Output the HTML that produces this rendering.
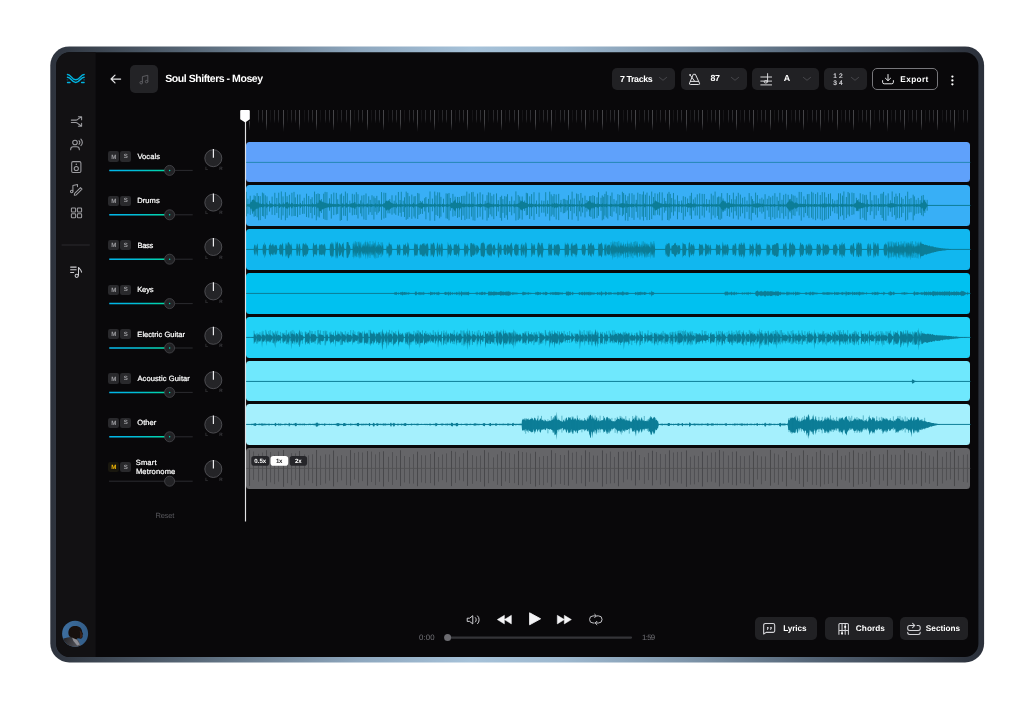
<!DOCTYPE html>
<html lang="en"><head><meta charset="utf-8"><title>Soul Shifters - Mosey</title>
<style>
*{box-sizing:border-box;margin:0;padding:0}
html,body{width:1036px;height:709px;background:#fff;overflow:hidden}
body{font-family:"Liberation Sans",sans-serif;color:#fff;position:relative;will-change:transform;-webkit-font-smoothing:antialiased;text-rendering:geometricPrecision}
.abs{position:absolute}
.t{position:absolute;white-space:nowrap;line-height:1}
.btn{position:absolute;background:#212124;border-radius:5px}
.ms{position:absolute;height:10.4px;border-radius:2.2px;background:#29292c;color:#a9a9ad;font-size:5.6px;font-weight:bold;text-align:center;line-height:10.6px}
svg{position:absolute;overflow:visible}
.lbl{position:absolute;white-space:nowrap;font-size:7.5px;line-height:9px;color:#fff;-webkit-text-stroke:0.25px #fff}
.lr{position:absolute;font-size:3.6px;color:#4a4a4e;line-height:1;font-weight:bold}
</style></head>
<body>
<svg width="1036" height="709" viewBox="0 0 1036 709" style="left:0;top:0">
<defs>
<linearGradient id="fg" x1="50" x2="984" y1="0" y2="0" gradientUnits="userSpaceOnUse">
<stop offset="0" stop-color="#2d323c"/><stop offset="0.03" stop-color="#363e49"/><stop offset="0.16" stop-color="#5a6a7a"/><stop offset="0.33" stop-color="#8ea7be"/><stop offset="0.45" stop-color="#a6c2d9"/><stop offset="0.55" stop-color="#9db8cf"/><stop offset="0.68" stop-color="#7f96ab"/><stop offset="0.82" stop-color="#536375"/><stop offset="0.96" stop-color="#333a45"/><stop offset="1" stop-color="#2b303a"/>
</linearGradient>
<clipPath id="sc"><rect x="56.2" y="52.2" width="922.2" height="604.8" rx="13.5"/></clipPath>
</defs>
<rect x="50.3" y="46.4" width="933.8" height="616" rx="19" fill="url(#fg)"/>
<rect x="56.2" y="52.2" width="922.2" height="604.8" rx="13.5" fill="#09080a"/>
<rect x="50" y="46" width="45.7" height="620" fill="#121113" clip-path="url(#sc)"/>
<rect x="61.6" y="244.5" width="28.2" height="1" fill="#2a2a2e"/>
</svg>
<svg style="left:110px;top:74px" width="11" height="10" viewBox="0 0 11 10"><path d="M10.6 5H1.2M5 1.1L1.1 5L5 8.9" fill="none" stroke="#e4e4e6" stroke-width="1.25" stroke-linecap="round" stroke-linejoin="round"/></svg>
<div class="abs" style="left:130px;top:65px;width:27.6px;height:27.6px;border-radius:5px;background:#232326"></div>
<svg style="left:138.5px;top:73.5px" width="10" height="11" viewBox="0 0 10 11"><path d="M3.4 8.6V2.6L8.8 1.3V7.5" fill="none" stroke="#626266" stroke-width="0.9" stroke-linejoin="round"/><ellipse cx="2.2" cy="8.7" rx="1.3" ry="1.2" fill="none" stroke="#626266" stroke-width="0.9"/><ellipse cx="7.6" cy="7.6" rx="1.3" ry="1.2" fill="none" stroke="#626266" stroke-width="0.9"/></svg>
<div class="t" style="left:165.30px;top:73.91px;font-size:10.56px;font-weight:bold;letter-spacing:-0.476px;color:#fff;">Soul Shifters - Mosey</div>
<div class="btn" style="left:612px;top:67.6px;width:63.3px;height:22.7px"></div>
<div class="t" style="left:619.95px;top:74.55px;font-size:8.85px;font-weight:bold;letter-spacing:-0.391px;color:#fff;">7 Tracks</div>
<svg style="left:659px;top:77.4px" width="8" height="3.8" viewBox="0 0 8 3.8"><path d="M0.4 0.4L4.0 3.3L7.6 0.4" fill="none" stroke="#4c4c50" stroke-width="0.9" stroke-linecap="round" stroke-linejoin="round"/></svg>
<div class="btn" style="left:680.7px;top:67.6px;width:66.3px;height:22.7px"></div>
<svg width="1036" height="709" viewBox="0 0 1036 709" style="left:0;top:0"><g fill="none" stroke="#e2e2e4" stroke-width="1" stroke-linejoin="round" stroke-linecap="round"><path d="M693.6 74.3H695.4L699.5 83.2A0.9 0.9 0 0 1 698.7 84.5H690.3A0.9 0.9 0 0 1 689.5 83.2Z"/><path d="M690.4 81.4H698.6"/><path d="M694.6 81.2L690.6 75.6"/></g><circle cx="690.1" cy="74.9" r="0.95" fill="#e2e2e4"/></svg>
<div class="t" style="left:710.55px;top:74.11px;font-size:8.85px;font-weight:bold;letter-spacing:-0.521px;color:#fff;">87</div>
<svg style="left:730.8px;top:77.4px" width="8" height="3.8" viewBox="0 0 8 3.8"><path d="M0.4 0.4L4.0 3.3L7.6 0.4" fill="none" stroke="#4c4c50" stroke-width="0.9" stroke-linecap="round" stroke-linejoin="round"/></svg>
<div class="btn" style="left:752px;top:67.6px;width:66.8px;height:22.7px"></div>
<svg width="1036" height="709" viewBox="0 0 1036 709" style="left:0;top:0"><g fill="none" stroke="#e2e2e4" stroke-width="0.95" stroke-linecap="round"><path d="M760.8 77H771.6M760.8 81.1H771.6M760.8 84.9H771.6M767.6 73.6V81.2"/><ellipse cx="765.8" cy="81.8" rx="1.7" ry="1.25"/></g></svg>
<div class="t" style="left:783.79px;top:73.94px;font-size:8.85px;font-weight:bold;letter-spacing:0.000px;color:#fff;">A</div>
<svg style="left:802.6px;top:77.4px" width="8" height="3.8" viewBox="0 0 8 3.8"><path d="M0.4 0.4L4.0 3.3L7.6 0.4" fill="none" stroke="#4c4c50" stroke-width="0.9" stroke-linecap="round" stroke-linejoin="round"/></svg>
<div class="btn" style="left:824px;top:67.6px;width:43px;height:22.7px"></div>
<div class="t" style="left:833.36px;top:73.99px;font-size:6.60px;font-weight:normal;letter-spacing:0.063px;color:#dcdce0;-webkit-text-stroke:0.2px #dcdce0">1 2</div>
<div class="t" style="left:833.14px;top:80.79px;font-size:6.60px;font-weight:normal;letter-spacing:0.163px;color:#dcdce0;-webkit-text-stroke:0.2px #dcdce0">3 4</div>
<svg style="left:850.6px;top:77.4px" width="8" height="3.8" viewBox="0 0 8 3.8"><path d="M0.4 0.4L4.0 3.3L7.6 0.4" fill="none" stroke="#4c4c50" stroke-width="0.9" stroke-linecap="round" stroke-linejoin="round"/></svg>
<div class="abs" style="left:872px;top:67.6px;width:65.5px;height:22.7px;border:1px solid #77777b;border-radius:5px"></div>
<svg style="left:881.6px;top:74.4px" width="12" height="10.4" viewBox="0 0 12 10.4"><path d="M6 0.5v6 M3.4 4.2L6 6.7L8.6 4.2 M0.6 6.6v1.6a1.6 1.6 0 0 0 1.6 1.6h7.6a1.6 1.6 0 0 0 1.6-1.6V6.6" fill="none" stroke="#e8e8ea" stroke-width="1" stroke-linecap="round" stroke-linejoin="round"/></svg>
<div class="t" style="left:900.30px;top:75.78px;font-size:8.23px;font-weight:bold;letter-spacing:0.390px;color:#fff;">Export</div>
<svg style="left:950px;top:75px" width="5" height="11" viewBox="0 0 5 11"><circle cx="2.4" cy="1.6" r="1.15" fill="#fff"/><circle cx="2.4" cy="5.45" r="1.15" fill="#fff"/><circle cx="2.4" cy="9.3" r="1.15" fill="#fff"/></svg>
<svg width="1036" height="709" viewBox="0 0 1036 709" style="left:0;top:0"><g fill="none" stroke="#00b4e1" stroke-width="1.5" stroke-linecap="round" stroke-linejoin="round"><path d="M67.5 74.45C71.2 74.45 71.3 79.7 75.8 79.7S80.4 74.45 84.1 74.45"/><path d="M67.5 77.15C71.2 77.15 71.3 82.4 75.8 82.4S80.4 77.15 84.1 77.15"/><path d="M67.5 82.5H70M81.6 82.5H84.1" stroke-width="1.35"/><path d="M67.1 79.8H67.9M83.7 79.8H84.5" stroke-width="1.2" stroke-opacity="0.4"/></g></svg>
<svg width="1036" height="709" viewBox="0 0 1036 709" style="left:0;top:0"><g fill="none" stroke="#9c9ca0" stroke-width="1.05" stroke-linecap="round" stroke-linejoin="round"><path d="M71.3 120.1H75.6C77.2 120.1 77.6 119.4 78.6 118.6L81.4 117M78.4 116.8H81.6V119.8"/><path d="M71.3 122.5H75.6C77.2 122.5 77.6 123.2 78.6 124L81.4 126M78.4 126.3H81.6V123.2"/><circle cx="75" cy="142.5" r="2.3"/><path d="M70.7 149.7V149.2A2.5 2.5 0 0 1 73.2 146.7H76.8A2.5 2.5 0 0 1 79.3 149.2V149.7"/><path d="M79 140.7A2.6 2.6 0 0 1 79 144.3M80.9 139.1A5 5 0 0 1 80.9 145.7"/><rect x="71.7" y="161.6" width="9.2" height="10.9" rx="1.3"/><circle cx="76.3" cy="168.5" r="2.1"/><path d="M72.9 191V185.5L77.5 184.5V186.6"/><circle cx="71.7" cy="191.4" r="1.25"/><path d="M74.3 195.2L74.7 193.4L80.5 187.6L82 189.1L76.2 194.9Z"/><rect x="71.4" y="208" width="4.2" height="3.9" rx="0.7"/><rect x="77.4" y="208" width="4.2" height="3.9" rx="0.7"/><rect x="71.4" y="213.8" width="4.2" height="3.9" rx="0.7"/><rect x="77.4" y="213.8" width="4.2" height="3.9" rx="0.7"/><g stroke="#cdcdd1"><path d="M70.6 267.1H76.2M70.6 269.7H76.2M70.6 272.4H73.7"/><path d="M78.5 275.2V267.4C79.4 268.6 81.2 269.8 81.6 272.2"/><circle cx="76.7" cy="275.8" r="1.6"/></g></g><circle cx="76.3" cy="164.2" r="0.75" fill="#9c9ca0"/></svg>
<svg width="1036" height="709" viewBox="0 0 1036 709" style="left:0;top:0"><defs><clipPath id="av"><circle cx="75.1" cy="633.7" r="13"/></clipPath>
<linearGradient id="avg" x1="62" x2="88" y1="0" y2="0" gradientUnits="userSpaceOnUse"><stop offset="0" stop-color="#3e6fa0"/><stop offset="1" stop-color="#335d88"/></linearGradient>
<linearGradient id="avb" x1="62" x2="80" y1="636" y2="647" gradientUnits="userSpaceOnUse"><stop offset="0" stop-color="#1c1c20"/><stop offset="0.55" stop-color="#3e3e43"/><stop offset="1" stop-color="#5c5c62"/></linearGradient></defs>
<circle cx="75.1" cy="633.7" r="13" fill="url(#avg)"/>
<g clip-path="url(#av)">
<path d="M60 650V641C62 638.5 66 637.6 69.5 637.2L73 635.5L78.5 640.5L80.5 645.2L79 650Z" fill="url(#avb)"/>
<path d="M71.5 636L76.5 639L79.8 644.6L77.2 645.4L73.4 641Z" fill="#8e8e94"/>
<path d="M69.6 636.4C67.6 633.6 68.2 629.4 70.6 627.4C73.2 625.4 78 625.4 80.4 627.8C81.6 629 82 630.6 82.2 632L83.2 634.2L82.4 634.8L82.6 636.8C82.4 638.4 81.2 638.8 79.8 638.6L77.6 638.2L76.4 639.4Z" fill="#17100e"/>
<path d="M79.6 630.5C80.8 631 81.6 632.4 82 633.8L82.4 636.6C81.8 638 80.8 638.4 79.6 638.2C80.4 636 80.4 633 79.6 630.5Z" fill="#3a2218"/>
</g></svg>
<svg width="1036" height="709" viewBox="0 0 1036 709" style="left:0;top:0"><defs>
<linearGradient id="rg" x1="0" x2="0" y1="110" y2="132" gradientUnits="userSpaceOnUse"><stop offset="0" stop-color="#5c5c60"/><stop offset="0.6" stop-color="#5c5c60" stop-opacity="0.9"/><stop offset="0.85" stop-color="#5c5c60" stop-opacity="0.25"/><stop offset="1" stop-color="#5c5c60" stop-opacity="0"/></linearGradient>
<linearGradient id="rs" x1="0" x2="0" y1="110" y2="123" gradientUnits="userSpaceOnUse"><stop offset="0" stop-color="#37373b"/><stop offset="0.7" stop-color="#37373b" stop-opacity="0.9"/><stop offset="1" stop-color="#37373b" stop-opacity="0.1"/></linearGradient>
</defs><g fill="none" stroke-width="1"><path d="M249.5 121V130" stroke="url(#rg)" stroke-opacity="0.8"/><path d="M258.5 110V123" stroke="url(#rs)" stroke-opacity="0.70"/><path d="M262.5 110V123" stroke="url(#rs)" stroke-opacity="0.85"/><path d="M266.5 110V130" stroke="url(#rg)" stroke-opacity="0.74"/><path d="M270.5 110V123" stroke="url(#rs)" stroke-opacity="0.29"/><path d="M274.5 110V123" stroke="url(#rs)" stroke-opacity="0.70"/><path d="M278.5 110V123" stroke="url(#rs)" stroke-opacity="0.85"/><path d="M283.5 110V134.5" stroke="url(#rg)" stroke-opacity="0.74"/><path d="M287.5 110V123" stroke="url(#rs)" stroke-opacity="0.29"/><path d="M291.5 110V123" stroke="url(#rs)" stroke-opacity="0.70"/><path d="M295.5 110V123" stroke="url(#rs)" stroke-opacity="0.85"/><path d="M299.5 110V130" stroke="url(#rg)" stroke-opacity="0.74"/><path d="M304.5 110V123" stroke="url(#rs)" stroke-opacity="0.29"/><path d="M308.5 110V123" stroke="url(#rs)" stroke-opacity="0.70"/><path d="M312.5 110V123" stroke="url(#rs)" stroke-opacity="0.85"/><path d="M316.5 110V130" stroke="url(#rg)" stroke-opacity="0.74"/><path d="M320.5 110V123" stroke="url(#rs)" stroke-opacity="0.29"/><path d="M325.5 110V123" stroke="url(#rs)" stroke-opacity="0.71"/><path d="M329.5 110V123" stroke="url(#rs)" stroke-opacity="0.85"/><path d="M333.5 110V130" stroke="url(#rg)" stroke-opacity="0.74"/><path d="M337.5 110V123" stroke="url(#rs)" stroke-opacity="0.30"/><path d="M341.5 110V123" stroke="url(#rs)" stroke-opacity="0.71"/><path d="M346.5 110V123" stroke="url(#rs)" stroke-opacity="0.85"/><path d="M350.5 110V134.5" stroke="url(#rg)" stroke-opacity="0.74"/><path d="M354.5 110V123" stroke="url(#rs)" stroke-opacity="0.30"/><path d="M358.5 110V123" stroke="url(#rs)" stroke-opacity="0.71"/><path d="M362.5 110V123" stroke="url(#rs)" stroke-opacity="0.85"/><path d="M367.5 110V130" stroke="url(#rg)" stroke-opacity="0.74"/><path d="M371.5 110V123" stroke="url(#rs)" stroke-opacity="0.30"/><path d="M375.5 110V123" stroke="url(#rs)" stroke-opacity="0.71"/><path d="M379.5 110V123" stroke="url(#rs)" stroke-opacity="0.85"/><path d="M383.5 110V130" stroke="url(#rg)" stroke-opacity="0.74"/><path d="M388.5 110V123" stroke="url(#rs)" stroke-opacity="0.30"/><path d="M392.5 110V123" stroke="url(#rs)" stroke-opacity="0.71"/><path d="M396.5 110V123" stroke="url(#rs)" stroke-opacity="0.85"/><path d="M400.5 110V130" stroke="url(#rg)" stroke-opacity="0.74"/><path d="M404.5 110V123" stroke="url(#rs)" stroke-opacity="0.30"/><path d="M409.5 110V123" stroke="url(#rs)" stroke-opacity="0.71"/><path d="M413.5 110V123" stroke="url(#rs)" stroke-opacity="0.85"/><path d="M417.5 110V134.5" stroke="url(#rg)" stroke-opacity="0.74"/><path d="M421.5 110V123" stroke="url(#rs)" stroke-opacity="0.30"/><path d="M425.5 110V123" stroke="url(#rs)" stroke-opacity="0.71"/><path d="M430.5 110V123" stroke="url(#rs)" stroke-opacity="0.85"/><path d="M434.5 110V130" stroke="url(#rg)" stroke-opacity="0.74"/><path d="M438.5 110V123" stroke="url(#rs)" stroke-opacity="0.30"/><path d="M442.5 110V123" stroke="url(#rs)" stroke-opacity="0.71"/><path d="M446.5 110V123" stroke="url(#rs)" stroke-opacity="0.84"/><path d="M451.5 110V130" stroke="url(#rg)" stroke-opacity="0.74"/><path d="M455.5 110V123" stroke="url(#rs)" stroke-opacity="0.30"/><path d="M459.5 110V123" stroke="url(#rs)" stroke-opacity="0.71"/><path d="M463.5 110V123" stroke="url(#rs)" stroke-opacity="0.84"/><path d="M467.5 110V130" stroke="url(#rg)" stroke-opacity="0.74"/><path d="M472.5 110V123" stroke="url(#rs)" stroke-opacity="0.30"/><path d="M476.5 110V123" stroke="url(#rs)" stroke-opacity="0.71"/><path d="M480.5 110V123" stroke="url(#rs)" stroke-opacity="0.84"/><path d="M484.5 110V134.5" stroke="url(#rg)" stroke-opacity="0.74"/><path d="M488.5 110V123" stroke="url(#rs)" stroke-opacity="0.30"/><path d="M493.5 110V123" stroke="url(#rs)" stroke-opacity="0.71"/><path d="M497.5 110V123" stroke="url(#rs)" stroke-opacity="0.84"/><path d="M501.5 110V130" stroke="url(#rg)" stroke-opacity="0.74"/><path d="M505.5 110V123" stroke="url(#rs)" stroke-opacity="0.30"/><path d="M509.5 110V123" stroke="url(#rs)" stroke-opacity="0.71"/><path d="M514.5 110V123" stroke="url(#rs)" stroke-opacity="0.84"/><path d="M518.5 110V130" stroke="url(#rg)" stroke-opacity="0.74"/><path d="M522.5 110V123" stroke="url(#rs)" stroke-opacity="0.30"/><path d="M526.5 110V123" stroke="url(#rs)" stroke-opacity="0.71"/><path d="M530.5 110V123" stroke="url(#rs)" stroke-opacity="0.84"/><path d="M535.5 110V130" stroke="url(#rg)" stroke-opacity="0.74"/><path d="M539.5 110V123" stroke="url(#rs)" stroke-opacity="0.30"/><path d="M543.5 110V123" stroke="url(#rs)" stroke-opacity="0.72"/><path d="M547.5 110V123" stroke="url(#rs)" stroke-opacity="0.84"/><path d="M551.5 110V134.5" stroke="url(#rg)" stroke-opacity="0.74"/><path d="M555.5 110V123" stroke="url(#rs)" stroke-opacity="0.30"/><path d="M560.5 110V123" stroke="url(#rs)" stroke-opacity="0.72"/><path d="M564.5 110V123" stroke="url(#rs)" stroke-opacity="0.84"/><path d="M568.5 110V130" stroke="url(#rg)" stroke-opacity="0.74"/><path d="M572.5 110V123" stroke="url(#rs)" stroke-opacity="0.30"/><path d="M576.5 110V123" stroke="url(#rs)" stroke-opacity="0.72"/><path d="M581.5 110V123" stroke="url(#rs)" stroke-opacity="0.84"/><path d="M585.5 110V130" stroke="url(#rg)" stroke-opacity="0.74"/><path d="M589.5 110V123" stroke="url(#rs)" stroke-opacity="0.31"/><path d="M593.5 110V123" stroke="url(#rs)" stroke-opacity="0.72"/><path d="M597.5 110V123" stroke="url(#rs)" stroke-opacity="0.84"/><path d="M602.5 110V130" stroke="url(#rg)" stroke-opacity="0.74"/><path d="M606.5 110V123" stroke="url(#rs)" stroke-opacity="0.31"/><path d="M610.5 110V123" stroke="url(#rs)" stroke-opacity="0.72"/><path d="M614.5 110V123" stroke="url(#rs)" stroke-opacity="0.84"/><path d="M618.5 110V134.5" stroke="url(#rg)" stroke-opacity="0.74"/><path d="M623.5 110V123" stroke="url(#rs)" stroke-opacity="0.31"/><path d="M627.5 110V123" stroke="url(#rs)" stroke-opacity="0.72"/><path d="M631.5 110V123" stroke="url(#rs)" stroke-opacity="0.84"/><path d="M635.5 110V130" stroke="url(#rg)" stroke-opacity="0.74"/><path d="M639.5 110V123" stroke="url(#rs)" stroke-opacity="0.31"/><path d="M644.5 110V123" stroke="url(#rs)" stroke-opacity="0.72"/><path d="M648.5 110V123" stroke="url(#rs)" stroke-opacity="0.84"/><path d="M652.5 110V130" stroke="url(#rg)" stroke-opacity="0.73"/><path d="M656.5 110V123" stroke="url(#rs)" stroke-opacity="0.31"/><path d="M660.5 110V123" stroke="url(#rs)" stroke-opacity="0.72"/><path d="M665.5 110V123" stroke="url(#rs)" stroke-opacity="0.83"/><path d="M669.5 110V130" stroke="url(#rg)" stroke-opacity="0.73"/><path d="M673.5 110V123" stroke="url(#rs)" stroke-opacity="0.31"/><path d="M677.5 110V123" stroke="url(#rs)" stroke-opacity="0.72"/><path d="M681.5 110V123" stroke="url(#rs)" stroke-opacity="0.83"/><path d="M686.5 110V134.5" stroke="url(#rg)" stroke-opacity="0.73"/><path d="M690.5 110V123" stroke="url(#rs)" stroke-opacity="0.31"/><path d="M694.5 110V123" stroke="url(#rs)" stroke-opacity="0.72"/><path d="M698.5 110V123" stroke="url(#rs)" stroke-opacity="0.83"/><path d="M702.5 110V130" stroke="url(#rg)" stroke-opacity="0.73"/><path d="M707.5 110V123" stroke="url(#rs)" stroke-opacity="0.31"/><path d="M711.5 110V123" stroke="url(#rs)" stroke-opacity="0.72"/><path d="M715.5 110V123" stroke="url(#rs)" stroke-opacity="0.83"/><path d="M719.5 110V130" stroke="url(#rg)" stroke-opacity="0.73"/><path d="M723.5 110V123" stroke="url(#rs)" stroke-opacity="0.31"/><path d="M728.5 110V123" stroke="url(#rs)" stroke-opacity="0.72"/><path d="M732.5 110V123" stroke="url(#rs)" stroke-opacity="0.83"/><path d="M736.5 110V130" stroke="url(#rg)" stroke-opacity="0.73"/><path d="M740.5 110V123" stroke="url(#rs)" stroke-opacity="0.31"/><path d="M744.5 110V123" stroke="url(#rs)" stroke-opacity="0.72"/><path d="M749.5 110V123" stroke="url(#rs)" stroke-opacity="0.83"/><path d="M753.5 110V134.5" stroke="url(#rg)" stroke-opacity="0.73"/><path d="M757.5 110V123" stroke="url(#rs)" stroke-opacity="0.31"/><path d="M761.5 110V123" stroke="url(#rs)" stroke-opacity="0.73"/><path d="M765.5 110V123" stroke="url(#rs)" stroke-opacity="0.83"/><path d="M770.5 110V130" stroke="url(#rg)" stroke-opacity="0.73"/><path d="M774.5 110V123" stroke="url(#rs)" stroke-opacity="0.31"/><path d="M778.5 110V123" stroke="url(#rs)" stroke-opacity="0.73"/><path d="M782.5 110V123" stroke="url(#rs)" stroke-opacity="0.83"/><path d="M786.5 110V130" stroke="url(#rg)" stroke-opacity="0.73"/><path d="M791.5 110V123" stroke="url(#rs)" stroke-opacity="0.31"/><path d="M795.5 110V123" stroke="url(#rs)" stroke-opacity="0.73"/><path d="M799.5 110V123" stroke="url(#rs)" stroke-opacity="0.83"/><path d="M803.5 110V130" stroke="url(#rg)" stroke-opacity="0.73"/><path d="M807.5 110V123" stroke="url(#rs)" stroke-opacity="0.31"/><path d="M812.5 110V123" stroke="url(#rs)" stroke-opacity="0.73"/><path d="M816.5 110V123" stroke="url(#rs)" stroke-opacity="0.83"/><path d="M820.5 110V134.5" stroke="url(#rg)" stroke-opacity="0.73"/><path d="M824.5 110V123" stroke="url(#rs)" stroke-opacity="0.31"/><path d="M828.5 110V123" stroke="url(#rs)" stroke-opacity="0.73"/><path d="M832.5 110V123" stroke="url(#rs)" stroke-opacity="0.83"/><path d="M837.5 110V130" stroke="url(#rg)" stroke-opacity="0.73"/><path d="M841.5 110V123" stroke="url(#rs)" stroke-opacity="0.32"/><path d="M845.5 110V123" stroke="url(#rs)" stroke-opacity="0.73"/><path d="M849.5 110V123" stroke="url(#rs)" stroke-opacity="0.83"/><path d="M853.5 110V130" stroke="url(#rg)" stroke-opacity="0.73"/><path d="M858.5 110V123" stroke="url(#rs)" stroke-opacity="0.32"/><path d="M862.5 110V123" stroke="url(#rs)" stroke-opacity="0.73"/><path d="M866.5 110V123" stroke="url(#rs)" stroke-opacity="0.83"/><path d="M870.5 110V130" stroke="url(#rg)" stroke-opacity="0.73"/><path d="M874.5 110V123" stroke="url(#rs)" stroke-opacity="0.32"/><path d="M879.5 110V123" stroke="url(#rs)" stroke-opacity="0.73"/><path d="M883.5 110V123" stroke="url(#rs)" stroke-opacity="0.82"/><path d="M887.5 110V134.5" stroke="url(#rg)" stroke-opacity="0.73"/><path d="M891.5 110V123" stroke="url(#rs)" stroke-opacity="0.32"/><path d="M895.5 110V123" stroke="url(#rs)" stroke-opacity="0.73"/><path d="M900.5 110V123" stroke="url(#rs)" stroke-opacity="0.82"/><path d="M904.5 110V130" stroke="url(#rg)" stroke-opacity="0.73"/><path d="M908.5 110V123" stroke="url(#rs)" stroke-opacity="0.32"/><path d="M912.5 110V123" stroke="url(#rs)" stroke-opacity="0.73"/><path d="M916.5 110V123" stroke="url(#rs)" stroke-opacity="0.82"/><path d="M921.5 110V130" stroke="url(#rg)" stroke-opacity="0.73"/><path d="M925.5 110V123" stroke="url(#rs)" stroke-opacity="0.32"/><path d="M929.5 110V123" stroke="url(#rs)" stroke-opacity="0.73"/><path d="M933.5 110V123" stroke="url(#rs)" stroke-opacity="0.82"/><path d="M937.5 110V130" stroke="url(#rg)" stroke-opacity="0.73"/><path d="M942.5 110V123" stroke="url(#rs)" stroke-opacity="0.32"/><path d="M946.5 110V123" stroke="url(#rs)" stroke-opacity="0.73"/><path d="M950.5 110V123" stroke="url(#rs)" stroke-opacity="0.82"/><path d="M954.5 110V134.5" stroke="url(#rg)" stroke-opacity="0.73"/><path d="M958.5 110V123" stroke="url(#rs)" stroke-opacity="0.32"/><path d="M963.5 110V123" stroke="url(#rs)" stroke-opacity="0.73"/><path d="M967.5 110V123" stroke="url(#rs)" stroke-opacity="0.82"/></g></svg>
<div class="abs" style="left:246.0px;top:141.6px;width:724.4px;height:40.8px;border-radius:3.5px;background:#5fa1fb"></div>
<svg style="left:246.0px;top:141.6px" width="724.4" height="40.8" viewBox="0 0 724.4 40.8"><path d="M0 20.4H724.4" stroke="#0c7d97" stroke-width="0.7" fill="none"/></svg>
<div class="abs" style="left:246.0px;top:185.4px;width:724.4px;height:40.8px;border-radius:3.5px;background:#38aff6"></div>
<svg style="left:246.0px;top:185.4px" width="724.4" height="40.8" viewBox="0 0 724.4 40.8"><path d="M0 20.4H724.4" stroke="#0c7d97" stroke-width="0.7" fill="none"/><path d="M0.4,6.8V31.3M1.9,13.7V28.7M4.2,10.8V29.8M6.5,15.1V28.7M8.1,10.4V31.8M9.3,11.1V31.1M11.1,8.1V32.3M12.5,11.0V35.3M14.2,11.1V35.1M16.4,7.6V31.0M17.7,8.4V31.5M19.3,10.3V33.8M21.0,11.4V30.2M23.5,15.9V26.6M26.1,11.6V29.8M28.8,7.8V30.1M30.8,13.0V28.0M32.7,7.7V32.9M35.3,6.5V34.8M37.0,11.4V30.5M39.4,7.2V35.3M41.1,11.2V32.9M43.4,9.8V30.4M45.9,7.8V31.3M48.0,6.9V31.0M49.3,12.4V31.0M51.5,9.5V32.1M53.9,9.5V29.9M56.6,15.8V28.9M58.2,12.8V28.8M60.5,8.7V32.0M62.7,11.0V32.6M64.8,14.2V28.0M66.1,12.2V33.4M68.5,6.6V30.1M70.3,9.1V35.3M72.0,8.4V31.5M73.3,9.0V32.5M75.4,14.1V28.0M77.7,8.7V33.9M79.1,6.9V34.8M80.9,7.1V35.1M83.5,13.3V25.7M85.3,9.2V33.6M87.8,7.6V30.1M90.3,7.9V29.5M91.7,14.3V28.9M94.2,9.5V35.8M95.5,8.5V35.0M97.7,10.9V30.7M99.4,6.6V30.9M101.3,8.3V35.7M103.8,15.6V27.7M106.3,8.8V30.3M108.3,9.5V29.9M110.3,7.2V29.9M112.0,9.2V33.5M114.6,15.4V28.4M115.8,10.6V31.3M117.9,10.1V34.5M120.0,8.5V35.0M122.7,11.3V29.7M124.2,14.9V27.2M126.0,10.3V30.0M127.9,11.4V34.5M129.1,13.1V26.8M130.8,10.9V29.7M132.2,15.3V27.8M133.4,15.4V26.4M135.5,7.1V34.8M137.9,7.7V33.5M139.7,7.9V32.8M142.0,15.8V28.3M143.8,14.0V28.3M146.0,10.3V29.7M148.2,15.7V28.4M149.8,10.4V29.8M152.4,7.0V30.7M154.1,15.0V27.8M155.3,6.8V31.7M157.2,15.7V27.0M158.5,12.3V32.0M160.2,6.6V34.8M161.8,7.9V33.9M163.3,11.2V32.1M165.8,9.6V33.8M168.0,11.4V31.5M169.2,11.1V33.4M171.7,8.0V34.0M173.0,8.6V29.9M174.4,15.9V28.9M176.4,15.8V28.9M178.7,13.2V26.4M179.9,12.0V34.3M182.5,13.9V27.5M184.0,6.5V35.6M186.4,13.6V26.3M188.7,6.6V35.8M190.0,10.5V29.9M191.7,7.3V31.0M193.6,7.4V33.3M194.9,11.9V31.7M197.5,13.7V27.5M200.1,8.4V33.4M201.6,8.7V33.8M203.0,8.0V35.3M204.4,13.0V25.7M206.9,8.9V31.6M209.1,11.7V30.9M211.5,12.0V32.8M213.2,12.0V32.1M215.5,11.1V34.9M217.1,10.8V30.6M218.9,10.7V35.1M220.8,6.6V33.8M223.2,8.6V33.9M225.6,7.2V31.6M227.1,6.9V35.3M228.9,11.6V35.7M231.6,8.6V32.7M234.1,7.3V31.6M236.7,9.4V34.6M239.2,15.8V25.4M241.0,10.2V35.6M242.4,7.4V32.7M244.2,7.8V29.4M245.9,10.9V31.4M247.8,9.3V34.2M250.5,8.4V31.1M252.3,15.2V26.5M254.3,12.0V32.9M255.6,10.7V35.7M256.9,14.1V27.9M258.7,11.1V32.9M260.2,11.6V30.3M261.5,9.2V34.7M263.7,16.0V26.9M265.7,11.5V30.3M268.2,15.7V28.3M269.9,6.4V35.5M272.2,10.1V34.9M273.7,11.5V33.5M276.2,11.5V34.6M278.6,15.6V25.9M280.3,7.8V30.3M281.5,8.3V30.0M283.7,11.3V33.9M285.6,9.1V31.2M288.0,7.2V34.9M290.5,15.5V28.9M293.1,7.6V31.9M295.7,15.5V27.7M297.9,15.8V27.7M299.7,7.2V31.4M301.6,15.4V28.7M303.7,6.7V35.5M305.2,9.4V31.3M306.9,11.2V29.7M308.1,9.0V31.8M310.2,9.5V34.5M312.7,8.9V35.1M315.0,14.9V27.1M317.3,13.9V28.3M318.7,13.9V28.0M319.9,14.9V26.6M321.3,15.3V25.4M322.5,10.2V34.3M324.6,14.5V26.0M326.1,6.7V34.7M328.2,13.5V28.3M330.6,8.5V31.2M332.1,9.1V35.7M333.5,15.6V26.4M334.9,8.0V31.4M336.6,12.8V27.5M339.0,10.7V32.4M340.9,15.0V26.5M343.6,11.2V31.2M344.9,11.0V32.0M346.9,10.2V33.8M348.5,11.0V33.5M351.0,12.3V32.9M352.5,7.2V30.8M355.0,12.8V25.8M356.3,10.5V35.3M357.7,11.8V34.3M358.9,8.9V30.6M360.3,6.5V32.4M361.8,10.1V33.6M364.4,10.9V31.0M366.0,7.5V31.8M368.0,14.1V26.6M370.3,15.6V28.4M371.9,9.2V35.3M373.8,9.9V30.1M376.4,6.8V31.1M377.6,8.1V29.6M379.4,9.8V35.5M380.6,15.6V28.0M381.9,11.2V35.8M383.3,8.4V31.9M386.0,8.2V32.9M388.0,9.7V34.9M390.3,14.8V26.8M391.8,7.7V32.6M394.0,9.0V34.6M396.2,9.5V31.7M397.5,6.5V35.6M399.4,9.7V32.0M401.0,7.6V35.1M403.5,10.7V35.0M405.7,6.6V34.1M407.6,12.0V30.2M409.0,8.3V30.4M411.7,8.7V29.7M413.6,7.2V30.4M416.2,7.4V35.3M418.4,12.9V27.7M419.8,16.0V25.7M421.6,8.7V35.0M423.0,6.9V35.4M424.3,8.9V33.5M425.7,13.0V27.3M427.5,8.0V30.7M429.0,14.6V26.4M431.5,10.4V34.3M433.1,16.0V27.2M435.6,15.5V27.9M437.3,11.2V34.9M439.4,11.9V31.4M441.6,13.5V27.1M444.1,10.8V30.5M445.5,7.8V34.0M447.4,14.4V25.6M449.2,12.4V30.6M451.3,9.3V30.5M453.7,8.4V33.9M456.2,8.9V30.6M458.3,9.0V32.5M460.6,14.1V25.6M463.3,14.7V27.6M465.3,8.7V34.4M467.2,10.5V30.4M469.1,6.6V32.7M471.4,12.3V30.9M472.6,11.5V34.3M474.1,11.7V34.9M475.7,8.1V33.7M477.1,13.5V27.0M479.0,15.9V25.8M481.3,8.1V31.0M483.6,10.1V31.7M485.6,14.2V27.5M487.4,7.7V33.6M489.1,14.4V26.2M490.4,11.2V30.5M492.3,7.8V34.5M494.4,9.6V31.4M496.6,12.8V28.3M498.8,11.9V33.4M501.0,15.6V26.9M503.2,8.1V34.2M505.3,11.2V35.4M506.5,14.1V27.9M507.8,16.0V27.9M509.6,7.6V29.7M511.4,10.1V32.5M513.9,13.8V26.7M515.9,12.7V28.5M517.6,14.5V26.8M519.1,9.2V34.1M521.3,13.8V25.4M523.0,10.9V31.9M524.7,12.3V35.0M526.8,10.8V32.3M528.9,8.2V34.0M531.1,11.8V32.7M532.5,15.8V25.5M533.9,7.8V33.3M536.0,14.8V28.2M537.7,9.9V33.8M539.8,8.8V31.2M542.2,9.8V34.3M544.2,14.0V25.9M545.7,9.2V33.7M547.2,10.4V30.3M549.0,10.8V30.9M550.9,12.7V26.5M553.2,6.9V30.5M555.3,7.0V35.6M557.9,11.3V32.3M559.5,14.4V28.0M561.4,9.2V30.7M563.0,9.0V33.1M565.6,6.8V32.7M567.1,7.7V34.3M569.6,9.0V35.2M571.7,7.4V33.6M574.3,10.0V34.3M576.3,7.2V35.7M578.6,7.3V35.1M580.2,12.3V34.3M582.5,8.9V33.7M584.5,8.4V30.9M586.6,14.1V26.3M588.8,15.6V28.2M591.1,14.8V28.6M592.6,8.3V34.4M594.5,8.4V31.3M596.5,10.6V30.3M597.9,6.5V34.9M600.4,12.0V33.1M602.1,7.0V29.6M603.4,8.3V31.3M606.0,7.6V30.0M607.9,8.1V29.4M610.4,12.8V26.1M612.8,14.3V26.2M614.3,8.3V34.2M616.9,9.3V32.8M618.7,10.2V34.8M620.3,9.8V35.4M621.6,14.6V27.0M624.3,6.9V30.1M625.9,15.3V26.3M628.2,10.2V33.9M630.2,10.3V30.3M632.4,13.4V25.8M634.9,8.8V30.0M636.2,8.6V33.0M637.6,6.9V35.5M639.9,10.5V35.8M642.2,8.4V30.7M644.4,15.3V26.7M646.2,6.5V31.9M648.6,11.9V30.2M650.0,8.7V34.7M651.3,11.2V32.9M653.5,8.2V33.3M655.6,12.3V32.1M657.1,13.9V27.9M659.6,10.9V35.7M661.7,6.7V34.7M663.2,14.0V27.5M665.0,13.0V27.2M667.2,9.7V35.3M668.4,11.4V30.5M670.2,14.8V28.8M672.3,12.9V28.6M674.2,15.2V27.9M675.7,10.8V30.2M677.3,10.0V31.2M678.9,14.8V27.9M681.2,14.9V25.7" stroke="#0c7d97" stroke-width="0.8" stroke-opacity="1" fill="none"/><path d="M0.0,18.7 0.6,19.1 1.2,19.1 1.8,19.5 2.4,19.3 3.0,18.6 3.6,19.5 4.2,17.2 4.8,17.4 5.4,16.7 6.0,14.8 6.6,14.9 7.2,14.2 7.8,14.8 8.4,14.9 9.0,16.4 9.6,16.4 10.2,17.5 10.8,17.0 11.4,16.7 12.0,18.5 12.6,17.3 13.2,17.8 13.8,19.1 14.4,18.6 15.0,18.7 15.6,19.0 16.2,19.0 16.8,17.8 17.4,18.9 18.0,19.0 18.6,19.4 19.2,19.5 19.8,19.5 20.4,17.3 21.0,19.1 21.6,19.1 22.2,19.7 22.8,19.3 23.4,19.4 24.0,19.3 24.6,17.9 25.2,18.3 25.8,18.9 26.4,19.1 27.0,19.2 27.6,19.8 28.2,19.4 28.8,18.5 29.4,18.7 30.0,19.3 30.6,19.5 31.2,19.8 31.8,19.6 32.4,19.5 33.0,17.7 33.6,18.3 34.2,19.4 34.8,18.9 35.4,19.5 36.0,19.4 36.6,19.1 37.2,17.1 37.8,19.0 38.4,19.2 39.0,18.4 39.6,17.6 40.2,17.7 40.8,17.1 41.4,17.1 42.0,17.3 42.6,18.9 43.2,18.5 43.8,18.6 44.4,19.4 45.0,18.6 45.6,17.4 46.2,18.0 46.8,18.8 47.4,19.5 48.0,19.3 48.6,18.9 49.2,19.2 49.8,18.9 50.4,18.9 51.0,18.9 51.6,19.1 52.2,19.4 52.8,19.3 53.4,19.8 54.0,17.9 54.6,18.1 55.2,19.3 55.8,19.4 56.4,19.5 57.0,19.4 57.6,19.8 58.2,18.5 58.8,19.6 59.4,19.6 60.0,19.3 60.6,19.5 61.2,19.3 61.8,19.6 62.4,18.9 63.0,19.2 63.6,19.2 64.2,19.2 64.8,19.4 65.4,19.2 66.0,18.9 66.6,17.4 67.2,19.1 67.8,19.2 68.4,19.6 69.0,19.3 69.6,18.9 70.2,19.6 70.8,16.7 71.4,18.5 72.0,18.4 72.6,17.7 73.2,15.0 73.8,15.1 74.4,15.4 75.0,15.8 75.6,17.1 76.2,16.3 76.8,17.2 77.4,17.4 78.0,16.8 78.6,17.9 79.2,17.8 79.8,17.9 80.4,18.2 81.0,18.6 81.6,18.4 82.2,18.7 82.8,18.6 83.4,17.1 84.0,18.7 84.6,18.6 85.2,18.9 85.8,18.6 86.4,19.2 87.0,18.6 87.6,18.9 88.2,19.0 88.8,19.3 89.4,18.8 90.0,19.6 90.6,19.2 91.2,19.3 91.8,18.6 92.4,19.1 93.0,19.1 93.6,19.4 94.2,19.5 94.8,19.7 95.4,19.6 96.0,18.4 96.6,18.5 97.2,18.7 97.8,19.5 98.4,19.6 99.0,19.5 99.6,19.1 100.2,17.5 100.8,18.8 101.4,19.1 102.0,19.6 102.6,19.1 103.2,19.3 103.8,19.6 104.4,18.2 105.0,19.0 105.6,18.1 106.2,18.4 106.8,18.0 107.4,18.3 108.0,17.6 108.6,16.9 109.2,17.0 109.8,18.9 110.4,18.8 111.0,19.4 111.6,19.3 112.2,19.3 112.8,18.3 113.4,18.8 114.0,19.3 114.6,19.5 115.2,19.8 115.8,19.0 116.4,19.7 117.0,17.0 117.6,19.1 118.2,19.5 118.8,19.3 119.4,19.5 120.0,19.3 120.6,19.3 121.2,17.9 121.8,19.1 122.4,19.2 123.0,19.9 123.6,19.3 124.2,18.8 124.8,19.5 125.4,18.7 126.0,19.3 126.6,19.3 127.2,19.8 127.8,19.4 128.4,19.2 129.0,19.4 129.6,18.0 130.2,18.9 130.8,19.8 131.4,18.9 132.0,19.2 132.6,19.8 133.2,19.3 133.8,18.4 134.4,18.7 135.0,19.7 135.6,19.3 136.2,19.3 136.8,19.3 137.4,18.6 138.0,18.0 138.6,18.6 139.2,17.2 139.8,16.1 140.4,15.5 141.0,16.3 141.6,16.5 142.2,14.8 142.8,16.3 143.4,15.7 144.0,16.7 144.6,17.3 145.2,18.1 145.8,17.8 146.4,18.4 147.0,18.2 147.6,19.0 148.2,18.8 148.8,18.8 149.4,19.1 150.0,19.1 150.6,17.2 151.2,19.3 151.8,19.4 152.4,19.1 153.0,19.1 153.6,19.4 154.2,18.9 154.8,18.3 155.4,19.2 156.0,19.3 156.6,19.3 157.2,19.7 157.8,19.5 158.4,19.8 159.0,18.2 159.6,18.9 160.2,19.5 160.8,19.4 161.4,19.0 162.0,19.3 162.6,19.7 163.2,18.6 163.8,18.6 164.4,19.4 165.0,19.0 165.6,19.7 166.2,19.0 166.8,19.1 167.4,17.2 168.0,18.7 168.6,19.2 169.2,19.6 169.8,19.6 170.4,19.2 171.0,19.6 171.6,18.9 172.2,18.4 172.8,18.6 173.4,18.0 174.0,18.6 174.6,18.3 175.2,17.6 175.8,17.2 176.4,17.9 177.0,18.4 177.6,18.7 178.2,18.9 178.8,19.1 179.4,19.3 180.0,18.2 180.6,19.1 181.2,18.6 181.8,19.3 182.4,19.4 183.0,19.6 183.6,19.3 184.2,18.9 184.8,19.2 185.4,19.1 186.0,19.5 186.6,19.6 187.2,19.3 187.8,19.5 188.4,17.6 189.0,18.7 189.6,19.1 190.2,19.6 190.8,19.7 191.4,19.2 192.0,19.2 192.6,19.3 193.2,18.9 193.8,18.7 194.4,19.0 195.0,19.6 195.6,19.7 196.2,19.0 196.8,18.7 197.4,19.1 198.0,19.2 198.6,19.4 199.2,19.4 199.8,19.8 200.4,18.9 201.0,19.0 201.6,18.6 202.2,19.5 202.8,19.3 203.4,19.8 204.0,19.3 204.6,19.2 205.2,17.6 205.8,17.8 206.4,18.2 207.0,17.4 207.6,16.3 208.2,15.5 208.8,15.6 209.4,13.9 210.0,17.2 210.6,17.9 211.2,17.4 211.8,17.6 212.4,18.1 213.0,17.9 213.6,15.6 214.2,17.2 214.8,18.3 215.4,18.9 216.0,19.1 216.6,18.7 217.2,18.7 217.8,18.5 218.4,18.4 219.0,18.9 219.6,19.2 220.2,19.1 220.8,19.1 221.4,19.6 222.0,18.4 222.6,19.0 223.2,18.7 223.8,18.7 224.4,19.5 225.0,18.6 225.6,19.7 226.2,18.6 226.8,18.9 227.4,18.8 228.0,19.6 228.6,19.6 229.2,19.4 229.8,19.7 230.4,19.4 231.0,19.2 231.6,19.2 232.2,19.3 232.8,19.1 233.4,18.9 234.0,19.0 234.6,18.0 235.2,19.1 235.8,19.1 236.4,19.6 237.0,19.7 237.6,19.0 238.2,19.6 238.8,18.4 239.4,18.7 240.0,19.1 240.6,18.3 241.2,18.2 241.8,17.8 242.4,18.5 243.0,16.5 243.6,18.8 244.2,18.6 244.8,19.0 245.4,19.0 246.0,18.9 246.6,19.4 247.2,18.0 247.8,18.9 248.4,19.5 249.0,19.2 249.6,19.3 250.2,19.3 250.8,19.4 251.4,19.0 252.0,18.9 252.6,19.1 253.2,19.9 253.8,19.4 254.4,19.8 255.0,19.3 255.6,18.4 256.2,19.2 256.8,19.1 257.4,19.5 258.0,19.2 258.6,19.7 259.2,19.6 259.8,18.7 260.4,19.0 261.0,19.5 261.6,19.7 262.2,19.4 262.8,19.6 263.4,19.7 264.0,18.4 264.6,19.5 265.2,19.4 265.8,19.0 266.4,19.8 267.0,19.3 267.6,19.4 268.2,18.2 268.8,19.3 269.4,19.1 270.0,19.4 270.6,19.0 271.2,18.8 271.8,19.0 272.4,18.2 273.0,18.4 273.6,18.1 274.2,16.5 274.8,15.1 275.4,16.0 276.0,16.5 276.6,14.9 277.2,17.3 277.8,16.7 278.4,17.0 279.0,17.9 279.6,17.4 280.2,18.0 280.8,18.0 281.4,18.1 282.0,19.2 282.6,19.1 283.2,18.5 283.8,18.5 284.4,19.1 285.0,18.4 285.6,18.2 286.2,18.7 286.8,18.9 287.4,19.3 288.0,19.3 288.6,19.4 289.2,18.8 289.8,18.7 290.4,19.4 291.0,19.4 291.6,19.6 292.2,19.4 292.8,18.8 293.4,17.9 294.0,19.5 294.6,19.2 295.2,19.4 295.8,19.2 296.4,19.2 297.0,19.7 297.6,18.6 298.2,18.9 298.8,19.5 299.4,19.8 300.0,19.5 300.6,19.3 301.2,19.2 301.8,18.5 302.4,19.1 303.0,19.1 303.6,19.4 304.2,19.6 304.8,19.6 305.4,19.5 306.0,18.4 306.6,18.6 307.2,19.1 307.8,18.9 308.4,17.4 309.0,18.3 309.6,19.1 310.2,17.7 310.8,18.8 311.4,18.4 312.0,19.1 312.6,19.3 313.2,19.2 313.8,19.2 314.4,17.5 315.0,19.2 315.6,19.3 316.2,18.6 316.8,19.7 317.4,19.5 318.0,19.7 318.6,19.1 319.2,19.3 319.8,18.8 320.4,19.4 321.0,19.6 321.6,19.7 322.2,19.6 322.8,19.0 323.4,18.7 324.0,19.3 324.6,19.4 325.2,19.4 325.8,19.2 326.4,19.3 327.0,18.7 327.6,19.4 328.2,19.3 328.8,19.3 329.4,19.7 330.0,19.6 330.6,19.6 331.2,19.0 331.8,19.5 332.4,19.7 333.0,19.4 333.6,19.3 334.2,19.7 334.8,19.6 335.4,18.6 336.0,18.7 336.6,19.7 337.2,19.2 337.8,19.6 338.4,19.3 339.0,18.6 339.6,18.3 340.2,17.9 340.8,18.5 341.4,17.0 342.0,16.0 342.6,16.2 343.2,16.1 343.8,14.5 344.4,16.2 345.0,17.2 345.6,17.8 346.2,17.9 346.8,17.3 347.4,18.8 348.0,16.5 348.6,17.7 349.2,18.9 349.8,18.8 350.4,19.2 351.0,18.6 351.6,18.7 352.2,17.1 352.8,19.0 353.4,19.1 354.0,19.0 354.6,19.4 355.2,18.9 355.8,19.2 356.4,18.0 357.0,19.3 357.6,19.6 358.2,18.9 358.8,19.3 359.4,19.3 360.0,18.9 360.6,18.5 361.2,19.3 361.8,19.5 362.4,19.6 363.0,19.6 363.6,19.4 364.2,19.4 364.8,18.3 365.4,19.0 366.0,19.0 366.6,19.5 367.2,19.3 367.8,19.5 368.4,19.7 369.0,17.9 369.6,19.3 370.2,19.3 370.8,19.2 371.4,19.4 372.0,19.6 372.6,19.6 373.2,18.8 373.8,19.1 374.4,18.6 375.0,18.5 375.6,18.2 376.2,18.0 376.8,18.0 377.4,18.5 378.0,18.4 378.6,18.3 379.2,19.3 379.8,19.4 380.4,18.6 381.0,19.3 381.6,18.2 382.2,18.9 382.8,18.9 383.4,18.9 384.0,19.5 384.6,18.9 385.2,19.4 385.8,17.8 386.4,19.3 387.0,19.0 387.6,19.1 388.2,19.3 388.8,19.8 389.4,19.2 390.0,17.8 390.6,18.9 391.2,19.3 391.8,19.8 392.4,19.6 393.0,18.9 393.6,19.7 394.2,19.2 394.8,19.4 395.4,19.5 396.0,19.7 396.6,19.5 397.2,19.6 397.8,19.8 398.4,18.0 399.0,19.5 399.6,19.1 400.2,19.2 400.8,19.8 401.4,19.3 402.0,19.5 402.6,19.5 403.2,19.3 403.8,19.1 404.4,19.6 405.0,19.0 405.6,19.6 406.2,19.4 406.8,18.2 407.4,17.9 408.0,18.6 408.6,16.4 409.2,15.2 409.8,15.8 410.4,16.0 411.0,16.9 411.6,17.2 412.2,16.7 412.8,17.7 413.4,18.0 414.0,18.2 414.6,18.4 415.2,17.8 415.8,18.9 416.4,19.2 417.0,18.7 417.6,18.9 418.2,19.2 418.8,18.8 419.4,18.2 420.0,19.0 420.6,18.5 421.2,19.1 421.8,18.7 422.4,19.1 423.0,19.5 423.6,18.1 424.2,18.8 424.8,19.6 425.4,19.3 426.0,18.9 426.6,19.8 427.2,19.4 427.8,17.9 428.4,19.3 429.0,19.5 429.6,19.3 430.2,19.5 430.8,19.4 431.4,19.2 432.0,18.8 432.6,19.1 433.2,18.7 433.8,19.8 434.4,19.4 435.0,19.6 435.6,18.9 436.2,18.3 436.8,19.5 437.4,19.4 438.0,19.5 438.6,19.6 439.2,19.3 439.8,19.8 440.4,18.7 441.0,18.9 441.6,18.7 442.2,18.1 442.8,18.2 443.4,18.5 444.0,18.7 444.6,17.5 445.2,18.4 445.8,18.7 446.4,18.7 447.0,19.3 447.6,18.7 448.2,19.3 448.8,17.4 449.4,19.0 450.0,19.2 450.6,19.2 451.2,19.4 451.8,19.5 452.4,19.5 453.0,18.8 453.6,19.4 454.2,19.5 454.8,19.6 455.4,19.6 456.0,19.6 456.6,19.5 457.2,18.3 457.8,19.2 458.4,19.2 459.0,19.0 459.6,19.5 460.2,19.5 460.8,19.1 461.4,19.2 462.0,18.7 462.6,19.3 463.2,19.4 463.8,19.0 464.4,19.8 465.0,19.6 465.6,18.1 466.2,19.5 466.8,19.0 467.4,19.7 468.0,19.2 468.6,19.3 469.2,19.7 469.8,18.7 470.4,18.9 471.0,19.5 471.6,19.3 472.2,19.8 472.8,19.6 473.4,19.4 474.0,18.4 474.6,18.6 475.2,16.9 475.8,17.0 476.4,15.5 477.0,15.3 477.6,16.1 478.2,15.6 478.8,17.5 479.4,16.5 480.0,17.8 480.6,18.5 481.2,17.8 481.8,18.2 482.4,16.9 483.0,18.1 483.6,17.7 484.2,18.8 484.8,18.6 485.4,18.6 486.0,19.0 486.6,18.8 487.2,18.2 487.8,19.1 488.4,19.3 489.0,19.1 489.6,19.4 490.2,19.3 490.8,19.1 491.4,19.0 492.0,19.7 492.6,19.5 493.2,18.9 493.8,19.4 494.4,19.1 495.0,17.9 495.6,19.4 496.2,19.4 496.8,19.4 497.4,19.7 498.0,19.0 498.6,19.7 499.2,19.5 499.8,18.9 500.4,19.6 501.0,19.7 501.6,19.3 502.2,19.2 502.8,19.4 503.4,18.4 504.0,19.5 504.6,19.6 505.2,19.2 505.8,19.7 506.4,19.6 507.0,19.2 507.6,18.8 508.2,19.0 508.8,18.5 509.4,19.0 510.0,17.9 510.6,18.4 511.2,18.8 511.8,17.6 512.4,18.1 513.0,19.1 513.6,18.6 514.2,18.6 514.8,19.1 515.4,19.6 516.0,18.4 516.6,18.7 517.2,19.1 517.8,19.5 518.4,19.3 519.0,19.8 519.6,19.7 520.2,19.2 520.8,19.5 521.4,19.7 522.0,19.4 522.6,19.7 523.2,19.9 523.8,19.4 524.4,18.8 525.0,19.5 525.6,19.2 526.2,19.7 526.8,19.7 527.4,19.3 528.0,19.2 528.6,18.7 529.2,19.3 529.8,19.7 530.4,19.7 531.0,19.7 531.6,19.8 532.2,19.7 532.8,19.3 533.4,19.3 534.0,19.4 534.6,19.1 535.2,19.5 535.8,19.6 536.4,19.9 537.0,18.2 537.6,18.7 538.2,19.4 538.8,19.5 539.4,19.7 540.0,19.3 540.6,19.1 541.2,17.5 541.8,17.6 542.4,16.7 543.0,16.1 543.6,14.3 544.2,13.7 544.8,17.1 545.4,15.6 546.0,16.8 546.6,16.1 547.2,17.5 547.8,17.2 548.4,18.2 549.0,18.2 549.6,17.3 550.2,17.3 550.8,18.3 551.4,18.3 552.0,18.6 552.6,19.2 553.2,19.2 553.8,18.8 554.4,18.5 555.0,19.0 555.6,18.9 556.2,19.1 556.8,18.7 557.4,18.9 558.0,18.7 558.6,19.0 559.2,19.0 559.8,19.1 560.4,19.5 561.0,19.6 561.6,18.7 562.2,18.4 562.8,19.2 563.4,19.3 564.0,19.4 564.6,19.3 565.2,18.7 565.8,19.0 566.4,19.4 567.0,19.6 567.6,19.4 568.2,18.9 568.8,19.1 569.4,19.3 570.0,19.4 570.6,18.9 571.2,19.2 571.8,19.9 572.4,19.2 573.0,19.6 573.6,19.3 574.2,19.2 574.8,18.2 575.4,19.4 576.0,19.0 576.6,18.4 577.2,18.9 577.8,18.3 578.4,18.7 579.0,17.5 579.6,19.2 580.2,18.8 580.8,19.1 581.4,18.7 582.0,19.6 582.6,19.2 583.2,18.0 583.8,19.1 584.4,19.5 585.0,19.3 585.6,19.5 586.2,19.1 586.8,19.5 587.4,18.1 588.0,19.5 588.6,19.0 589.2,18.8 589.8,19.6 590.4,19.0 591.0,19.5 591.6,18.8 592.2,19.2 592.8,19.7 593.4,19.6 594.0,19.2 594.6,19.7 595.2,19.2 595.8,18.5 596.4,18.9 597.0,18.9 597.6,19.2 598.2,19.8 598.8,18.8 599.4,19.6 600.0,18.2 600.6,19.3 601.2,19.5 601.8,19.2 602.4,19.5 603.0,19.5 603.6,19.6 604.2,19.2 604.8,19.5 605.4,19.0 606.0,19.1 606.6,19.4 607.2,19.4 607.8,19.5 608.4,18.6 609.0,18.4 609.6,18.0 610.2,16.9 610.8,15.2 611.4,15.0 612.0,15.4 612.6,17.1 613.2,17.6 613.8,16.4 614.4,17.1 615.0,17.8 615.6,18.0 616.2,17.9 616.8,17.6 617.4,18.1 618.0,18.7 618.6,18.1 619.2,18.9 619.8,19.4 620.4,19.2 621.0,17.4 621.6,19.3 622.2,19.3 622.8,19.0 623.4,19.5 624.0,19.4 624.6,19.6 625.2,19.1 625.8,18.9 626.4,19.4 627.0,19.4 627.6,19.7 628.2,19.3 628.8,18.8 629.4,19.0 630.0,19.6 630.6,19.2 631.2,19.3 631.8,19.7 632.4,18.9 633.0,19.6 633.6,18.6 634.2,19.4 634.8,19.0 635.4,18.9 636.0,19.3 636.6,19.5 637.2,18.8 637.8,19.2 638.4,18.9 639.0,19.6 639.6,19.1 640.2,19.8 640.8,19.4 641.4,19.4 642.0,18.0 642.6,18.9 643.2,18.5 643.8,18.8 644.4,18.2 645.0,18.2 645.6,18.0 646.2,18.4 646.8,18.1 647.4,18.6 648.0,18.2 648.6,19.3 649.2,18.9 649.8,19.1 650.4,19.3 651.0,19.0 651.6,19.8 652.2,19.2 652.8,19.5 653.4,19.6 654.0,19.7 654.6,18.5 655.2,19.1 655.8,19.1 656.4,19.7 657.0,19.4 657.6,19.8 658.2,19.5 658.8,18.9 659.4,19.7 660.0,18.9 660.6,19.4 661.2,19.7 661.8,19.2 662.4,19.7 663.0,18.5 663.6,19.6 664.2,19.7 664.8,19.3 665.4,19.6 666.0,19.6 666.6,19.5 667.2,19.3 667.8,19.2 668.4,19.0 669.0,19.3 669.6,19.7 670.2,19.1 670.8,19.2 671.4,19.3 672.0,18.7 672.6,19.7 673.2,19.2 673.8,19.5 674.4,18.8 675.0,18.4 675.6,17.1 676.2,18.3 676.8,17.4 677.4,15.5 678.0,14.6 678.6,15.2 679.2,16.6 679.8,17.3 680.4,18.0 681.0,19.4 681.6,19.7 682.2,20.0 682.8,20.0 683.4,20.0 684.0,20.0 684.6,20.0 685.2,20.0 685.8,20.0 686.4,20.0 687.0,20.0 687.6,20.0 688.2,20.0 688.8,20.0 689.4,20.0 690.0,20.0 690.6,20.0 691.2,20.0 691.8,20.0 692.4,20.0 693.0,20.0 693.6,20.0 694.2,20.0 694.8,20.0 695.4,20.0 696.0,20.0 696.6,20.0 697.2,20.0 697.8,20.0 698.4,20.0 699.0,20.0 699.6,20.0 700.2,20.0 700.8,20.0 701.4,20.0 702.0,20.0 702.6,20.0 703.2,20.0 703.8,20.0 704.4,20.0 705.0,20.0 705.6,20.0 706.2,20.0 706.8,20.0 707.4,20.0 708.0,20.0 708.6,20.0 709.2,20.0 709.8,20.0 710.4,20.0 711.0,20.0 711.6,20.0 712.2,20.0 712.8,20.0 713.4,20.0 714.0,20.0 714.6,20.0 715.2,20.0 715.8,20.0 716.4,20.0 717.0,20.0 717.6,20.0 718.2,20.0 718.8,20.0 719.4,20.0 720.0,20.0 720.6,20.0 721.2,20.0 721.8,20.0 722.4,20.0 723.0,20.0 723.6,20.0 724.2,20.0 724.2,20.8 723.6,20.8 723.0,20.8 722.4,20.8 721.8,20.7 721.2,20.7 720.6,20.8 720.0,20.8 719.4,20.8 718.8,20.8 718.2,20.8 717.6,20.7 717.0,20.8 716.4,20.7 715.8,20.8 715.2,20.8 714.6,20.8 714.0,20.7 713.4,20.8 712.8,20.7 712.2,20.8 711.6,20.7 711.0,20.8 710.4,20.8 709.8,20.7 709.2,20.7 708.6,20.8 708.0,20.8 707.4,20.8 706.8,20.7 706.2,20.7 705.6,20.7 705.0,20.8 704.4,20.8 703.8,20.8 703.2,20.8 702.6,20.8 702.0,20.8 701.4,20.8 700.8,20.8 700.2,20.8 699.6,20.8 699.0,20.8 698.4,20.8 697.8,20.7 697.2,20.8 696.6,20.8 696.0,20.8 695.4,20.8 694.8,20.8 694.2,20.8 693.6,20.8 693.0,20.8 692.4,20.8 691.8,20.8 691.2,20.7 690.6,20.8 690.0,20.8 689.4,20.7 688.8,20.8 688.2,20.7 687.6,20.8 687.0,20.7 686.4,20.8 685.8,20.8 685.2,20.8 684.6,20.8 684.0,20.8 683.4,20.8 682.8,20.8 682.2,20.8 681.6,21.1 681.0,21.4 680.4,22.8 679.8,23.7 679.2,24.5 678.6,26.4 678.0,25.8 677.4,26.1 676.8,23.8 676.2,22.4 675.6,24.3 675.0,22.3 674.4,22.2 673.8,21.4 673.2,21.7 672.6,21.1 672.0,22.2 671.4,21.6 670.8,21.8 670.2,21.9 669.6,21.2 669.0,21.5 668.4,22.1 667.8,21.6 667.2,21.4 666.6,21.3 666.0,21.2 665.4,21.3 664.8,21.7 664.2,21.1 663.6,21.2 663.0,22.2 662.4,21.1 661.8,21.5 661.2,21.2 660.6,21.3 660.0,22.1 659.4,21.2 658.8,21.9 658.2,21.3 657.6,21.0 657.0,21.4 656.4,21.2 655.8,21.6 655.2,21.9 654.6,22.2 654.0,21.0 653.4,21.3 652.8,21.2 652.2,21.6 651.6,21.1 651.0,21.7 650.4,21.4 649.8,21.8 649.2,21.8 648.6,21.7 648.0,22.6 647.4,22.0 646.8,22.5 646.2,22.2 645.6,22.8 645.0,22.6 644.4,22.7 643.8,22.4 643.2,22.5 642.6,21.8 642.0,22.8 641.4,21.4 640.8,21.5 640.2,21.0 639.6,21.6 639.0,21.3 638.4,21.9 637.8,21.7 637.2,22.0 636.6,21.4 636.0,21.5 635.4,22.1 634.8,21.7 634.2,21.5 633.6,22.2 633.0,21.2 632.4,21.9 631.8,21.2 631.2,21.4 630.6,21.7 630.0,21.3 629.4,21.7 628.8,22.0 628.2,21.5 627.6,21.2 627.0,21.3 626.4,21.6 625.8,21.9 625.2,21.7 624.6,21.1 624.0,21.5 623.4,21.3 622.8,21.7 622.2,21.7 621.6,21.8 621.0,23.4 620.4,21.7 619.8,21.5 619.2,21.9 618.6,22.6 618.0,22.1 617.4,22.7 616.8,23.5 616.2,22.9 615.6,23.3 615.0,23.0 614.4,23.6 613.8,24.2 613.2,23.3 612.6,23.4 612.0,25.3 611.4,26.3 610.8,25.9 610.2,23.6 609.6,22.8 609.0,22.2 608.4,22.5 607.8,21.4 607.2,21.5 606.6,21.4 606.0,21.7 605.4,22.0 604.8,21.3 604.2,21.5 603.6,21.3 603.0,21.4 602.4,21.4 601.8,21.7 601.2,21.2 600.6,21.5 600.0,22.6 599.4,21.2 598.8,21.9 598.2,21.0 597.6,21.5 597.0,21.9 596.4,21.8 595.8,22.2 595.2,21.6 594.6,21.2 594.0,21.7 593.4,21.1 592.8,21.1 592.2,21.8 591.6,22.2 591.0,21.4 590.4,21.9 589.8,21.2 589.2,22.0 588.6,22.1 588.0,21.4 587.4,23.1 586.8,21.4 586.2,21.9 585.6,21.4 585.0,21.6 584.4,21.2 583.8,21.6 583.2,22.6 582.6,21.8 582.0,21.1 581.4,22.0 580.8,21.9 580.2,22.1 579.6,21.7 579.0,23.5 578.4,22.0 577.8,22.7 577.2,21.9 576.6,22.8 576.0,22.0 575.4,21.3 574.8,23.0 574.2,21.7 573.6,21.7 573.0,21.2 572.4,21.8 571.8,20.9 571.2,21.6 570.6,22.1 570.0,21.6 569.4,21.5 568.8,21.7 568.2,22.0 567.6,21.4 567.0,21.2 566.4,21.5 565.8,22.1 565.2,22.2 564.6,21.4 564.0,21.5 563.4,21.5 562.8,21.8 562.2,22.4 561.6,22.2 561.0,21.1 560.4,21.2 559.8,21.9 559.2,22.0 558.6,22.1 558.0,22.2 557.4,22.2 556.8,22.3 556.2,21.8 555.6,22.1 555.0,21.8 554.4,22.5 553.8,22.0 553.2,21.6 552.6,21.9 552.0,22.3 551.4,22.8 550.8,22.8 550.2,23.7 549.6,24.0 549.0,22.6 548.4,22.8 547.8,24.2 547.2,23.4 546.6,25.4 546.0,23.7 545.4,25.2 544.8,24.3 544.2,28.2 543.6,26.8 543.0,24.7 542.4,24.5 541.8,23.5 541.2,23.3 540.6,21.9 540.0,21.5 539.4,21.3 538.8,21.4 538.2,21.5 537.6,22.0 537.0,22.4 536.4,20.9 535.8,21.3 535.2,21.3 534.6,22.0 534.0,21.5 533.4,21.6 532.8,21.8 532.2,21.1 531.6,21.0 531.0,21.1 530.4,21.2 529.8,21.2 529.2,21.5 528.6,22.3 528.0,21.6 527.4,21.6 526.8,21.1 526.2,21.2 525.6,21.7 525.0,21.4 524.4,22.0 523.8,21.4 523.2,21.0 522.6,21.1 522.0,21.6 521.4,21.1 520.8,21.3 520.2,21.8 519.6,21.1 519.0,21.1 518.4,21.6 517.8,21.3 517.2,21.7 516.6,22.1 516.0,22.8 515.4,21.1 514.8,21.7 514.2,22.2 513.6,22.1 513.0,21.7 512.4,22.8 511.8,23.6 511.2,22.3 510.6,22.5 510.0,23.1 509.4,22.0 508.8,22.4 508.2,22.1 507.6,21.9 507.0,21.7 506.4,21.2 505.8,21.0 505.2,21.5 504.6,21.4 504.0,21.3 503.4,22.7 502.8,21.4 502.2,21.8 501.6,21.7 501.0,21.0 500.4,21.2 499.8,21.8 499.2,21.2 498.6,21.2 498.0,21.9 497.4,21.2 496.8,21.3 496.2,21.5 495.6,21.5 495.0,22.8 494.4,21.7 493.8,21.5 493.2,21.8 492.6,21.2 492.0,21.3 491.4,21.8 490.8,21.5 490.2,21.6 489.6,21.4 489.0,21.9 488.4,21.5 487.8,21.6 487.2,22.5 486.6,22.0 486.0,21.8 485.4,22.1 484.8,22.2 484.2,22.0 483.6,23.6 483.0,23.0 482.4,24.5 481.8,22.4 481.2,23.0 480.6,22.4 480.0,23.1 479.4,24.6 478.8,23.2 478.2,25.6 477.6,25.1 477.0,26.4 476.4,25.3 475.8,23.8 475.2,24.5 474.6,22.2 474.0,22.3 473.4,21.4 472.8,21.1 472.2,21.0 471.6,21.4 471.0,21.3 470.4,22.0 469.8,22.0 469.2,21.3 468.6,21.6 468.0,21.6 467.4,21.2 466.8,22.1 466.2,21.2 465.6,22.9 465.0,21.1 464.4,21.0 463.8,21.7 463.2,21.3 462.6,21.5 462.0,22.0 461.4,21.7 460.8,21.6 460.2,21.4 459.6,21.5 459.0,21.8 458.4,21.6 457.8,21.6 457.2,22.4 456.6,21.3 456.0,21.2 455.4,21.3 454.8,21.1 454.2,21.2 453.6,21.5 453.0,22.1 452.4,21.3 451.8,21.4 451.2,21.5 450.6,21.5 450.0,21.5 449.4,22.0 448.8,23.3 448.2,21.6 447.6,22.0 447.0,21.5 446.4,22.4 445.8,22.4 445.2,22.6 444.6,23.2 444.0,22.0 443.4,22.6 442.8,22.4 442.2,22.7 441.6,22.0 441.0,21.9 440.4,22.0 439.8,21.1 439.2,21.7 438.6,21.4 438.0,21.4 437.4,21.4 436.8,21.4 436.2,22.4 435.6,22.1 435.0,21.2 434.4,21.4 433.8,21.0 433.2,22.4 432.6,21.8 432.0,21.9 431.4,21.6 430.8,21.4 430.2,21.4 429.6,21.7 429.0,21.2 428.4,21.6 427.8,23.4 427.2,21.6 426.6,21.0 426.0,21.9 425.4,21.5 424.8,21.2 424.2,21.9 423.6,23.0 423.0,21.5 422.4,21.9 421.8,22.5 421.2,21.5 420.6,22.5 420.0,21.7 419.4,22.4 418.8,22.1 418.2,21.7 417.6,21.8 417.0,22.2 416.4,21.6 415.8,21.8 415.2,23.2 414.6,22.3 414.0,23.0 413.4,23.2 412.8,23.6 412.2,24.1 411.6,23.4 411.0,24.6 410.4,25.3 409.8,24.9 409.2,26.1 408.6,24.6 408.0,22.5 407.4,22.7 406.8,22.6 406.2,21.4 405.6,21.3 405.0,21.8 404.4,21.3 403.8,21.7 403.2,21.6 402.6,21.3 402.0,21.2 401.4,21.4 400.8,21.1 400.2,21.6 399.6,21.9 399.0,21.4 398.4,22.8 397.8,21.1 397.2,21.1 396.6,21.3 396.0,21.2 395.4,21.5 394.8,21.4 394.2,21.7 393.6,21.1 393.0,22.1 392.4,21.3 391.8,21.1 391.2,21.5 390.6,21.9 390.0,22.9 389.4,21.5 388.8,21.0 388.2,21.4 387.6,21.9 387.0,21.9 386.4,21.4 385.8,23.2 385.2,21.5 384.6,21.9 384.0,21.4 383.4,21.7 382.8,22.0 382.2,21.9 381.6,23.0 381.0,21.4 380.4,22.2 379.8,21.4 379.2,21.6 378.6,22.5 378.0,22.7 377.4,22.5 376.8,22.8 376.2,22.9 375.6,22.5 375.0,22.3 374.4,22.2 373.8,22.0 373.2,22.0 372.6,21.3 372.0,21.2 371.4,21.4 370.8,21.6 370.2,21.5 369.6,21.5 369.0,22.9 368.4,21.1 367.8,21.5 367.2,21.6 366.6,21.3 366.0,22.0 365.4,21.6 364.8,22.5 364.2,21.4 363.6,21.4 363.0,21.3 362.4,21.2 361.8,21.3 361.2,21.5 360.6,22.7 360.0,21.8 359.4,21.6 358.8,21.7 358.2,21.7 357.6,21.3 357.0,21.6 356.4,22.6 355.8,21.7 355.2,21.9 354.6,21.3 354.0,21.8 353.4,21.7 352.8,21.9 352.2,23.4 351.6,22.4 351.0,22.5 350.4,21.7 349.8,22.2 349.2,21.7 348.6,23.5 348.0,24.0 347.4,22.3 346.8,23.8 346.2,22.6 345.6,23.0 345.0,24.2 344.4,25.3 343.8,27.2 343.2,24.6 342.6,24.4 342.0,24.4 341.4,23.5 340.8,22.7 340.2,22.6 339.6,22.9 339.0,22.3 338.4,21.5 337.8,21.2 337.2,21.7 336.6,21.0 336.0,22.3 335.4,22.4 334.8,21.2 334.2,21.0 333.6,21.6 333.0,21.5 332.4,21.1 331.8,21.3 331.2,22.0 330.6,21.3 330.0,21.3 329.4,21.0 328.8,21.7 328.2,21.5 327.6,21.5 327.0,22.1 326.4,21.6 325.8,21.5 325.2,21.3 324.6,21.4 324.0,21.5 323.4,22.1 322.8,22.1 322.2,21.2 321.6,21.1 321.0,21.3 320.4,21.4 319.8,22.2 319.2,21.4 318.6,21.7 318.0,21.0 317.4,21.2 316.8,21.1 316.2,22.1 315.6,21.5 315.0,21.5 314.4,23.2 313.8,21.5 313.2,21.5 312.6,21.6 312.0,21.7 311.4,22.7 310.8,22.2 310.2,23.4 309.6,21.9 309.0,22.8 308.4,23.4 307.8,22.0 307.2,21.6 306.6,22.2 306.0,22.6 305.4,21.3 304.8,21.2 304.2,21.2 303.6,21.4 303.0,21.9 302.4,21.6 301.8,22.5 301.2,21.6 300.6,21.4 300.0,21.5 299.4,21.0 298.8,21.3 298.2,21.9 297.6,22.4 297.0,21.1 296.4,21.8 295.8,21.5 295.2,21.4 294.6,21.5 294.0,21.3 293.4,22.9 292.8,22.1 292.2,21.6 291.6,21.2 291.0,21.5 290.4,21.5 289.8,22.3 289.2,22.1 288.6,21.5 288.0,21.5 287.4,21.5 286.8,21.8 286.2,22.4 285.6,22.7 285.0,22.2 284.4,21.9 283.8,22.4 283.2,22.4 282.6,21.8 282.0,21.5 281.4,23.2 280.8,22.8 280.2,23.0 279.6,23.4 279.0,22.7 278.4,24.3 277.8,23.9 277.2,23.5 276.6,26.2 276.0,24.5 275.4,25.3 274.8,25.3 274.2,24.0 273.6,23.0 273.0,22.2 272.4,22.6 271.8,21.8 271.2,22.1 270.6,21.8 270.0,21.6 269.4,21.9 268.8,21.4 268.2,22.9 267.6,21.4 267.0,21.5 266.4,21.0 265.8,21.7 265.2,21.5 264.6,21.3 264.0,22.7 263.4,21.1 262.8,21.2 262.2,21.4 261.6,21.2 261.0,21.3 260.4,21.7 259.8,22.1 259.2,21.1 258.6,21.2 258.0,21.5 257.4,21.4 256.8,21.6 256.2,21.6 255.6,22.7 255.0,21.6 254.4,21.0 253.8,21.4 253.2,20.9 252.6,22.0 252.0,22.0 251.4,22.1 250.8,21.6 250.2,21.5 249.6,21.4 249.0,21.7 248.4,21.3 247.8,22.1 247.2,22.9 246.6,21.4 246.0,22.0 245.4,21.7 244.8,21.8 244.2,22.1 243.6,22.3 243.0,24.4 242.4,22.5 241.8,22.9 241.2,22.4 240.6,22.8 240.0,21.6 239.4,22.0 238.8,22.3 238.2,21.3 237.6,21.8 237.0,21.1 236.4,21.2 235.8,21.8 235.2,22.0 234.6,22.9 234.0,21.7 233.4,21.9 232.8,21.8 232.2,21.7 231.6,21.5 231.0,21.7 230.4,21.5 229.8,21.0 229.2,21.4 228.6,21.2 228.0,21.1 227.4,22.1 226.8,22.1 226.2,22.2 225.6,21.3 225.0,22.4 224.4,21.4 223.8,22.3 223.2,22.2 222.6,21.8 222.0,22.6 221.4,21.2 220.8,21.7 220.2,21.7 219.6,21.8 219.0,21.8 218.4,22.4 217.8,22.5 217.2,22.1 216.6,22.3 216.0,21.6 215.4,21.8 214.8,22.7 214.2,23.8 213.6,25.7 213.0,22.9 212.4,22.7 211.8,23.7 211.2,23.4 210.6,23.1 210.0,23.8 209.4,26.7 208.8,25.9 208.2,25.2 207.6,24.6 207.0,23.2 206.4,22.7 205.8,22.9 205.2,23.5 204.6,21.7 204.0,21.5 203.4,21.1 202.8,21.7 202.2,21.4 201.6,22.2 201.0,21.8 200.4,21.9 199.8,21.0 199.2,21.4 198.6,21.4 198.0,21.6 197.4,21.9 196.8,22.2 196.2,21.8 195.6,21.0 195.0,21.3 194.4,22.0 193.8,22.2 193.2,22.0 192.6,21.5 192.0,21.7 191.4,21.6 190.8,21.2 190.2,21.3 189.6,21.6 189.0,22.1 188.4,23.1 187.8,21.4 187.2,21.6 186.6,21.3 186.0,21.3 185.4,22.0 184.8,21.7 184.2,21.8 183.6,21.7 183.0,21.2 182.4,21.3 181.8,21.5 181.2,22.2 180.6,21.6 180.0,23.0 179.4,21.6 178.8,21.7 178.2,21.9 177.6,22.1 177.0,22.5 176.4,23.3 175.8,24.0 175.2,23.5 174.6,22.3 174.0,22.1 173.4,23.2 172.8,22.0 172.2,22.2 171.6,22.0 171.0,21.3 170.4,21.5 169.8,21.4 169.2,21.3 168.6,21.6 168.0,22.0 167.4,23.6 166.8,21.7 166.2,21.9 165.6,21.1 165.0,21.8 164.4,21.4 163.8,22.2 163.2,22.3 162.6,21.0 162.0,21.6 161.4,21.7 160.8,21.6 160.2,21.4 159.6,21.9 159.0,22.8 158.4,21.0 157.8,21.2 157.2,21.0 156.6,21.7 156.0,21.6 155.4,21.5 154.8,22.3 154.2,22.2 153.6,21.4 153.0,21.8 152.4,21.9 151.8,21.5 151.2,21.5 150.6,23.8 150.0,21.8 149.4,21.9 148.8,22.1 148.2,22.0 147.6,21.8 147.0,22.9 146.4,22.3 145.8,22.9 145.2,22.5 144.6,23.9 144.0,23.8 143.4,25.0 142.8,24.5 142.2,26.0 141.6,24.6 141.0,24.4 140.4,25.9 139.8,25.1 139.2,23.4 138.6,22.5 138.0,22.7 137.4,22.3 136.8,21.4 136.2,21.5 135.6,21.4 135.0,21.2 134.4,21.9 133.8,22.6 133.2,21.6 132.6,21.0 132.0,21.6 131.4,21.9 130.8,21.1 130.2,21.9 129.6,23.0 129.0,21.3 128.4,21.5 127.8,21.4 127.2,21.0 126.6,21.4 126.0,21.5 125.4,22.3 124.8,21.4 124.2,22.2 123.6,21.4 123.0,20.9 122.4,21.5 121.8,21.8 121.2,22.7 120.6,21.7 120.0,21.6 119.4,21.2 118.8,21.4 118.2,21.5 117.6,21.8 117.0,23.9 116.4,21.1 115.8,21.9 115.2,21.0 114.6,21.3 114.0,21.6 113.4,22.2 112.8,22.5 112.2,21.6 111.6,21.6 111.0,21.4 110.4,22.1 109.8,22.1 109.2,24.3 108.6,23.9 108.0,23.1 107.4,22.5 106.8,23.1 106.2,22.4 105.6,22.8 105.0,21.9 104.4,22.6 103.8,21.2 103.2,21.5 102.6,21.9 102.0,21.2 101.4,21.9 100.8,21.9 100.2,23.2 99.6,21.7 99.0,21.3 98.4,21.2 97.8,21.3 97.2,21.9 96.6,22.4 96.0,22.7 95.4,21.1 94.8,21.2 94.2,21.2 93.6,21.4 93.0,21.7 92.4,21.7 91.8,22.1 91.2,21.5 90.6,21.7 90.0,21.3 89.4,22.3 88.8,21.5 88.2,22.0 87.6,21.9 87.0,22.3 86.4,21.5 85.8,22.0 85.2,22.0 84.6,22.4 84.0,22.1 83.4,23.4 82.8,22.1 82.2,22.4 81.6,22.6 81.0,22.5 80.4,22.8 79.8,23.1 79.2,22.9 78.6,23.3 78.0,23.9 77.4,23.7 76.8,24.2 76.2,24.5 75.6,24.2 75.0,25.9 74.4,26.3 73.8,26.3 73.2,26.1 72.6,23.1 72.0,22.4 71.4,22.4 70.8,24.0 70.2,21.2 69.6,22.1 69.0,21.6 68.4,21.2 67.8,21.7 67.2,21.7 66.6,23.3 66.0,21.8 65.4,21.6 64.8,21.3 64.2,21.9 63.6,21.6 63.0,21.8 62.4,22.1 61.8,21.3 61.2,21.5 60.6,21.5 60.0,21.4 59.4,21.1 58.8,21.3 58.2,22.3 57.6,21.1 57.0,21.4 56.4,21.4 55.8,21.5 55.2,21.6 54.6,23.1 54.0,22.7 53.4,21.1 52.8,21.5 52.2,21.4 51.6,21.7 51.0,21.8 50.4,22.1 49.8,22.1 49.2,21.7 48.6,22.2 48.0,21.4 47.4,21.2 46.8,21.8 46.2,23.3 45.6,23.5 45.0,22.5 44.4,21.3 43.8,22.4 43.2,22.4 42.6,21.9 42.0,23.5 41.4,23.8 40.8,23.7 40.2,23.0 39.6,23.2 39.0,22.3 38.4,21.6 37.8,21.7 37.2,23.5 36.6,21.9 36.0,21.5 35.4,21.3 34.8,22.2 34.2,21.4 33.6,22.9 33.0,22.9 32.4,21.2 31.8,21.3 31.2,21.0 30.6,21.4 30.0,21.5 29.4,22.1 28.8,22.3 28.2,21.4 27.6,21.0 27.0,21.5 26.4,21.9 25.8,22.0 25.2,22.4 24.6,23.2 24.0,21.5 23.4,21.3 22.8,21.7 22.2,21.2 21.6,21.9 21.0,21.9 20.4,23.6 19.8,21.3 19.2,21.4 18.6,21.3 18.0,22.1 17.4,21.9 16.8,23.3 16.2,22.0 15.6,22.0 15.0,22.2 14.4,22.3 13.8,21.8 13.2,22.9 12.6,23.5 12.0,22.3 11.4,24.0 10.8,23.9 10.2,23.5 9.6,24.6 9.0,24.4 8.4,26.3 7.8,26.4 7.2,26.6 6.6,25.7 6.0,27.1 5.4,23.8 4.8,23.6 4.2,24.1 3.6,21.4 3.0,22.2 2.4,21.6 1.8,21.3 1.2,21.6 0.6,21.7 0.0,22.0Z" fill="#0c7d97"/></svg>
<div class="abs" style="left:246.0px;top:229.2px;width:724.4px;height:40.8px;border-radius:3.5px;background:#11b7ef"></div>
<svg style="left:246.0px;top:229.2px" width="724.4" height="40.8" viewBox="0 0 724.4 40.8"><path d="M0 20.4H724.4" stroke="#0c7d97" stroke-width="0.7" fill="none"/><path d="M0.0,20.1 0.6,20.1 1.1,20.1 1.7,20.1 2.2,20.1 2.8,20.1 3.3,20.1 3.9,20.1 4.4,20.1 5.0,20.1 5.5,20.1 6.1,20.1 6.6,20.1 7.2,20.1 7.7,20.1 8.2,14.9 8.8,16.7 9.4,15.5 9.9,20.1 10.5,16.7 11.0,15.8 11.6,14.3 12.1,20.1 12.7,20.1 13.2,20.1 13.8,20.1 14.3,20.1 14.9,20.1 15.4,20.1 16.0,20.1 16.5,20.1 17.1,15.3 17.6,15.5 18.2,17.2 18.7,13.1 19.2,15.6 19.8,15.9 20.4,20.1 20.9,20.1 21.5,20.1 22.0,20.1 22.6,20.1 23.1,15.8 23.7,16.6 24.2,13.3 24.8,16.3 25.3,16.6 25.9,16.5 26.4,15.5 27.0,14.6 27.5,16.0 28.1,17.9 28.6,16.3 29.2,15.7 29.7,16.5 30.3,15.7 30.8,17.0 31.4,20.1 31.9,20.1 32.5,20.1 33.0,20.1 33.6,16.1 34.1,16.0 34.7,14.8 35.2,16.7 35.8,15.6 36.3,14.9 36.9,13.3 37.4,20.1 38.0,20.1 38.5,20.1 39.1,20.1 39.6,14.4 40.2,14.3 40.7,16.3 41.2,16.9 41.8,13.4 42.4,13.6 42.9,13.0 43.5,15.2 44.0,15.5 44.6,16.8 45.1,14.2 45.7,16.8 46.2,20.1 46.8,20.1 47.3,20.1 47.9,20.1 48.4,20.1 49.0,20.1 49.5,20.1 50.1,20.1 50.6,14.8 51.2,14.6 51.7,15.5 52.3,20.1 52.8,15.3 53.4,14.5 53.9,15.8 54.5,20.1 55.0,20.1 55.6,20.1 56.1,20.1 56.7,14.8 57.2,14.7 57.8,14.1 58.3,15.7 58.9,15.4 59.4,13.4 60.0,16.9 60.5,14.3 61.1,16.9 61.6,15.8 62.2,18.4 62.7,20.1 63.3,20.1 63.8,20.1 64.4,20.1 64.9,20.1 65.5,20.1 66.0,20.1 66.6,20.1 67.1,14.5 67.7,13.6 68.2,16.5 68.8,16.2 69.3,15.4 69.9,16.5 70.4,14.5 71.0,16.4 71.5,20.1 72.1,20.1 72.6,20.1 73.2,14.3 73.7,16.7 74.2,15.2 74.8,16.4 75.4,15.0 75.9,15.2 76.5,15.4 77.0,17.0 77.6,15.7 78.1,15.6 78.7,14.4 79.2,16.8 79.8,20.1 80.3,20.1 80.9,20.1 81.4,20.1 82.0,20.1 82.5,20.1 83.1,20.1 83.6,20.1 84.2,14.0 84.7,15.3 85.2,15.4 85.8,12.8 86.4,15.7 86.9,13.1 87.5,15.7 88.0,20.1 88.6,20.1 89.1,20.1 89.7,11.8 90.2,15.5 90.8,13.0 91.3,12.6 91.9,14.4 92.4,20.1 93.0,14.1 93.5,14.0 94.1,15.6 94.6,15.2 95.2,18.5 95.7,16.4 96.3,14.4 96.8,15.0 97.4,13.0 97.9,17.9 98.5,20.1 99.0,20.1 99.6,20.1 100.1,20.1 100.7,12.9 101.2,13.1 101.8,12.9 102.3,12.9 102.9,15.9 103.4,15.9 104.0,17.6 104.5,20.1 105.1,20.1 105.6,20.1 106.2,20.1 106.7,20.1 107.3,12.2 107.8,18.0 108.4,12.9 108.9,19.1 109.5,12.8 110.0,18.4 110.6,12.7 111.1,17.5 111.7,16.8 112.2,19.4 112.8,12.3 113.3,17.4 113.9,11.7 114.4,18.4 115.0,12.1 115.5,19.4 116.1,17.0 116.6,17.9 117.2,14.4 117.7,17.6 118.3,16.1 118.8,18.2 119.4,10.7 119.9,18.7 120.5,15.1 121.0,18.1 121.6,11.3 122.1,19.0 122.7,12.7 123.2,18.4 123.8,14.8 124.3,18.9 124.9,14.5 125.4,18.2 126.0,15.1 126.5,18.4 127.1,13.8 127.6,17.3 128.2,14.1 128.7,18.5 129.2,10.8 129.8,19.0 130.4,17.3 130.9,17.5 131.5,15.5 132.0,19.0 132.6,15.2 133.1,18.7 133.7,14.8 134.2,17.3 134.8,15.8 135.3,19.1 135.9,16.3 136.4,17.1 137.0,14.7 137.5,20.1 138.1,20.1 138.6,20.1 139.2,20.1 139.7,20.1 140.2,20.1 140.8,16.1 141.4,17.0 141.9,18.0 142.5,16.5 143.0,12.7 143.6,15.1 144.1,15.0 144.7,15.9 145.2,15.0 145.8,17.0 146.3,20.1 146.9,20.1 147.4,20.1 148.0,20.1 148.5,20.1 149.1,20.1 149.6,20.1 150.2,20.1 150.7,20.1 151.2,15.8 151.8,15.3 152.4,17.7 152.9,15.2 153.5,15.7 154.0,15.5 154.6,20.1 155.1,20.1 155.7,20.1 156.2,20.1 156.8,20.1 157.3,16.2 157.9,14.9 158.4,16.2 159.0,15.9 159.5,14.0 160.1,17.1 160.6,18.1 161.2,16.2 161.7,12.9 162.2,14.2 162.8,16.3 163.4,20.1 163.9,20.1 164.5,20.1 165.0,20.1 165.6,20.1 166.1,20.1 166.7,20.1 167.2,20.1 167.8,20.1 168.3,13.5 168.9,16.0 169.4,14.3 170.0,16.1 170.5,15.4 171.1,14.5 171.6,16.1 172.2,20.1 172.7,20.1 173.2,20.1 173.8,16.2 174.4,14.9 174.9,16.5 175.5,16.2 176.0,15.1 176.6,14.5 177.1,15.4 177.7,14.1 178.2,13.9 178.8,16.3 179.3,16.9 179.9,14.5 180.4,16.0 181.0,13.9 181.5,14.6 182.1,15.7 182.6,20.1 183.2,20.1 183.7,20.1 184.3,20.1 184.8,14.0 185.4,16.1 185.9,13.9 186.5,16.0 187.0,14.0 187.6,13.4 188.1,14.2 188.7,16.8 189.2,20.1 189.8,20.1 190.3,20.1 190.9,16.1 191.4,13.1 192.0,15.3 192.5,20.1 193.1,14.3 193.6,16.4 194.2,15.5 194.7,20.1 195.3,14.4 195.8,14.5 196.4,14.9 196.9,20.1 197.5,20.1 198.0,20.1 198.6,20.1 199.1,20.1 199.7,20.1 200.2,20.1 200.8,20.1 201.3,20.1 201.9,12.8 202.4,15.8 203.0,16.0 203.5,17.6 204.1,14.8 204.6,15.2 205.2,16.4 205.7,18.4 206.3,20.1 206.8,20.1 207.4,20.1 207.9,15.5 208.5,15.3 209.0,16.3 209.6,14.7 210.1,16.4 210.7,14.1 211.2,17.1 211.8,16.8 212.3,15.8 212.9,13.7 213.4,18.6 214.0,20.1 214.5,20.1 215.1,20.1 215.6,20.1 216.2,20.1 216.7,20.1 217.3,20.1 217.8,20.1 218.4,15.8 218.9,13.8 219.5,15.6 220.0,16.8 220.6,17.0 221.1,14.6 221.7,16.4 222.2,17.8 222.8,20.1 223.3,20.1 223.9,20.1 224.4,14.4 225.0,13.7 225.5,14.3 226.1,14.3 226.6,15.9 227.2,14.1 227.7,15.2 228.3,16.9 228.8,14.6 229.4,16.8 229.9,20.1 230.5,15.9 231.0,15.9 231.6,16.8 232.1,17.1 232.7,18.5 233.2,20.1 233.8,20.1 234.3,20.1 234.9,15.0 235.4,14.3 236.0,13.8 236.5,14.3 237.1,12.6 237.6,14.3 238.2,14.3 238.7,15.5 239.3,20.1 239.8,20.1 240.4,20.1 240.9,16.6 241.5,16.7 242.0,14.8 242.6,16.0 243.1,15.5 243.7,14.7 244.2,16.0 244.8,13.7 245.3,14.9 245.9,16.2 246.4,20.1 247.0,16.6 247.5,16.0 248.1,16.3 248.6,15.1 249.2,18.5 249.7,20.1 250.3,20.1 250.8,20.1 251.4,20.1 251.9,14.9 252.5,13.9 253.0,13.1 253.6,18.5 254.1,15.6 254.7,15.7 255.2,15.7 255.8,20.1 256.3,20.1 256.9,20.1 257.4,20.1 258.0,15.8 258.5,16.0 259.1,15.5 259.6,15.5 260.2,15.9 260.7,20.1 261.2,15.5 261.8,15.6 262.4,16.7 262.9,16.6 263.5,18.1 264.0,15.9 264.6,15.5 265.1,13.4 265.7,14.3 266.2,17.1 266.8,20.1 267.3,20.1 267.9,20.1 268.4,16.6 269.0,15.9 269.5,14.4 270.1,16.2 270.6,14.2 271.2,16.2 271.7,15.4 272.2,14.8 272.8,20.1 273.4,20.1 273.9,20.1 274.5,20.1 275.0,15.2 275.6,15.7 276.1,13.7 276.7,18.9 277.2,16.5 277.8,15.6 278.3,15.3 278.9,20.1 279.4,13.4 280.0,13.4 280.5,14.9 281.1,20.1 281.6,20.1 282.2,20.1 282.7,20.1 283.2,20.1 283.8,20.1 284.4,20.1 284.9,20.1 285.5,14.1 286.0,14.1 286.6,16.3 287.1,17.8 287.7,15.6 288.2,15.0 288.8,16.3 289.3,20.1 289.9,20.1 290.4,20.1 291.0,20.1 291.5,16.3 292.1,13.3 292.6,13.7 293.2,14.2 293.7,16.1 294.2,15.5 294.8,17.7 295.4,14.3 295.9,13.8 296.5,13.9 297.0,17.3 297.6,20.1 298.1,20.1 298.7,20.1 299.2,20.1 299.8,20.1 300.3,20.1 300.9,20.1 301.4,20.1 302.0,20.1 302.5,15.4 303.1,13.7 303.6,16.3 304.2,15.2 304.7,16.3 305.2,14.6 305.8,15.4 306.4,20.1 306.9,20.1 307.5,20.1 308.0,15.7 308.6,16.0 309.1,15.1 309.7,17.6 310.2,15.1 310.8,16.4 311.3,15.5 311.9,15.0 312.4,14.8 313.0,16.3 313.5,16.3 314.1,20.1 314.6,20.1 315.2,20.1 315.7,20.1 316.2,20.1 316.8,20.1 317.4,20.1 317.9,20.1 318.5,20.1 319.0,12.9 319.6,15.7 320.1,15.1 320.7,16.2 321.2,15.4 321.8,13.5 322.3,15.2 322.9,16.0 323.4,20.1 324.0,20.1 324.5,20.1 325.1,14.0 325.6,15.8 326.2,12.9 326.7,17.1 327.2,16.4 327.8,16.5 328.4,15.4 328.9,16.6 329.5,15.5 330.0,13.7 330.6,15.1 331.1,15.4 331.7,20.1 332.2,20.1 332.8,20.1 333.3,20.1 333.9,20.1 334.4,20.1 335.0,20.1 335.5,20.1 336.1,16.0 336.6,15.2 337.2,17.0 337.7,15.0 338.2,15.6 338.8,14.9 339.4,16.9 339.9,20.1 340.5,20.1 341.0,20.1 341.6,20.1 342.1,15.0 342.7,14.6 343.2,15.7 343.8,17.3 344.3,14.7 344.9,14.1 345.4,13.6 346.0,17.6 346.5,16.0 347.1,16.2 347.6,14.9 348.2,18.2 348.7,20.1 349.2,20.1 349.8,20.1 350.4,20.1 350.9,20.1 351.5,20.1 352.0,20.1 352.6,13.5 353.1,15.8 353.7,14.9 354.2,14.5 354.8,15.2 355.3,13.2 355.9,14.5 356.4,15.9 357.0,20.1 357.5,20.1 358.1,20.1 358.6,15.0 359.2,16.2 359.7,14.0 360.3,20.1 360.8,14.2 361.4,17.0 361.9,16.4 362.5,15.2 363.0,16.8 363.6,15.3 364.1,16.6 364.7,20.1 365.2,15.3 365.8,17.5 366.3,10.9 366.9,18.3 367.4,11.9 368.0,18.9 368.5,15.2 369.1,18.0 369.6,15.6 370.2,18.8 370.7,16.4 371.3,18.9 371.8,12.0 372.4,17.8 372.9,16.4 373.5,18.7 374.0,13.2 374.6,17.3 375.1,14.4 375.7,17.6 376.2,16.1 376.8,17.5 377.3,12.5 377.9,18.6 378.4,15.7 379.0,19.3 379.5,13.9 380.1,18.0 380.6,17.3 381.2,18.1 381.7,11.0 382.3,19.2 382.8,16.5 383.4,19.3 383.9,14.6 384.5,18.4 385.0,11.7 385.6,19.2 386.1,16.1 386.7,17.4 387.2,17.4 387.8,18.9 388.3,15.0 388.9,19.3 389.4,15.8 390.0,18.1 390.5,13.8 391.1,18.0 391.6,13.8 392.2,17.8 392.7,17.4 393.3,18.0 393.8,14.0 394.4,18.8 394.9,15.2 395.5,18.7 396.0,11.5 396.6,18.8 397.1,16.5 397.7,17.5 398.2,12.4 398.8,17.7 399.3,12.9 399.9,18.4 400.4,14.1 401.0,18.2 401.5,13.9 402.1,17.4 402.6,15.6 403.2,17.6 403.7,17.4 404.3,19.1 404.8,11.9 405.4,18.7 405.9,13.8 406.5,17.2 407.0,13.3 407.6,18.2 408.1,13.4 408.7,17.1 409.2,20.1 409.8,20.1 410.3,20.1 410.9,20.1 411.4,20.1 412.0,20.1 412.5,20.1 413.1,20.1 413.6,20.1 414.2,20.1 414.7,20.1 415.3,20.1 415.8,20.1 416.4,20.1 416.9,20.1 417.5,20.1 418.0,20.1 418.6,20.1 419.1,20.1 419.7,15.4 420.2,17.0 420.8,14.3 421.3,15.4 421.9,14.4 422.4,14.6 423.0,13.8 423.5,14.6 424.1,18.3 424.6,20.1 425.2,20.1 425.7,16.5 426.3,17.0 426.8,16.2 427.4,16.0 427.9,15.9 428.5,14.0 429.0,14.6 429.6,13.5 430.1,16.3 430.7,15.8 431.2,18.4 431.8,15.4 432.3,16.7 432.9,16.3 433.4,16.0 434.0,17.3 434.5,20.1 435.1,20.1 435.6,20.1 436.2,20.1 436.7,13.0 437.3,15.1 437.8,14.3 438.4,15.3 438.9,15.2 439.5,15.0 440.0,17.6 440.6,20.1 441.1,20.1 441.7,20.1 442.2,20.1 442.8,14.3 443.3,13.5 443.9,13.3 444.4,18.5 445.0,15.2 445.5,15.1 446.1,16.0 446.6,16.9 447.2,14.3 447.7,16.4 448.3,16.7 448.8,20.1 449.4,20.1 449.9,20.1 450.5,20.1 451.0,20.1 451.6,20.1 452.1,20.1 452.7,20.1 453.2,15.3 453.8,14.6 454.3,15.7 454.9,15.9 455.4,16.2 456.0,15.0 456.5,15.7 457.1,17.5 457.6,20.1 458.2,20.1 458.7,20.1 459.3,14.6 459.8,14.8 460.4,15.1 460.9,16.5 461.5,16.8 462.0,15.7 462.6,15.7 463.1,20.1 463.7,16.7 464.2,15.6 464.8,16.4 465.3,20.1 465.9,20.1 466.4,20.1 467.0,20.1 467.5,20.1 468.1,20.1 468.6,20.1 469.2,20.1 469.7,20.1 470.3,15.5 470.8,14.9 471.4,15.7 471.9,16.6 472.5,16.5 473.0,16.4 473.6,15.3 474.1,16.8 474.7,20.1 475.2,20.1 475.8,20.1 476.3,16.0 476.9,12.6 477.4,15.7 478.0,17.4 478.5,16.5 479.1,15.0 479.6,15.9 480.2,18.0 480.7,15.7 481.3,15.6 481.8,15.0 482.4,17.2 482.9,20.1 483.5,20.1 484.0,20.1 484.6,20.1 485.1,20.1 485.7,20.1 486.2,20.1 486.8,15.9 487.3,16.5 487.9,15.4 488.4,17.2 489.0,13.9 489.5,14.5 490.1,15.6 490.6,20.1 491.2,20.1 491.7,20.1 492.3,20.1 492.8,15.8 493.4,14.3 493.9,15.7 494.5,15.9 495.0,13.2 495.6,13.9 496.1,16.0 496.7,16.0 497.2,13.0 497.8,15.9 498.3,13.3 498.9,16.1 499.4,20.1 500.0,20.1 500.5,20.1 501.1,20.1 501.6,20.1 502.2,20.1 502.7,20.1 503.3,20.1 503.8,14.8 504.4,15.2 504.9,16.6 505.5,17.2 506.0,17.0 506.6,14.5 507.1,14.9 507.7,17.8 508.2,20.1 508.8,20.1 509.3,20.1 509.9,14.6 510.4,14.9 511.0,13.1 511.5,16.6 512.1,15.9 512.6,15.4 513.2,16.2 513.7,14.3 514.2,15.3 514.8,16.8 515.4,20.1 515.9,20.1 516.5,20.1 517.0,20.1 517.6,20.1 518.1,20.1 518.7,20.1 519.2,20.1 519.8,20.1 520.3,20.1 520.9,14.3 521.4,15.2 522.0,16.7 522.5,15.4 523.1,15.7 523.6,16.0 524.2,18.1 524.7,20.1 525.2,20.1 525.8,20.1 526.4,15.6 526.9,16.3 527.5,16.0 528.0,15.4 528.6,15.3 529.1,15.7 529.7,15.2 530.2,14.6 530.8,14.1 531.3,14.2 531.9,14.0 532.4,14.7 533.0,20.1 533.5,20.1 534.1,20.1 534.6,20.1 535.2,20.1 535.7,20.1 536.2,20.1 536.8,20.1 537.4,14.4 537.9,15.3 538.5,17.1 539.0,14.3 539.6,14.8 540.1,13.3 540.7,18.3 541.2,20.1 541.8,20.1 542.3,20.1 542.9,20.1 543.4,13.2 544.0,15.6 544.5,12.7 545.1,15.5 545.6,16.3 546.2,15.0 546.7,13.1 547.2,16.5 547.8,14.6 548.4,16.6 548.9,16.8 549.5,20.1 550.0,20.1 550.6,20.1 551.1,20.1 551.7,20.1 552.2,20.1 552.8,20.1 553.3,20.1 553.9,16.3 554.4,13.5 555.0,13.8 555.5,16.2 556.1,15.3 556.6,15.0 557.2,16.3 557.7,16.4 558.2,20.1 558.8,20.1 559.4,20.1 559.9,16.0 560.5,15.3 561.0,16.7 561.6,17.7 562.1,14.1 562.7,16.5 563.2,14.0 563.8,17.1 564.3,14.1 564.9,16.7 565.4,15.8 566.0,17.4 566.5,20.1 567.1,20.1 567.6,20.1 568.2,20.1 568.7,20.1 569.2,20.1 569.8,20.1 570.4,20.1 570.9,15.4 571.5,14.9 572.0,15.1 572.6,17.0 573.1,14.9 573.7,15.6 574.2,16.0 574.8,18.3 575.3,20.1 575.9,20.1 576.4,20.1 577.0,13.5 577.5,15.5 578.1,14.9 578.6,17.8 579.2,15.3 579.7,16.0 580.2,15.4 580.8,16.5 581.4,16.4 581.9,14.8 582.5,16.9 583.0,18.2 583.6,20.1 584.1,20.1 584.7,20.1 585.2,20.1 585.8,20.1 586.3,20.1 586.9,20.1 587.4,16.1 588.0,15.5 588.5,16.2 589.1,15.9 589.6,14.6 590.2,15.0 590.7,17.1 591.2,16.9 591.8,20.1 592.4,20.1 592.9,20.1 593.5,15.2 594.0,15.1 594.6,16.5 595.1,16.6 595.7,14.4 596.2,12.7 596.8,16.7 597.3,15.2 597.9,15.0 598.4,13.7 599.0,17.0 599.5,20.1 600.1,20.1 600.6,20.1 601.2,20.1 601.7,20.1 602.2,20.1 602.8,20.1 603.4,20.1 603.9,20.1 604.5,16.6 605.0,16.3 605.6,15.4 606.1,18.1 606.7,15.8 607.2,14.2 607.8,14.1 608.3,18.2 608.9,20.1 609.4,20.1 610.0,20.1 610.5,15.2 611.1,13.1 611.6,16.1 612.2,13.5 612.7,13.5 613.2,13.7 613.8,16.5 614.4,13.5 614.9,14.4 615.5,14.7 616.0,20.1 616.6,20.1 617.1,20.1 617.7,20.1 618.2,20.1 618.8,20.1 619.3,20.1 619.9,20.1 620.4,20.1 621.0,20.1 621.5,15.7 622.1,14.4 622.6,14.2 623.2,20.1 623.7,15.4 624.2,14.4 624.8,15.9 625.4,20.1 625.9,20.1 626.5,20.1 627.0,20.1 627.6,13.3 628.1,13.0 628.7,16.6 629.2,13.7 629.8,15.6 630.3,15.9 630.9,17.7 631.4,15.1 632.0,13.8 632.5,15.5 633.1,20.1 633.6,20.1 634.2,20.1 634.7,20.1 635.2,20.1 635.8,20.1 636.4,20.1 636.9,20.1 637.5,20.1 638.0,16.2 638.6,14.9 639.1,16.1 639.7,13.5 640.2,16.3 640.8,14.4 641.3,17.7 641.9,20.1 642.4,11.5 643.0,19.0 643.5,16.6 644.1,18.7 644.6,16.5 645.2,17.8 645.7,11.9 646.2,19.1 646.8,17.0 647.4,18.7 647.9,12.9 648.5,17.5 649.0,14.7 649.6,18.1 650.1,11.6 650.7,17.2 651.2,16.9 651.8,17.8 652.3,12.8 652.9,17.2 653.4,15.1 654.0,19.0 654.5,14.8 655.1,18.5 655.6,14.5 656.2,17.5 656.7,13.6 657.2,17.9 657.8,13.7 658.4,19.0 658.9,17.1 659.5,18.4 660.0,11.7 660.6,17.7 661.1,12.6 661.7,18.1 662.2,12.6 662.8,17.2 663.3,13.4 663.9,17.4 664.4,11.4 665.0,17.9 665.5,11.9 666.1,19.2 666.6,17.0 667.2,17.3 667.7,15.7 668.2,18.7 668.8,16.4 669.4,17.8 669.9,17.2 670.5,17.5 671.0,15.7 671.6,17.5 672.1,11.9 672.7,17.6 673.2,14.7 673.8,17.8 674.3,12.6 674.9,14.2 675.4,14.8 676.0,14.3 676.5,15.1 677.1,15.0 677.6,15.0 678.2,15.8 678.7,16.0 679.2,15.8 679.8,15.7 680.4,16.2 680.9,16.0 681.5,16.3 682.0,16.7 682.6,17.1 683.1,16.5 683.7,16.5 684.2,17.4 684.8,17.3 685.3,17.3 685.9,17.4 686.4,17.6 687.0,17.3 687.5,17.8 688.1,17.9 688.6,18.2 689.2,18.2 689.7,18.1 690.2,18.5 690.8,18.5 691.4,18.4 691.9,18.8 692.5,18.7 693.0,18.8 693.6,18.9 694.1,19.0 694.7,19.1 695.2,19.2 695.8,19.2 696.3,19.2 696.9,19.3 697.4,19.4 698.0,19.4 698.5,19.5 699.1,19.5 699.6,19.7 700.2,19.7 700.7,19.7 701.2,19.8 701.8,19.8 702.4,19.8 702.9,19.9 703.5,19.9 704.0,20.0 704.6,20.0 705.1,20.0 705.7,20.1 706.2,20.1 706.8,20.1 707.3,20.1 707.9,20.1 708.4,20.1 709.0,20.1 709.5,20.1 710.1,20.1 710.6,20.1 711.2,20.1 711.7,20.1 712.3,20.1 712.8,20.1 713.4,20.1 713.9,20.1 714.5,20.1 715.0,20.1 715.6,20.1 716.1,20.1 716.7,20.1 717.2,20.1 717.8,20.1 718.3,20.1 718.9,20.1 719.4,20.1 720.0,20.1 720.5,20.1 721.1,20.1 721.6,20.1 722.2,20.1 722.7,20.1 723.3,20.1 723.8,20.1 724.4,20.1 724.4,20.8 723.8,20.8 723.3,20.8 722.7,20.8 722.2,20.8 721.6,20.8 721.1,20.8 720.5,20.8 720.0,20.8 719.4,20.8 718.9,20.8 718.3,20.8 717.8,20.8 717.2,20.8 716.7,20.8 716.1,20.8 715.6,20.8 715.0,20.8 714.5,20.8 713.9,20.8 713.4,20.8 712.8,20.8 712.3,20.8 711.7,20.8 711.2,20.8 710.6,20.8 710.1,20.8 709.5,20.8 709.0,20.8 708.4,20.8 707.9,20.8 707.3,20.8 706.8,20.8 706.2,20.8 705.7,20.8 705.1,20.8 704.6,20.9 704.0,20.9 703.5,20.9 702.9,21.0 702.4,21.0 701.8,21.1 701.2,21.1 700.7,21.1 700.2,21.2 699.6,21.3 699.1,21.4 698.5,21.4 698.0,21.5 697.4,21.5 696.9,21.7 696.3,21.6 695.8,21.7 695.2,21.9 694.7,22.1 694.1,22.0 693.6,22.1 693.0,22.1 692.5,22.3 691.9,22.2 691.4,22.6 690.8,22.6 690.2,22.8 689.7,23.0 689.2,22.9 688.6,23.0 688.1,23.3 687.5,23.4 687.0,23.7 686.4,23.5 685.9,23.8 685.3,23.9 684.8,24.2 684.2,24.3 683.7,24.4 683.1,24.7 682.6,24.7 682.0,24.7 681.5,25.0 680.9,25.5 680.4,25.8 679.8,25.4 679.2,25.3 678.7,25.6 678.2,25.7 677.6,26.8 677.1,26.7 676.5,27.1 676.0,27.3 675.4,27.1 674.9,27.3 674.3,30.3 673.8,23.1 673.2,26.6 672.7,23.6 672.1,30.4 671.6,23.6 671.0,26.2 670.5,23.8 669.9,24.0 669.4,23.4 668.8,25.0 668.2,22.3 667.7,25.3 667.2,24.0 666.6,24.0 666.1,21.7 665.5,29.3 665.0,23.7 664.4,31.6 663.9,24.0 663.3,28.9 662.8,24.0 662.2,29.3 661.7,23.2 661.1,29.9 660.6,23.3 660.0,29.9 659.5,22.5 658.9,24.2 658.4,21.9 657.8,28.9 657.2,23.2 656.7,28.8 656.2,23.5 655.6,26.8 655.1,22.7 654.5,27.0 654.0,22.0 653.4,27.2 652.9,24.1 652.3,29.0 651.8,23.6 651.2,24.9 650.7,23.8 650.1,30.9 649.6,23.2 649.0,27.5 648.5,23.6 647.9,29.0 647.4,22.4 646.8,24.4 646.2,22.0 645.7,29.9 645.2,23.6 644.6,25.1 644.1,22.3 643.5,25.1 643.0,22.0 642.4,31.0 641.9,20.8 641.3,23.6 640.8,27.3 640.2,25.6 639.7,28.0 639.1,25.2 638.6,27.3 638.0,24.8 637.5,20.8 636.9,20.8 636.4,20.8 635.8,20.8 635.2,20.8 634.7,20.8 634.2,20.8 633.6,20.8 633.1,20.8 632.5,26.7 632.0,27.4 631.4,26.4 630.9,23.6 630.3,25.3 629.8,26.6 629.2,28.1 628.7,25.0 628.1,28.7 627.6,28.6 627.0,20.8 626.5,20.8 625.9,20.8 625.4,20.8 624.8,25.9 624.2,27.0 623.7,26.9 623.2,20.8 622.6,28.0 622.1,27.4 621.5,25.4 621.0,20.8 620.4,20.8 619.9,20.8 619.3,20.8 618.8,20.8 618.2,20.8 617.7,20.8 617.1,20.8 616.6,20.8 616.0,20.8 615.5,27.4 614.9,27.0 614.4,27.6 613.8,24.8 613.2,27.7 612.7,28.2 612.2,28.1 611.6,25.0 611.1,28.2 610.5,26.8 610.0,20.8 609.4,20.8 608.9,20.8 608.3,23.1 607.8,27.5 607.2,27.9 606.7,25.6 606.1,23.2 605.6,26.3 605.0,25.0 604.5,24.6 603.9,20.8 603.4,20.8 602.8,20.8 602.2,20.8 601.7,20.8 601.2,20.8 600.6,20.8 600.1,20.8 599.5,20.8 599.0,24.3 598.4,28.1 597.9,26.8 597.3,26.4 596.8,25.0 596.2,29.3 595.7,27.4 595.1,25.0 594.6,25.3 594.0,27.1 593.5,26.4 592.9,20.8 592.4,20.8 591.8,20.8 591.2,24.4 590.7,24.1 590.2,27.2 589.6,26.8 589.1,25.4 588.5,25.2 588.0,26.1 587.4,25.6 586.9,20.8 586.3,20.8 585.8,20.8 585.2,20.8 584.7,20.8 584.1,20.8 583.6,20.8 583.0,22.7 582.5,24.2 581.9,26.0 581.4,24.9 580.8,24.9 580.2,26.7 579.7,25.5 579.2,26.3 578.6,23.7 578.1,27.2 577.5,26.2 577.0,27.6 576.4,20.8 575.9,20.8 575.3,20.8 574.8,23.0 574.2,25.3 573.7,26.3 573.1,26.2 572.6,24.2 572.0,26.7 571.5,27.0 570.9,26.5 570.4,20.8 569.8,20.8 569.2,20.8 568.7,20.8 568.2,20.8 567.6,20.8 567.1,20.8 566.5,20.8 566.0,23.7 565.4,25.4 564.9,25.4 564.3,27.2 563.8,23.9 563.2,27.5 562.7,25.0 562.1,26.9 561.6,23.8 561.0,24.6 560.5,26.0 559.9,25.5 559.4,20.8 558.8,20.8 558.2,20.8 557.7,24.7 557.2,25.4 556.6,27.0 556.1,26.6 555.5,25.3 555.0,27.9 554.4,27.8 553.9,25.4 553.3,20.8 552.8,20.8 552.2,20.8 551.7,20.8 551.1,20.8 550.6,20.8 550.0,20.8 549.5,20.8 548.9,24.7 548.4,25.2 547.8,27.5 547.2,24.7 546.7,28.8 546.2,26.5 545.6,25.2 545.1,26.2 544.5,29.0 544.0,26.4 543.4,28.9 542.9,20.8 542.3,20.8 541.8,20.8 541.2,20.8 540.7,22.9 540.1,28.4 539.6,27.5 539.0,28.1 538.5,24.2 537.9,26.0 537.4,27.2 536.8,20.8 536.2,20.8 535.7,20.8 535.2,20.8 534.6,20.8 534.1,20.8 533.5,20.8 533.0,20.8 532.4,26.7 531.9,28.1 531.3,27.0 530.8,27.7 530.2,27.9 529.7,27.1 529.1,25.9 528.6,26.9 528.0,26.9 527.5,25.7 526.9,25.2 526.4,26.2 525.8,20.8 525.2,20.8 524.7,20.8 524.2,23.2 523.6,25.4 523.1,26.1 522.5,26.7 522.0,24.4 521.4,26.4 520.9,27.5 520.3,20.8 519.8,20.8 519.2,20.8 518.7,20.8 518.1,20.8 517.6,20.8 517.0,20.8 516.5,20.8 515.9,20.8 515.4,20.8 514.8,24.4 514.2,26.0 513.7,27.9 513.2,25.3 512.6,26.3 512.1,25.6 511.5,24.6 511.0,28.4 510.4,27.0 509.9,27.0 509.3,20.8 508.8,20.8 508.2,20.8 507.7,23.7 507.1,27.2 506.6,27.8 506.0,24.4 505.5,24.2 504.9,25.0 504.4,25.9 503.8,26.9 503.3,20.8 502.7,20.8 502.2,20.8 501.6,20.8 501.1,20.8 500.5,20.8 500.0,20.8 499.4,20.8 498.9,25.8 498.3,28.4 497.8,25.6 497.2,29.9 496.7,25.1 496.1,25.6 495.6,27.8 495.0,28.3 494.5,25.2 493.9,26.1 493.4,28.1 492.8,25.6 492.3,20.8 491.7,20.8 491.2,20.8 490.6,20.8 490.1,26.0 489.5,26.6 489.0,27.5 488.4,24.1 487.9,26.1 487.3,25.4 486.8,26.2 486.2,20.8 485.7,20.8 485.1,20.8 484.6,20.8 484.0,20.8 483.5,20.8 482.9,20.8 482.4,23.7 481.8,26.5 481.3,26.2 480.7,26.1 480.2,23.4 479.6,25.7 479.1,26.4 478.5,25.4 478.0,23.9 477.4,26.4 476.9,28.6 476.3,25.2 475.8,20.8 475.2,20.8 474.7,20.8 474.1,24.5 473.6,26.5 473.0,25.7 472.5,25.1 471.9,24.8 471.4,25.8 470.8,26.4 470.3,25.9 469.7,20.8 469.2,20.8 468.6,20.8 468.1,20.8 467.5,20.8 467.0,20.8 466.4,20.8 465.9,20.8 465.3,20.8 464.8,25.2 464.2,26.0 463.7,24.6 463.1,20.8 462.6,25.3 462.0,26.0 461.5,24.2 460.9,25.0 460.4,26.6 459.8,27.0 459.3,27.5 458.7,20.8 458.2,20.8 457.6,20.8 457.1,23.6 456.5,26.0 456.0,26.8 455.4,25.0 454.9,25.4 454.3,26.3 453.8,27.3 453.2,26.3 452.7,20.8 452.1,20.8 451.6,20.8 451.0,20.8 450.5,20.8 449.9,20.8 449.4,20.8 448.8,20.8 448.3,24.5 447.7,25.0 447.2,27.4 446.6,24.6 446.1,25.3 445.5,26.2 445.0,26.5 444.4,22.6 443.9,29.1 443.3,27.7 442.8,27.6 442.2,20.8 441.7,20.8 441.1,20.8 440.6,20.8 440.0,23.7 439.5,27.0 438.9,26.2 438.4,25.8 437.8,27.3 437.3,26.4 436.7,29.0 436.2,20.8 435.6,20.8 435.1,20.8 434.5,20.8 434.0,23.8 433.4,25.2 432.9,24.9 432.3,25.2 431.8,26.1 431.2,22.7 430.7,26.5 430.1,25.6 429.6,28.6 429.0,27.2 428.5,27.6 427.9,25.1 427.4,25.5 426.8,24.8 426.3,24.7 425.7,24.7 425.2,20.8 424.6,20.8 424.1,22.8 423.5,27.3 423.0,28.0 422.4,27.2 421.9,28.4 421.3,26.1 420.8,27.6 420.2,24.3 419.7,26.4 419.1,20.8 418.6,20.8 418.0,20.8 417.5,20.8 416.9,20.8 416.4,20.8 415.8,20.8 415.3,20.8 414.7,20.8 414.2,20.8 413.6,20.8 413.1,20.8 412.5,20.8 412.0,20.8 411.4,20.8 410.9,20.8 410.3,20.8 409.8,20.8 409.2,20.8 408.7,24.1 408.1,29.0 407.6,23.0 407.0,28.9 406.5,24.2 405.9,27.5 405.4,22.2 404.8,30.3 404.3,22.1 403.7,23.9 403.2,23.4 402.6,25.5 402.1,24.0 401.5,28.5 401.0,23.0 400.4,27.2 399.9,22.6 399.3,29.3 398.8,24.0 398.2,29.7 397.7,23.6 397.1,25.0 396.6,22.2 396.0,29.8 395.5,22.1 394.9,27.2 394.4,22.2 393.8,28.0 393.3,23.2 392.7,24.1 392.2,23.2 391.6,28.9 391.1,23.0 390.5,27.9 390.0,23.0 389.4,25.9 388.9,21.5 388.3,27.2 387.8,22.3 387.2,23.9 386.7,24.1 386.1,25.5 385.6,21.8 385.0,30.0 384.5,22.6 383.9,27.0 383.4,21.8 382.8,24.6 382.3,21.6 381.7,30.6 381.2,22.9 380.6,23.8 380.1,23.4 379.5,28.1 379.0,21.8 378.4,25.2 377.9,22.6 377.3,30.2 376.8,23.8 376.2,25.8 375.7,23.3 375.1,27.6 374.6,23.6 374.0,29.6 373.5,22.5 372.9,24.8 372.4,23.5 371.8,30.2 371.3,22.4 370.7,25.5 370.2,22.2 369.6,25.5 369.1,23.0 368.5,26.3 368.0,22.2 367.4,29.3 366.9,23.0 366.3,31.4 365.8,23.5 365.2,26.4 364.7,20.8 364.1,25.2 363.6,26.0 363.0,24.6 362.5,26.8 361.9,24.9 361.4,24.7 360.8,27.4 360.3,20.8 359.7,27.7 359.2,25.8 358.6,27.1 358.1,20.8 357.5,20.8 357.0,20.8 356.4,25.3 355.9,27.6 355.3,28.4 354.8,26.1 354.2,26.9 353.7,27.2 353.1,26.1 352.6,27.9 352.0,20.8 351.5,20.8 350.9,20.8 350.4,20.8 349.8,20.8 349.2,20.8 348.7,20.8 348.2,23.0 347.6,27.6 347.1,25.0 346.5,25.3 346.0,23.3 345.4,28.5 344.9,27.4 344.3,26.7 343.8,24.1 343.2,25.8 342.7,26.6 342.1,26.6 341.6,20.8 341.0,20.8 340.5,20.8 339.9,20.8 339.4,24.4 338.8,26.8 338.2,26.3 337.7,26.9 337.2,24.6 336.6,26.3 336.1,25.0 335.5,20.8 335.0,20.8 334.4,20.8 333.9,20.8 333.3,20.8 332.8,20.8 332.2,20.8 331.7,20.8 331.1,25.8 330.6,26.1 330.0,28.8 329.5,26.2 328.9,24.3 328.4,26.0 327.8,24.5 327.2,24.7 326.7,24.1 326.2,28.2 325.6,26.0 325.1,27.7 324.5,20.8 324.0,20.8 323.4,20.8 322.9,25.6 322.3,26.2 321.8,28.2 321.2,25.8 320.7,25.4 320.1,25.9 319.6,25.9 319.0,29.3 318.5,20.8 317.9,20.8 317.4,20.8 316.8,20.8 316.2,20.8 315.7,20.8 315.2,20.8 314.6,20.8 314.1,20.8 313.5,24.8 313.0,25.4 312.4,27.5 311.9,27.1 311.3,25.9 310.8,24.9 310.2,26.5 309.7,23.6 309.1,27.3 308.6,26.1 308.0,25.7 307.5,20.8 306.9,20.8 306.4,20.8 305.8,25.9 305.2,27.0 304.7,25.0 304.2,27.0 303.6,25.1 303.1,27.6 302.5,26.2 302.0,20.8 301.4,20.8 300.9,20.8 300.3,20.8 299.8,20.8 299.2,20.8 298.7,20.8 298.1,20.8 297.6,20.8 297.0,24.0 296.5,28.5 295.9,28.8 295.4,27.7 294.8,24.0 294.2,25.8 293.7,25.8 293.2,26.8 292.6,27.7 292.1,28.8 291.5,25.0 291.0,20.8 290.4,20.8 289.9,20.8 289.3,20.8 288.8,24.9 288.2,26.3 287.7,26.0 287.1,23.5 286.6,25.4 286.0,27.5 285.5,28.2 284.9,20.8 284.4,20.8 283.8,20.8 283.2,20.8 282.7,20.8 282.2,20.8 281.6,20.8 281.1,20.8 280.5,27.0 280.0,28.4 279.4,28.8 278.9,20.8 278.3,26.2 277.8,26.5 277.2,24.9 276.7,22.3 276.1,27.5 275.6,26.5 275.0,26.2 274.5,20.8 273.9,20.8 273.4,20.8 272.8,20.8 272.2,27.3 271.7,26.5 271.2,25.2 270.6,27.7 270.1,25.8 269.5,26.8 269.0,25.3 268.4,25.3 267.9,20.8 267.3,20.8 266.8,20.8 266.2,24.5 265.7,27.2 265.1,28.2 264.6,26.2 264.0,25.2 263.5,23.3 262.9,24.3 262.4,24.6 261.8,25.3 261.2,26.7 260.7,20.8 260.2,25.7 259.6,26.1 259.1,25.9 258.5,25.2 258.0,25.4 257.4,20.8 256.9,20.8 256.3,20.8 255.8,20.8 255.2,26.6 254.7,25.8 254.1,25.5 253.6,22.7 253.0,28.9 252.5,28.5 251.9,27.0 251.4,20.8 250.8,20.8 250.3,20.8 249.7,20.8 249.2,22.6 248.6,26.4 248.1,25.6 247.5,25.3 247.0,25.3 246.4,20.8 245.9,25.0 245.3,27.6 244.8,27.4 244.2,25.4 243.7,26.9 243.1,26.2 242.6,25.3 242.0,27.2 241.5,24.6 240.9,24.7 240.4,20.8 239.8,20.8 239.3,20.8 238.7,26.5 238.2,27.6 237.6,27.9 237.1,28.5 236.5,26.6 236.0,27.9 235.4,26.8 234.9,27.1 234.3,20.8 233.8,20.8 233.2,20.8 232.7,22.8 232.1,24.1 231.6,24.2 231.0,25.9 230.5,25.4 229.9,20.8 229.4,24.8 228.8,26.6 228.3,24.9 227.7,26.2 227.2,27.1 226.6,25.4 226.1,27.4 225.5,28.0 225.0,27.9 224.4,26.7 223.9,20.8 223.3,20.8 222.8,20.8 222.2,23.1 221.7,24.9 221.1,27.6 220.6,24.2 220.0,24.8 219.5,26.4 218.9,28.3 218.4,25.9 217.8,20.8 217.3,20.8 216.7,20.8 216.2,20.8 215.6,20.8 215.1,20.8 214.5,20.8 214.0,20.8 213.4,22.8 212.9,28.5 212.3,26.1 211.8,25.1 211.2,23.9 210.7,27.5 210.1,25.2 209.6,26.2 209.0,25.6 208.5,26.1 207.9,25.7 207.4,20.8 206.8,20.8 206.3,20.8 205.7,22.7 205.2,25.2 204.6,26.7 204.1,27.0 203.5,23.9 203.0,25.8 202.4,25.1 201.9,29.3 201.3,20.8 200.8,20.8 200.2,20.8 199.7,20.8 199.1,20.8 198.6,20.8 198.0,20.8 197.5,20.8 196.9,20.8 196.4,26.9 195.8,27.4 195.3,27.5 194.7,20.8 194.2,26.5 193.6,25.1 193.1,27.2 192.5,20.8 192.0,26.7 191.4,28.2 190.9,25.3 190.3,20.8 189.8,20.8 189.2,20.8 188.7,24.6 188.1,26.8 187.6,28.6 187.0,27.7 186.5,25.1 185.9,27.4 185.4,25.1 184.8,28.0 184.3,20.8 183.7,20.8 183.2,20.8 182.6,20.8 182.1,26.4 181.5,27.3 181.0,27.9 180.4,25.9 179.9,27.4 179.3,24.0 178.8,25.6 178.2,28.1 177.7,27.2 177.1,26.4 176.6,27.8 176.0,26.4 175.5,25.9 174.9,24.8 174.4,26.3 173.8,25.4 173.2,20.8 172.7,20.8 172.2,20.8 171.6,25.3 171.1,27.1 170.5,26.5 170.0,25.6 169.4,27.3 168.9,25.5 168.3,28.4 167.8,20.8 167.2,20.8 166.7,20.8 166.1,20.8 165.6,20.8 165.0,20.8 164.5,20.8 163.9,20.8 163.4,20.8 162.8,24.9 162.2,27.8 161.7,28.6 161.2,25.2 160.6,23.5 160.1,24.7 159.5,27.0 159.0,25.5 158.4,25.3 157.9,26.9 157.3,26.0 156.8,20.8 156.2,20.8 155.7,20.8 155.1,20.8 154.6,20.8 154.0,26.5 153.5,25.9 152.9,26.4 152.4,23.6 151.8,26.4 151.2,25.9 150.7,20.8 150.2,20.8 149.6,20.8 149.1,20.8 148.5,20.8 148.0,20.8 147.4,20.8 146.9,20.8 146.3,20.8 145.8,24.2 145.2,26.5 144.7,25.6 144.1,26.9 143.6,26.4 143.0,29.6 142.5,25.4 141.9,23.3 141.4,24.4 140.8,25.6 140.2,20.8 139.7,20.8 139.2,20.8 138.6,20.8 138.1,20.8 137.5,20.8 137.0,26.8 136.4,24.3 135.9,25.6 135.3,21.9 134.8,25.8 134.2,23.7 133.7,26.6 133.1,22.5 132.6,26.8 132.0,22.0 131.5,25.8 130.9,24.1 130.4,24.3 129.8,22.1 129.2,30.6 128.7,22.6 128.2,28.3 127.6,23.9 127.1,28.8 126.5,22.8 126.0,26.8 125.4,23.1 124.9,27.4 124.3,22.2 123.8,27.0 123.2,22.6 122.7,29.3 122.1,22.2 121.6,30.5 121.0,23.1 120.5,26.8 119.9,22.5 119.4,30.4 118.8,22.8 118.3,25.3 117.7,23.7 117.2,28.1 116.6,23.2 116.1,24.5 115.5,21.7 115.0,30.1 114.4,22.7 113.9,30.5 113.3,23.8 112.8,29.5 112.2,21.6 111.7,24.8 111.1,23.9 110.6,29.1 110.0,22.7 109.5,29.0 108.9,21.9 108.4,29.2 107.8,23.2 107.3,30.6 106.7,20.8 106.2,20.8 105.6,20.8 105.1,20.8 104.5,20.8 104.0,23.8 103.4,25.6 102.9,25.7 102.3,28.2 101.8,28.6 101.2,29.3 100.7,28.7 100.1,20.8 99.6,20.8 99.0,20.8 98.5,20.8 97.9,23.2 97.4,29.2 96.8,27.3 96.3,27.9 95.7,24.8 95.2,22.8 94.6,26.4 94.1,26.1 93.5,27.2 93.0,27.0 92.4,20.8 91.9,26.8 91.3,29.3 90.8,29.6 90.2,26.1 89.7,29.7 89.1,20.8 88.6,20.8 88.0,20.8 87.5,26.6 86.9,28.4 86.4,26.6 85.8,29.0 85.2,26.4 84.7,26.6 84.2,27.5 83.6,20.8 83.1,20.8 82.5,20.8 82.0,20.8 81.4,20.8 80.9,20.8 80.3,20.8 79.8,20.8 79.2,24.6 78.7,28.0 78.1,25.5 77.6,26.0 77.0,24.3 76.5,25.7 75.9,26.2 75.4,26.1 74.8,25.1 74.2,26.3 73.7,24.8 73.2,27.7 72.6,20.8 72.1,20.8 71.5,20.8 71.0,25.0 70.4,26.9 69.9,24.8 69.3,26.1 68.8,24.9 68.2,25.5 67.7,28.5 67.1,27.3 66.6,20.8 66.0,20.8 65.5,20.8 64.9,20.8 64.4,20.8 63.8,20.8 63.3,20.8 62.7,20.8 62.2,22.6 61.6,25.7 61.1,24.7 60.5,27.4 60.0,24.4 59.4,28.2 58.9,25.7 58.3,26.0 57.8,27.4 57.2,28.0 56.7,26.8 56.1,20.8 55.6,20.8 55.0,20.8 54.5,20.8 53.9,25.9 53.4,27.3 52.8,26.4 52.3,20.8 51.7,25.9 51.2,26.9 50.6,26.4 50.1,20.8 49.5,20.8 49.0,20.8 48.4,20.8 47.9,20.8 47.3,20.8 46.8,20.8 46.2,20.8 45.7,24.5 45.1,27.7 44.6,24.8 44.0,25.8 43.5,26.4 42.9,29.4 42.4,29.0 41.8,28.6 41.2,24.7 40.7,25.7 40.2,27.4 39.6,27.5 39.1,20.8 38.5,20.8 38.0,20.8 37.4,20.8 36.9,28.2 36.3,26.6 35.8,26.1 35.2,24.4 34.7,26.4 34.1,25.1 33.6,25.0 33.0,20.8 32.5,20.8 31.9,20.8 31.4,20.8 30.8,23.9 30.3,25.8 29.7,25.0 29.2,25.9 28.6,25.4 28.1,23.1 27.5,25.5 27.0,26.4 26.4,25.4 25.9,25.6 25.3,24.6 24.8,25.5 24.2,28.0 23.7,24.7 23.1,26.1 22.6,20.8 22.0,20.8 21.5,20.8 20.9,20.8 20.4,20.8 19.8,25.6 19.2,26.9 18.7,29.3 18.2,23.9 17.6,25.5 17.1,26.8 16.5,20.8 16.0,20.8 15.4,20.8 14.9,20.8 14.3,20.8 13.8,20.8 13.2,20.8 12.7,20.8 12.1,20.8 11.6,27.4 11.0,25.9 10.5,24.7 9.9,20.8 9.4,26.6 8.8,24.2 8.2,26.8 7.7,20.8 7.2,20.8 6.6,20.8 6.1,20.8 5.5,20.8 5.0,20.8 4.4,20.8 3.9,20.8 3.3,20.8 2.8,20.8 2.2,20.8 1.7,20.8 1.1,20.8 0.6,20.8 0.0,20.8Z" fill="#0c7d97"/><path d="M107.0,14.8V28.0M109.3,12.1V26.9M110.9,12.9V27.9M112.4,12.9V26.1M114.1,13.5V28.6M116.4,15.6V25.3M118.0,14.4V25.3M119.1,13.0V25.6M121.1,13.1V24.9M122.8,14.9V24.9M124.0,12.1V28.9M126.0,15.2V26.0M127.0,12.3V25.3M128.7,13.7V29.3M130.9,15.6V29.1M132.4,13.0V28.5M133.3,15.3V26.0M135.1,13.4V28.1M136.4,13.4V26.5M365.0,13.2V27.0M366.6,15.4V25.1M368.5,12.6V28.3M369.8,12.9V28.0M371.0,13.2V26.7M372.8,12.0V28.3M375.1,13.6V26.5M377.3,15.1V25.0M379.5,15.0V28.8M381.2,14.7V28.0M382.7,14.7V28.0M383.8,14.6V24.9M385.3,13.5V27.3M386.9,15.0V29.1M387.8,13.1V25.6M388.7,12.6V26.4M389.8,12.2V26.4M391.2,12.7V28.5M393.5,15.2V27.6M395.8,15.8V26.6M397.3,12.3V25.1M398.6,15.3V27.6M400.7,14.9V28.4M402.9,15.1V27.9M405.2,12.9V25.1M406.1,15.5V25.8M407.8,12.2V28.7M642.0,12.8V28.3M642.9,14.3V29.0M644.1,12.5V28.4M646.0,12.5V27.8M647.8,13.4V27.8M649.1,13.8V26.3M650.0,13.6V27.6M652.4,12.9V28.3M653.8,15.7V29.2M655.1,12.3V26.1M657.2,14.6V26.1M658.2,12.4V28.2M660.3,14.6V27.5M661.2,14.6V28.5M662.5,13.8V26.7M664.7,15.1V26.7M666.4,12.1V28.9M667.2,15.2V27.3M668.1,15.4V28.9M669.7,12.5V28.5M671.1,13.8V29.2M672.2,15.1V25.1M673.1,13.7V24.9M675.0,12.7V27.1" stroke="#0c7d97" stroke-width="0.6" stroke-opacity="0.85" fill="none"/></svg>
<div class="abs" style="left:246.0px;top:273.0px;width:724.4px;height:40.8px;border-radius:3.5px;background:#00c1f0"></div>
<svg style="left:246.0px;top:273.0px" width="724.4" height="40.8" viewBox="0 0 724.4 40.8"><path d="M0 20.4H724.4" stroke="#0c7d97" stroke-width="0.7" fill="none"/><path d="M0.0,20.1 0.6,20.1 1.2,20.1 1.8,20.1 2.4,20.1 3.0,20.1 3.6,20.1 4.2,20.1 4.8,20.1 5.4,20.1 6.0,20.1 6.6,20.1 7.2,20.1 7.8,20.1 8.4,20.1 9.0,20.1 9.6,20.1 10.2,20.1 10.8,20.1 11.4,20.1 12.0,20.1 12.6,20.1 13.2,20.1 13.8,20.1 14.4,20.1 15.0,20.1 15.6,20.1 16.2,20.1 16.8,20.1 17.4,20.1 18.0,20.1 18.6,20.1 19.2,20.1 19.8,20.1 20.4,20.1 21.0,20.1 21.6,20.1 22.2,20.1 22.8,20.1 23.4,20.1 24.0,20.1 24.6,20.1 25.2,20.1 25.8,20.1 26.4,20.1 27.0,20.1 27.6,20.1 28.2,20.1 28.8,20.1 29.4,20.1 30.0,20.1 30.6,20.1 31.2,20.1 31.8,20.1 32.4,20.1 33.0,20.1 33.6,20.1 34.2,20.1 34.8,20.1 35.4,20.1 36.0,20.1 36.6,20.1 37.2,20.1 37.8,20.1 38.4,20.1 39.0,20.1 39.6,20.1 40.2,20.1 40.8,20.1 41.4,20.1 42.0,20.1 42.6,20.1 43.2,20.1 43.8,20.1 44.4,20.1 45.0,20.1 45.6,20.1 46.2,20.1 46.8,20.1 47.4,20.1 48.0,20.1 48.6,20.1 49.2,20.1 49.8,20.1 50.4,20.1 51.0,20.1 51.6,20.1 52.2,20.1 52.8,20.1 53.4,20.1 54.0,20.1 54.6,20.1 55.2,20.1 55.8,20.1 56.4,20.1 57.0,20.1 57.6,20.1 58.2,20.1 58.8,20.1 59.4,20.1 60.0,20.1 60.6,20.1 61.2,20.1 61.8,20.1 62.4,20.1 63.0,20.1 63.6,20.1 64.2,20.1 64.8,20.1 65.4,20.1 66.0,20.1 66.6,20.1 67.2,20.1 67.8,20.1 68.4,20.1 69.0,20.1 69.6,20.1 70.2,20.1 70.8,20.1 71.4,20.1 72.0,20.1 72.6,20.1 73.2,20.1 73.8,20.1 74.4,20.1 75.0,20.1 75.6,20.1 76.2,20.1 76.8,20.1 77.4,20.1 78.0,20.1 78.6,20.1 79.2,20.1 79.8,20.1 80.4,20.1 81.0,20.1 81.6,20.1 82.2,20.1 82.8,20.1 83.4,20.1 84.0,20.1 84.6,20.1 85.2,20.1 85.8,20.1 86.4,20.1 87.0,20.1 87.6,20.1 88.2,20.1 88.8,20.1 89.4,20.1 90.0,20.1 90.6,20.1 91.2,20.1 91.8,20.1 92.4,20.1 93.0,20.1 93.6,20.1 94.2,20.1 94.8,20.1 95.4,20.1 96.0,20.1 96.6,20.1 97.2,20.1 97.8,20.1 98.4,20.1 99.0,20.1 99.6,20.1 100.2,20.1 100.8,20.1 101.4,20.1 102.0,20.1 102.6,20.1 103.2,20.1 103.8,20.1 104.4,20.1 105.0,20.1 105.6,20.1 106.2,20.1 106.8,20.1 107.4,20.1 108.0,20.1 108.6,20.1 109.2,20.1 109.8,20.1 110.4,20.1 111.0,20.1 111.6,20.1 112.2,20.1 112.8,20.1 113.4,20.1 114.0,20.1 114.6,20.1 115.2,20.1 115.8,20.1 116.4,20.1 117.0,20.1 117.6,20.1 118.2,20.1 118.8,20.1 119.4,20.1 120.0,20.1 120.6,20.1 121.2,20.1 121.8,20.1 122.4,20.1 123.0,20.1 123.6,20.1 124.2,20.1 124.8,20.1 125.4,20.1 126.0,20.1 126.6,20.1 127.2,20.1 127.8,20.1 128.4,20.1 129.0,20.1 129.6,20.1 130.2,20.1 130.8,20.1 131.4,20.1 132.0,20.1 132.6,20.1 133.2,20.1 133.8,20.1 134.4,20.1 135.0,20.1 135.6,20.1 136.2,20.1 136.8,20.1 137.4,20.1 138.0,20.1 138.6,20.1 139.2,20.1 139.8,20.1 140.4,20.1 141.0,20.1 141.6,20.1 142.2,20.1 142.8,20.1 143.4,20.1 144.0,20.1 144.6,20.1 145.2,20.1 145.8,20.1 146.4,20.1 147.0,20.1 147.6,20.1 148.2,19.9 148.8,18.9 149.4,19.2 150.0,19.6 150.6,18.7 151.2,19.9 151.8,20.1 152.4,19.2 153.0,19.9 153.6,20.1 154.2,19.6 154.8,19.0 155.4,19.3 156.0,19.2 156.6,18.4 157.2,19.4 157.8,19.2 158.4,19.1 159.0,19.1 159.6,19.5 160.2,19.3 160.8,19.5 161.4,19.9 162.0,19.2 162.6,19.4 163.2,19.5 163.8,20.1 164.4,20.0 165.0,20.1 165.6,20.1 166.2,20.1 166.8,20.1 167.4,20.1 168.0,20.1 168.6,19.9 169.2,19.0 169.8,18.3 170.4,18.6 171.0,19.7 171.6,19.9 172.2,19.7 172.8,19.0 173.4,19.6 174.0,18.7 174.6,19.5 175.2,19.6 175.8,19.2 176.4,19.2 177.0,19.9 177.6,18.6 178.2,19.4 178.8,19.9 179.4,20.0 180.0,20.1 180.6,20.1 181.2,20.1 181.8,20.0 182.4,19.7 183.0,19.9 183.6,20.0 184.2,19.0 184.8,18.6 185.4,19.5 186.0,18.8 186.6,19.5 187.2,19.3 187.8,19.8 188.4,18.9 189.0,19.6 189.6,19.8 190.2,19.8 190.8,18.9 191.4,19.2 192.0,19.7 192.6,18.4 193.2,19.3 193.8,20.0 194.4,20.1 195.0,20.1 195.6,20.1 196.2,20.1 196.8,20.1 197.4,20.1 198.0,20.0 198.6,19.3 199.2,18.8 199.8,19.1 200.4,19.3 201.0,19.5 201.6,19.6 202.2,18.4 202.8,19.3 203.4,19.9 204.0,18.4 204.6,18.9 205.2,19.7 205.8,19.9 206.4,18.9 207.0,19.7 207.6,20.0 208.2,19.8 208.8,19.4 209.4,19.7 210.0,19.7 210.6,18.8 211.2,19.3 211.8,19.7 212.4,20.1 213.0,17.8 213.6,19.4 214.2,19.7 214.8,19.5 215.4,18.0 216.0,18.7 216.6,19.6 217.2,19.0 217.8,19.4 218.4,19.4 219.0,18.6 219.6,19.5 220.2,19.6 220.8,18.7 221.4,19.2 222.0,19.0 222.6,18.5 223.2,19.7 223.8,20.0 224.4,19.9 225.0,20.1 225.6,20.1 226.2,20.1 226.8,20.1 227.4,20.1 228.0,20.1 228.6,20.1 229.2,20.0 229.8,19.6 230.4,19.7 231.0,18.6 231.6,19.6 232.2,20.0 232.8,19.8 233.4,19.2 234.0,19.4 234.6,19.4 235.2,19.2 235.8,18.8 236.4,18.8 237.0,19.1 237.6,19.8 238.2,19.3 238.8,18.8 239.4,19.6 240.0,19.8 240.6,20.1 241.2,20.1 241.8,20.1 242.4,18.5 243.0,18.5 243.6,18.6 244.2,19.0 244.8,18.6 245.4,18.6 246.0,19.1 246.6,18.9 247.2,18.9 247.8,18.2 248.4,18.5 249.0,19.0 249.6,18.8 250.2,19.1 250.8,18.7 251.4,19.3 252.0,19.3 252.6,18.9 253.2,18.8 253.8,19.1 254.4,18.3 255.0,18.1 255.6,18.6 256.2,18.6 256.8,19.1 257.4,18.3 258.0,19.3 258.6,18.9 259.2,18.5 259.8,18.9 260.4,18.6 261.0,18.4 261.6,18.8 262.2,18.1 262.8,18.7 263.4,18.7 264.0,18.4 264.6,19.2 265.2,19.4 265.8,20.0 266.4,19.0 267.0,19.5 267.6,19.2 268.2,19.7 268.8,19.3 269.4,19.5 270.0,19.8 270.6,19.5 271.2,19.4 271.8,20.0 272.4,19.9 273.0,20.1 273.6,20.1 274.2,20.1 274.8,20.1 275.4,20.1 276.0,20.1 276.6,18.9 277.2,18.5 277.8,19.3 278.4,19.2 279.0,18.9 279.6,19.5 280.2,19.6 280.8,19.7 281.4,20.0 282.0,18.7 282.6,19.5 283.2,19.6 283.8,19.9 284.4,19.8 285.0,19.7 285.6,20.1 286.2,20.1 286.8,20.1 287.4,20.1 288.0,20.1 288.6,20.1 289.2,19.9 289.8,18.8 290.4,19.3 291.0,19.6 291.6,18.6 292.2,19.0 292.8,18.9 293.4,19.4 294.0,19.6 294.6,19.0 295.2,19.8 295.8,20.0 296.4,19.9 297.0,19.1 297.6,19.4 298.2,19.2 298.8,20.0 299.4,18.5 300.0,19.0 300.6,18.9 301.2,19.3 301.8,19.9 302.4,20.0 303.0,20.1 303.6,20.1 304.2,18.9 304.8,19.7 305.4,19.5 306.0,19.2 306.6,19.3 307.2,18.9 307.8,19.4 308.4,19.2 309.0,19.3 309.6,18.8 310.2,19.2 310.8,18.9 311.4,19.0 312.0,19.6 312.6,18.9 313.2,19.3 313.8,19.5 314.4,19.5 315.0,19.5 315.6,19.7 316.2,19.3 316.8,19.7 317.4,20.1 318.0,20.1 318.6,20.1 319.2,20.1 319.8,19.8 320.4,18.1 321.0,19.4 321.6,18.6 322.2,18.0 322.8,18.9 323.4,18.7 324.0,19.2 324.6,18.5 325.2,19.8 325.8,19.9 326.4,18.5 327.0,19.6 327.6,19.7 328.2,20.0 328.8,20.1 329.4,20.1 330.0,20.1 330.6,20.1 331.2,20.1 331.8,20.1 332.4,20.0 333.0,19.2 333.6,18.9 334.2,19.9 334.8,19.2 335.4,18.9 336.0,19.4 336.6,18.7 337.2,19.1 337.8,19.9 338.4,18.5 339.0,19.1 339.6,19.6 340.2,19.6 340.8,18.8 341.4,19.3 342.0,19.2 342.6,18.7 343.2,19.7 343.8,18.5 344.4,18.9 345.0,19.5 345.6,19.3 346.2,19.4 346.8,19.5 347.4,19.4 348.0,19.7 348.6,19.5 349.2,19.9 349.8,20.0 350.4,20.1 351.0,19.6 351.6,18.9 352.2,19.2 352.8,19.9 353.4,19.3 354.0,19.2 354.6,19.9 355.2,17.8 355.8,19.1 356.4,19.7 357.0,19.3 357.6,19.7 358.2,19.9 358.8,19.6 359.4,18.3 360.0,19.2 360.6,19.0 361.2,19.8 361.8,19.9 362.4,19.1 363.0,19.7 363.6,19.3 364.2,19.1 364.8,19.6 365.4,19.2 366.0,19.9 366.6,20.0 367.2,19.9 367.8,19.4 368.4,19.6 369.0,20.0 369.6,19.5 370.2,19.6 370.8,19.9 371.4,19.1 372.0,18.7 372.6,19.3 373.2,19.3 373.8,19.5 374.4,19.5 375.0,19.0 375.6,19.4 376.2,19.1 376.8,18.1 377.4,18.7 378.0,19.5 378.6,19.4 379.2,19.2 379.8,19.7 380.4,19.2 381.0,18.9 381.6,19.3 382.2,19.5 382.8,19.8 383.4,20.1 384.0,20.1 384.6,20.1 385.2,20.1 385.8,20.1 386.4,20.1 387.0,20.1 387.6,20.1 388.2,20.1 388.8,19.9 389.4,18.9 390.0,19.0 390.6,19.7 391.2,19.8 391.8,18.6 392.4,19.2 393.0,19.3 393.6,18.9 394.2,19.2 394.8,18.4 395.4,19.1 396.0,19.8 396.6,19.0 397.2,19.8 397.8,19.3 398.4,18.8 399.0,19.2 399.6,19.3 400.2,19.6 400.8,19.9 401.4,20.1 402.0,20.1 402.6,20.1 403.2,19.8 403.8,19.2 404.4,19.5 405.0,20.0 405.6,17.6 406.2,18.8 406.8,19.1 407.4,19.1 408.0,19.6 408.6,20.1 409.2,20.1 409.8,20.1 410.4,20.1 411.0,20.1 411.6,20.1 412.2,20.1 412.8,20.1 413.4,20.1 414.0,20.1 414.6,20.1 415.2,20.1 415.8,20.1 416.4,20.1 417.0,20.1 417.6,20.1 418.2,20.1 418.8,20.1 419.4,20.1 420.0,20.1 420.6,20.1 421.2,20.1 421.8,20.1 422.4,20.1 423.0,20.1 423.6,20.1 424.2,20.1 424.8,20.1 425.4,20.1 426.0,20.1 426.6,20.1 427.2,20.1 427.8,20.1 428.4,20.1 429.0,20.1 429.6,20.1 430.2,20.1 430.8,20.1 431.4,20.1 432.0,20.1 432.6,20.1 433.2,20.1 433.8,20.1 434.4,20.1 435.0,20.1 435.6,20.1 436.2,20.1 436.8,20.1 437.4,20.1 438.0,20.1 438.6,20.1 439.2,20.1 439.8,20.1 440.4,20.1 441.0,20.1 441.6,20.1 442.2,20.1 442.8,20.1 443.4,20.1 444.0,20.1 444.6,20.1 445.2,20.1 445.8,20.1 446.4,20.1 447.0,20.1 447.6,20.1 448.2,20.1 448.8,20.1 449.4,20.1 450.0,20.1 450.6,20.1 451.2,20.1 451.8,20.1 452.4,20.1 453.0,20.1 453.6,20.1 454.2,20.1 454.8,20.1 455.4,20.1 456.0,20.1 456.6,20.1 457.2,20.1 457.8,20.1 458.4,20.1 459.0,20.1 459.6,20.1 460.2,20.1 460.8,20.1 461.4,20.1 462.0,20.1 462.6,20.1 463.2,20.1 463.8,20.1 464.4,20.1 465.0,20.1 465.6,20.1 466.2,20.1 466.8,20.1 467.4,20.1 468.0,20.1 468.6,20.1 469.2,20.1 469.8,20.1 470.4,20.1 471.0,20.1 471.6,20.1 472.2,20.1 472.8,20.1 473.4,20.1 474.0,20.1 474.6,20.1 475.2,20.1 475.8,20.1 476.4,20.1 477.0,20.1 477.6,20.1 478.2,20.1 478.8,19.2 479.4,18.2 480.0,19.5 480.6,18.5 481.2,18.2 481.8,19.1 482.4,19.8 483.0,19.2 483.6,19.5 484.2,19.8 484.8,19.1 485.4,18.6 486.0,19.1 486.6,19.7 487.2,19.4 487.8,19.3 488.4,18.6 489.0,19.7 489.6,19.7 490.2,19.0 490.8,19.6 491.4,20.0 492.0,19.7 492.6,19.8 493.2,19.9 493.8,19.9 494.4,19.9 495.0,20.1 495.6,20.1 496.2,18.8 496.8,19.9 497.4,20.0 498.0,19.4 498.6,19.5 499.2,19.8 499.8,19.8 500.4,19.4 501.0,19.4 501.6,19.8 502.2,18.8 502.8,19.8 503.4,19.8 504.0,19.8 504.6,19.3 505.2,19.8 505.8,20.0 506.4,19.8 507.0,20.1 507.6,20.1 508.2,20.1 508.8,20.1 509.4,19.5 510.0,18.1 510.6,18.3 511.2,17.8 511.8,17.4 512.4,18.9 513.0,18.1 513.6,19.1 514.2,18.4 514.8,18.1 515.4,17.8 516.0,18.8 516.6,18.5 517.2,18.9 517.8,18.2 518.4,18.2 519.0,17.6 519.6,18.2 520.2,17.9 520.8,19.0 521.4,18.0 522.0,18.5 522.6,18.3 523.2,18.5 523.8,18.6 524.4,17.9 525.0,18.5 525.6,18.2 526.2,17.7 526.8,18.9 527.4,18.8 528.0,18.6 528.6,19.0 529.2,18.9 529.8,17.7 530.4,18.8 531.0,18.3 531.6,18.4 532.2,18.3 532.8,18.6 533.4,19.2 534.0,19.2 534.6,18.6 535.2,19.3 535.8,19.8 536.4,19.4 537.0,19.6 537.6,19.5 538.2,19.8 538.8,19.4 539.4,19.9 540.0,20.1 540.6,18.8 541.2,18.4 541.8,19.4 542.4,19.5 543.0,18.6 543.6,19.6 544.2,19.9 544.8,19.3 545.4,19.3 546.0,19.9 546.6,19.7 547.2,18.6 547.8,19.5 548.4,19.9 549.0,19.6 549.6,18.2 550.2,19.7 550.8,18.9 551.4,18.8 552.0,19.6 552.6,19.3 553.2,19.3 553.8,19.7 554.4,19.8 555.0,20.0 555.6,20.1 556.2,20.1 556.8,20.1 557.4,20.1 558.0,20.1 558.6,20.1 559.2,19.7 559.8,19.2 560.4,19.1 561.0,19.7 561.6,19.7 562.2,19.6 562.8,19.8 563.4,18.9 564.0,19.7 564.6,18.2 565.2,19.5 565.8,19.6 566.4,18.9 567.0,18.5 567.6,19.3 568.2,19.8 568.8,19.1 569.4,19.8 570.0,19.4 570.6,19.7 571.2,19.5 571.8,20.0 572.4,20.1 573.0,20.0 573.6,20.1 574.2,20.1 574.8,20.1 575.4,20.1 576.0,20.0 576.6,19.6 577.2,18.8 577.8,19.7 578.4,19.3 579.0,19.4 579.6,19.5 580.2,19.7 580.8,18.9 581.4,19.0 582.0,19.5 582.6,19.0 583.2,19.7 583.8,19.0 584.4,19.6 585.0,19.8 585.6,19.6 586.2,19.5 586.8,19.7 587.4,20.1 588.0,19.8 588.6,18.6 589.2,19.3 589.8,19.7 590.4,18.9 591.0,19.4 591.6,19.2 592.2,19.1 592.8,19.6 593.4,19.5 594.0,20.1 594.6,19.7 595.2,19.3 595.8,19.5 596.4,18.7 597.0,19.5 597.6,19.6 598.2,19.6 598.8,19.6 599.4,19.9 600.0,17.8 600.6,18.9 601.2,19.8 601.8,19.1 602.4,19.0 603.0,19.0 603.6,19.6 604.2,19.1 604.8,19.7 605.4,19.6 606.0,19.8 606.6,18.3 607.2,19.6 607.8,19.5 608.4,18.9 609.0,19.1 609.6,19.7 610.2,19.1 610.8,19.3 611.4,19.8 612.0,18.6 612.6,19.4 613.2,18.9 613.8,18.4 614.4,19.5 615.0,19.1 615.6,19.4 616.2,19.7 616.8,18.8 617.4,19.6 618.0,19.6 618.6,19.7 619.2,20.0 619.8,19.9 620.4,19.1 621.0,19.8 621.6,20.1 622.2,20.1 622.8,20.1 623.4,20.1 624.0,20.1 624.6,20.1 625.2,20.1 625.8,19.7 626.4,19.1 627.0,19.7 627.6,19.8 628.2,18.4 628.8,19.7 629.4,18.9 630.0,19.0 630.6,19.4 631.2,19.6 631.8,18.6 632.4,19.6 633.0,19.8 633.6,19.8 634.2,19.9 634.8,20.0 635.4,19.8 636.0,19.7 636.6,20.0 637.2,19.7 637.8,18.6 638.4,19.3 639.0,19.8 639.6,20.1 640.2,20.1 640.8,20.1 641.4,20.1 642.0,19.9 642.6,19.2 643.2,19.8 643.8,18.5 644.4,18.1 645.0,19.3 645.6,18.7 646.2,19.3 646.8,19.8 647.4,18.8 648.0,18.6 648.6,19.7 649.2,19.9 649.8,19.9 650.4,20.0 651.0,20.1 651.6,20.1 652.2,20.1 652.8,20.1 653.4,20.1 654.0,20.1 654.6,20.1 655.2,19.9 655.8,19.4 656.4,19.6 657.0,19.8 657.6,19.4 658.2,19.1 658.8,19.3 659.4,19.5 660.0,19.7 660.6,19.6 661.2,19.5 661.8,19.9 662.4,19.9 663.0,20.1 663.6,20.1 664.2,20.1 664.8,20.1 665.4,20.1 666.0,20.1 666.6,20.1 667.2,20.1 667.8,18.9 668.4,18.1 669.0,19.2 669.6,19.4 670.2,19.5 670.8,18.9 671.4,19.3 672.0,19.0 672.6,19.6 673.2,19.4 673.8,19.9 674.4,19.6 675.0,19.4 675.6,18.9 676.2,19.7 676.8,19.1 677.4,19.8 678.0,18.9 678.6,18.2 679.2,19.1 679.8,18.9 680.4,18.5 681.0,19.1 681.6,19.3 682.2,19.4 682.8,18.1 683.4,19.3 684.0,18.9 684.6,18.6 685.2,19.3 685.8,19.3 686.4,18.4 687.0,18.2 687.6,18.3 688.2,18.6 688.8,18.6 689.4,18.8 690.0,18.4 690.6,19.0 691.2,18.4 691.8,18.6 692.4,19.4 693.0,18.3 693.6,18.8 694.2,19.0 694.8,18.4 695.4,19.1 696.0,18.8 696.6,18.4 697.2,18.9 697.8,18.8 698.4,18.3 699.0,18.5 699.6,18.8 700.2,18.5 700.8,18.7 701.4,18.3 702.0,19.3 702.6,18.6 703.2,18.4 703.8,18.0 704.4,19.0 705.0,19.4 705.6,18.4 706.2,19.0 706.8,19.0 707.4,18.7 708.0,18.5 708.6,18.5 709.2,19.0 709.8,19.0 710.4,18.3 711.0,18.8 711.6,18.8 712.2,18.8 712.8,18.8 713.4,19.4 714.0,19.1 714.6,19.0 715.2,17.6 715.8,18.6 716.4,18.1 717.0,18.3 717.6,18.3 718.2,18.5 718.8,19.1 719.4,19.3 720.0,19.4 720.6,20.0 721.2,19.9 721.8,18.6 722.4,20.1 723.0,20.1 723.6,20.1 724.2,20.1 724.2,20.7 723.6,20.7 723.0,20.7 722.4,20.7 721.8,22.4 721.2,21.1 720.6,20.9 720.0,21.6 719.4,21.6 718.8,21.9 718.2,22.4 717.6,22.7 717.0,23.1 716.4,22.8 715.8,22.5 715.2,23.5 714.6,22.0 714.0,22.1 713.4,21.7 712.8,22.4 712.2,22.3 711.6,22.1 711.0,22.1 710.4,22.9 709.8,22.0 709.2,22.2 708.6,22.6 708.0,22.5 707.4,22.3 706.8,21.9 706.2,21.9 705.6,22.7 705.0,21.5 704.4,22.3 703.8,23.1 703.2,22.8 702.6,22.5 702.0,21.6 701.4,22.8 700.8,22.3 700.2,22.4 699.6,22.1 699.0,22.7 698.4,22.8 697.8,22.3 697.2,22.2 696.6,22.4 696.0,22.2 695.4,22.1 694.8,22.7 694.2,21.9 693.6,22.3 693.0,22.6 692.4,21.6 691.8,22.5 691.2,22.6 690.6,22.0 690.0,22.7 689.4,22.4 688.8,22.3 688.2,22.4 687.6,23.2 687.0,22.9 686.4,22.5 685.8,21.7 685.2,21.9 684.6,22.6 684.0,22.1 683.4,21.6 682.8,23.1 682.2,21.6 681.6,21.7 681.0,21.9 680.4,22.7 679.8,22.1 679.2,21.8 678.6,22.8 678.0,22.0 677.4,21.0 676.8,22.2 676.2,21.3 675.6,22.1 675.0,21.5 674.4,21.2 673.8,20.9 673.2,21.5 672.6,21.3 672.0,21.9 671.4,21.7 670.8,21.9 670.2,21.5 669.6,21.5 669.0,21.9 668.4,22.9 667.8,22.1 667.2,20.8 666.6,20.7 666.0,20.7 665.4,20.7 664.8,20.7 664.2,20.7 663.6,20.7 663.0,20.7 662.4,20.9 661.8,20.9 661.2,21.3 660.6,21.2 660.0,21.2 659.4,21.4 658.8,21.7 658.2,21.8 657.6,21.4 657.0,21.0 656.4,21.4 655.8,21.6 655.2,21.0 654.6,20.7 654.0,20.7 653.4,20.7 652.8,20.7 652.2,20.7 651.6,20.7 651.0,20.7 650.4,20.9 649.8,20.9 649.2,21.0 648.6,21.2 648.0,22.3 647.4,22.1 646.8,21.1 646.2,21.7 645.6,22.5 645.0,21.8 644.4,22.8 643.8,22.5 643.2,21.2 642.6,21.7 642.0,20.9 641.4,20.7 640.8,20.7 640.2,20.7 639.6,20.8 639.0,21.0 638.4,21.6 637.8,22.5 637.2,21.2 636.6,20.9 636.0,21.3 635.4,21.1 634.8,20.9 634.2,21.0 633.6,21.0 633.0,21.1 632.4,21.4 631.8,22.4 631.2,21.2 630.6,21.5 630.0,21.9 629.4,22.0 628.8,21.2 628.2,22.5 627.6,21.1 627.0,21.3 626.4,21.9 625.8,21.2 625.2,20.7 624.6,20.7 624.0,20.7 623.4,20.7 622.8,20.7 622.2,20.8 621.6,20.8 621.0,21.1 620.4,21.7 619.8,21.0 619.2,20.8 618.6,21.3 618.0,21.3 617.4,21.4 616.8,22.1 616.2,21.1 615.6,21.5 615.0,21.8 614.4,21.4 613.8,22.9 613.2,22.1 612.6,21.6 612.0,22.5 611.4,21.0 610.8,21.8 610.2,22.1 609.6,21.3 609.0,21.9 608.4,22.1 607.8,21.5 607.2,21.4 606.6,22.8 606.0,21.1 605.4,21.2 604.8,21.1 604.2,22.1 603.6,21.3 603.0,22.1 602.4,22.1 601.8,22.0 601.2,21.1 600.6,22.0 600.0,23.5 599.4,20.9 598.8,21.3 598.2,21.3 597.6,21.3 597.0,21.6 596.4,22.2 595.8,21.4 595.2,21.5 594.6,21.2 594.0,20.8 593.4,21.5 592.8,21.3 592.2,21.9 591.6,21.9 591.0,21.6 590.4,22.0 589.8,21.2 589.2,21.8 588.6,22.4 588.0,21.0 587.4,20.8 586.8,21.3 586.2,21.4 585.6,21.4 585.0,21.2 584.4,21.3 583.8,21.9 583.2,21.3 582.6,22.0 582.0,21.4 581.4,22.1 580.8,22.0 580.2,21.3 579.6,21.5 579.0,21.6 578.4,21.8 577.8,21.3 577.2,22.1 576.6,21.3 576.0,20.9 575.4,20.7 574.8,20.7 574.2,20.7 573.6,20.7 573.0,20.8 572.4,20.7 571.8,20.8 571.2,21.4 570.6,21.3 570.0,21.5 569.4,21.1 568.8,21.8 568.2,21.1 567.6,21.7 567.0,22.5 566.4,22.1 565.8,21.3 565.2,21.5 564.6,22.7 564.0,21.2 563.4,22.4 562.8,21.1 562.2,21.4 561.6,21.2 561.0,21.2 560.4,22.0 559.8,21.8 559.2,21.2 558.6,20.7 558.0,20.7 557.4,20.7 556.8,20.7 556.2,20.7 555.6,20.7 555.0,20.8 554.4,21.1 553.8,21.2 553.2,21.7 552.6,21.7 552.0,21.4 551.4,22.1 550.8,22.2 550.2,21.2 549.6,23.2 549.0,21.3 548.4,20.9 547.8,21.5 547.2,22.3 546.6,21.2 546.0,21.0 545.4,21.7 544.8,21.7 544.2,21.1 543.6,21.3 543.0,22.4 542.4,21.4 541.8,21.6 541.2,22.7 540.6,22.2 540.0,20.7 539.4,21.0 538.8,21.4 538.2,21.2 537.6,21.4 537.0,21.3 536.4,21.6 535.8,21.1 535.2,21.5 534.6,22.6 534.0,21.7 533.4,21.8 532.8,22.7 532.2,22.9 531.6,22.8 531.0,23.0 530.4,22.1 529.8,23.5 529.2,22.1 528.6,22.1 528.0,22.7 527.4,22.1 526.8,21.9 526.2,23.3 525.6,22.9 525.0,22.9 524.4,23.3 523.8,22.4 523.2,22.4 522.6,22.8 522.0,22.7 521.4,23.1 520.8,22.0 520.2,23.1 519.6,23.2 519.0,24.0 518.4,23.0 517.8,22.8 517.2,22.3 516.6,22.9 516.0,22.2 515.4,23.3 514.8,23.2 514.2,22.6 513.6,21.8 513.0,23.0 512.4,22.0 511.8,23.5 511.2,23.6 510.6,22.8 510.0,23.1 509.4,21.5 508.8,20.7 508.2,20.7 507.6,20.7 507.0,20.7 506.4,21.1 505.8,20.8 505.2,21.0 504.6,21.5 504.0,21.1 503.4,21.1 502.8,21.1 502.2,22.5 501.6,21.2 501.0,21.5 500.4,21.6 499.8,21.1 499.2,21.1 498.6,21.4 498.0,21.6 497.4,20.9 496.8,21.0 496.2,22.2 495.6,20.8 495.0,20.7 494.4,21.0 493.8,21.0 493.2,21.0 492.6,21.1 492.0,21.2 491.4,20.9 490.8,21.3 490.2,22.1 489.6,21.3 489.0,21.3 488.4,22.5 487.8,21.9 487.2,21.5 486.6,21.3 486.0,21.9 485.4,22.6 484.8,21.8 484.2,21.1 483.6,21.6 483.0,21.9 482.4,21.2 481.8,21.8 481.2,22.7 480.6,22.3 480.0,21.3 479.4,23.0 478.8,21.8 478.2,20.7 477.6,20.7 477.0,20.7 476.4,20.7 475.8,20.7 475.2,20.7 474.6,20.7 474.0,20.7 473.4,20.7 472.8,20.7 472.2,20.7 471.6,20.7 471.0,20.7 470.4,20.7 469.8,20.7 469.2,20.7 468.6,20.7 468.0,20.7 467.4,20.7 466.8,20.7 466.2,20.7 465.6,20.7 465.0,20.7 464.4,20.7 463.8,20.7 463.2,20.7 462.6,20.7 462.0,20.7 461.4,20.7 460.8,20.7 460.2,20.7 459.6,20.7 459.0,20.7 458.4,20.7 457.8,20.7 457.2,20.7 456.6,20.7 456.0,20.7 455.4,20.7 454.8,20.7 454.2,20.7 453.6,20.7 453.0,20.7 452.4,20.7 451.8,20.7 451.2,20.7 450.6,20.7 450.0,20.7 449.4,20.7 448.8,20.7 448.2,20.7 447.6,20.7 447.0,20.7 446.4,20.7 445.8,20.7 445.2,20.7 444.6,20.7 444.0,20.7 443.4,20.7 442.8,20.7 442.2,20.7 441.6,20.7 441.0,20.7 440.4,20.7 439.8,20.7 439.2,20.7 438.6,20.7 438.0,20.7 437.4,20.7 436.8,20.7 436.2,20.7 435.6,20.7 435.0,20.7 434.4,20.7 433.8,20.7 433.2,20.7 432.6,20.7 432.0,20.7 431.4,20.7 430.8,20.7 430.2,20.7 429.6,20.7 429.0,20.7 428.4,20.7 427.8,20.7 427.2,20.7 426.6,20.7 426.0,20.7 425.4,20.7 424.8,20.7 424.2,20.7 423.6,20.7 423.0,20.7 422.4,20.7 421.8,20.7 421.2,20.7 420.6,20.7 420.0,20.7 419.4,20.7 418.8,20.7 418.2,20.7 417.6,20.7 417.0,20.7 416.4,20.7 415.8,20.7 415.2,20.7 414.6,20.7 414.0,20.7 413.4,20.7 412.8,20.7 412.2,20.7 411.6,20.7 411.0,20.7 410.4,20.7 409.8,20.7 409.2,20.7 408.6,20.7 408.0,21.2 407.4,21.9 406.8,21.9 406.2,22.3 405.6,23.7 405.0,20.9 404.4,21.4 403.8,21.8 403.2,21.1 402.6,20.7 402.0,20.7 401.4,20.7 400.8,20.9 400.2,21.3 399.6,21.6 399.0,21.9 398.4,22.1 397.8,21.8 397.2,21.1 396.6,22.1 396.0,21.1 395.4,21.7 394.8,22.4 394.2,21.6 393.6,22.0 393.0,21.8 392.4,21.9 391.8,22.7 391.2,21.2 390.6,21.2 390.0,22.2 389.4,22.0 388.8,21.0 388.2,20.7 387.6,20.7 387.0,20.7 386.4,20.7 385.8,20.7 385.2,20.7 384.6,20.7 384.0,20.8 383.4,20.7 382.8,21.2 382.2,21.4 381.6,21.7 381.0,22.1 380.4,22.0 379.8,21.3 379.2,21.7 378.6,21.5 378.0,21.4 377.4,22.2 376.8,23.1 376.2,21.8 375.6,21.7 375.0,22.1 374.4,21.4 373.8,21.5 373.2,21.7 372.6,21.8 372.0,22.5 371.4,21.9 370.8,21.0 370.2,21.4 369.6,21.5 369.0,21.0 368.4,21.4 367.8,21.5 367.2,21.0 366.6,20.8 366.0,21.0 365.4,21.8 364.8,21.3 364.2,21.8 363.6,21.8 363.0,21.2 362.4,21.9 361.8,21.1 361.2,21.1 360.6,22.0 360.0,21.6 359.4,23.0 358.8,21.3 358.2,21.0 357.6,21.2 357.0,21.6 356.4,21.4 355.8,21.9 355.2,23.4 354.6,21.0 354.0,21.9 353.4,21.7 352.8,21.0 352.2,21.8 351.6,22.2 351.0,21.3 350.4,20.7 349.8,20.8 349.2,21.0 348.6,21.5 348.0,21.2 347.4,21.7 346.8,21.5 346.2,21.5 345.6,21.7 345.0,21.4 344.4,22.3 343.8,22.7 343.2,21.3 342.6,22.4 342.0,21.8 341.4,21.6 340.8,22.4 340.2,21.3 339.6,21.4 339.0,21.9 338.4,22.8 337.8,21.1 337.2,21.9 336.6,22.5 336.0,21.5 335.4,22.0 334.8,21.8 334.2,21.1 333.6,22.2 333.0,21.8 332.4,20.8 331.8,20.7 331.2,20.7 330.6,20.7 330.0,20.7 329.4,20.7 328.8,20.7 328.2,20.9 327.6,21.2 327.0,21.4 326.4,22.6 325.8,21.0 325.2,21.2 324.6,22.5 324.0,21.8 323.4,22.2 322.8,22.2 322.2,23.1 321.6,22.5 321.0,21.7 320.4,22.9 319.8,21.1 319.2,20.7 318.6,20.7 318.0,20.7 317.4,20.7 316.8,21.4 316.2,21.5 315.6,21.2 315.0,21.4 314.4,21.3 313.8,21.5 313.2,21.7 312.6,22.2 312.0,21.4 311.4,22.1 310.8,22.1 310.2,21.8 309.6,22.3 309.0,21.5 308.4,21.7 307.8,21.6 307.2,22.0 306.6,21.8 306.0,21.6 305.4,21.3 304.8,21.3 304.2,22.2 303.6,20.8 303.0,20.7 302.4,20.9 301.8,21.0 301.2,21.6 300.6,22.2 300.0,21.9 299.4,22.6 298.8,20.9 298.2,21.7 297.6,21.5 297.0,21.8 296.4,21.0 295.8,20.8 295.2,21.1 294.6,21.9 294.0,21.4 293.4,21.5 292.8,22.0 292.2,21.8 291.6,22.4 291.0,21.4 290.4,21.6 289.8,22.3 289.2,21.0 288.6,20.7 288.0,20.7 287.4,20.7 286.8,20.7 286.2,20.7 285.6,20.7 285.0,21.2 284.4,21.2 283.8,21.0 283.2,21.2 282.6,21.4 282.0,22.3 281.4,20.9 280.8,21.2 280.2,21.3 279.6,21.4 279.0,22.1 278.4,21.7 277.8,21.7 277.2,22.6 276.6,22.2 276.0,20.8 275.4,20.7 274.8,20.7 274.2,20.7 273.6,20.7 273.0,20.8 272.4,21.0 271.8,20.9 271.2,21.5 270.6,21.4 270.0,21.1 269.4,21.4 268.8,21.6 268.2,21.2 267.6,21.7 267.0,21.6 266.4,22.2 265.8,20.8 265.2,21.5 264.6,21.8 264.0,22.8 263.4,22.2 262.8,22.5 262.2,23.0 261.6,22.4 261.0,22.6 260.4,22.5 259.8,22.2 259.2,22.6 258.6,22.1 258.0,21.7 257.4,22.8 256.8,21.9 256.2,22.5 255.6,22.3 255.0,22.8 254.4,22.7 253.8,21.8 253.2,22.1 252.6,22.1 252.0,21.8 251.4,21.8 250.8,22.5 250.2,21.8 249.6,22.3 249.0,22.0 248.4,22.6 247.8,22.7 247.2,22.3 246.6,22.2 246.0,21.8 245.4,22.4 244.8,22.8 244.2,21.9 243.6,22.6 243.0,22.3 242.4,22.7 241.8,20.7 241.2,20.8 240.6,20.8 240.0,21.2 239.4,21.3 238.8,22.3 238.2,21.6 237.6,21.2 237.0,21.8 236.4,22.1 235.8,22.2 235.2,21.7 234.6,21.5 234.0,21.7 233.4,21.8 232.8,21.2 232.2,20.9 231.6,21.3 231.0,22.5 230.4,21.2 229.8,21.3 229.2,20.8 228.6,20.7 228.0,20.7 227.4,20.7 226.8,20.7 226.2,20.7 225.6,20.7 225.0,20.7 224.4,20.9 223.8,20.9 223.2,21.3 222.6,22.6 222.0,22.2 221.4,21.7 220.8,22.3 220.2,21.4 219.6,21.5 219.0,22.5 218.4,21.6 217.8,21.6 217.2,21.9 216.6,21.2 216.0,22.4 215.4,23.4 214.8,21.5 214.2,21.2 213.6,21.6 213.0,23.0 212.4,20.8 211.8,21.3 211.2,21.7 210.6,22.2 210.0,21.3 209.4,21.1 208.8,21.7 208.2,21.1 207.6,20.9 207.0,21.2 206.4,22.0 205.8,21.0 205.2,21.2 204.6,22.1 204.0,22.5 203.4,21.0 202.8,21.9 202.2,22.9 201.6,21.3 201.0,21.3 200.4,21.7 199.8,21.9 199.2,22.1 198.6,21.6 198.0,20.8 197.4,20.7 196.8,20.7 196.2,20.7 195.6,20.7 195.0,20.7 194.4,20.8 193.8,20.9 193.2,21.8 192.6,22.6 192.0,21.3 191.4,21.9 190.8,22.2 190.2,21.1 189.6,21.0 189.0,21.3 188.4,22.1 187.8,21.1 187.2,21.6 186.6,21.5 186.0,22.0 185.4,21.5 184.8,22.4 184.2,22.0 183.6,20.9 183.0,21.1 182.4,21.2 181.8,21.0 181.2,20.7 180.6,20.7 180.0,20.7 179.4,20.8 178.8,20.9 178.2,21.5 177.6,22.3 177.0,21.0 176.4,21.8 175.8,21.9 175.2,21.3 174.6,21.4 174.0,22.4 173.4,21.3 172.8,21.9 172.2,21.3 171.6,21.0 171.0,21.2 170.4,22.3 169.8,22.6 169.2,22.0 168.6,20.9 168.0,20.7 167.4,20.7 166.8,20.7 166.2,20.7 165.6,20.7 165.0,20.7 164.4,20.8 163.8,20.8 163.2,21.3 162.6,21.6 162.0,21.8 161.4,21.0 160.8,21.4 160.2,21.6 159.6,21.4 159.0,22.1 158.4,21.8 157.8,21.8 157.2,21.5 156.6,22.7 156.0,21.9 155.4,21.6 154.8,22.1 154.2,21.3 153.6,20.7 153.0,20.9 152.4,21.9 151.8,20.8 151.2,21.0 150.6,22.3 150.0,21.4 149.4,21.7 148.8,22.1 148.2,20.9 147.6,20.7 147.0,20.7 146.4,20.7 145.8,20.7 145.2,20.7 144.6,20.7 144.0,20.7 143.4,20.7 142.8,20.7 142.2,20.7 141.6,20.7 141.0,20.7 140.4,20.7 139.8,20.7 139.2,20.7 138.6,20.7 138.0,20.7 137.4,20.7 136.8,20.7 136.2,20.7 135.6,20.7 135.0,20.7 134.4,20.7 133.8,20.7 133.2,20.7 132.6,20.7 132.0,20.7 131.4,20.7 130.8,20.7 130.2,20.7 129.6,20.7 129.0,20.7 128.4,20.7 127.8,20.7 127.2,20.7 126.6,20.7 126.0,20.7 125.4,20.7 124.8,20.7 124.2,20.7 123.6,20.7 123.0,20.7 122.4,20.7 121.8,20.7 121.2,20.7 120.6,20.7 120.0,20.7 119.4,20.7 118.8,20.7 118.2,20.7 117.6,20.7 117.0,20.7 116.4,20.7 115.8,20.7 115.2,20.7 114.6,20.7 114.0,20.7 113.4,20.7 112.8,20.7 112.2,20.7 111.6,20.7 111.0,20.7 110.4,20.7 109.8,20.7 109.2,20.7 108.6,20.7 108.0,20.7 107.4,20.7 106.8,20.7 106.2,20.7 105.6,20.7 105.0,20.7 104.4,20.7 103.8,20.7 103.2,20.7 102.6,20.7 102.0,20.7 101.4,20.7 100.8,20.7 100.2,20.7 99.6,20.7 99.0,20.7 98.4,20.7 97.8,20.7 97.2,20.7 96.6,20.7 96.0,20.7 95.4,20.7 94.8,20.7 94.2,20.7 93.6,20.7 93.0,20.7 92.4,20.7 91.8,20.7 91.2,20.7 90.6,20.7 90.0,20.7 89.4,20.7 88.8,20.7 88.2,20.7 87.6,20.7 87.0,20.7 86.4,20.7 85.8,20.7 85.2,20.7 84.6,20.7 84.0,20.7 83.4,20.7 82.8,20.7 82.2,20.7 81.6,20.7 81.0,20.7 80.4,20.7 79.8,20.7 79.2,20.7 78.6,20.7 78.0,20.7 77.4,20.7 76.8,20.7 76.2,20.7 75.6,20.7 75.0,20.7 74.4,20.7 73.8,20.7 73.2,20.7 72.6,20.7 72.0,20.7 71.4,20.7 70.8,20.7 70.2,20.7 69.6,20.7 69.0,20.7 68.4,20.7 67.8,20.7 67.2,20.7 66.6,20.7 66.0,20.7 65.4,20.7 64.8,20.7 64.2,20.7 63.6,20.7 63.0,20.7 62.4,20.7 61.8,20.7 61.2,20.7 60.6,20.7 60.0,20.7 59.4,20.7 58.8,20.7 58.2,20.7 57.6,20.7 57.0,20.7 56.4,20.7 55.8,20.7 55.2,20.7 54.6,20.7 54.0,20.7 53.4,20.7 52.8,20.7 52.2,20.7 51.6,20.7 51.0,20.7 50.4,20.7 49.8,20.7 49.2,20.7 48.6,20.7 48.0,20.7 47.4,20.7 46.8,20.7 46.2,20.7 45.6,20.7 45.0,20.7 44.4,20.7 43.8,20.7 43.2,20.7 42.6,20.7 42.0,20.7 41.4,20.7 40.8,20.7 40.2,20.7 39.6,20.7 39.0,20.7 38.4,20.7 37.8,20.7 37.2,20.7 36.6,20.7 36.0,20.7 35.4,20.7 34.8,20.7 34.2,20.7 33.6,20.7 33.0,20.7 32.4,20.7 31.8,20.7 31.2,20.7 30.6,20.7 30.0,20.7 29.4,20.7 28.8,20.7 28.2,20.7 27.6,20.7 27.0,20.7 26.4,20.7 25.8,20.7 25.2,20.7 24.6,20.7 24.0,20.7 23.4,20.7 22.8,20.7 22.2,20.7 21.6,20.7 21.0,20.7 20.4,20.7 19.8,20.7 19.2,20.7 18.6,20.7 18.0,20.7 17.4,20.7 16.8,20.7 16.2,20.7 15.6,20.7 15.0,20.7 14.4,20.7 13.8,20.7 13.2,20.7 12.6,20.7 12.0,20.7 11.4,20.7 10.8,20.7 10.2,20.7 9.6,20.7 9.0,20.7 8.4,20.7 7.8,20.7 7.2,20.7 6.6,20.7 6.0,20.7 5.4,20.7 4.8,20.7 4.2,20.7 3.6,20.7 3.0,20.7 2.4,20.7 1.8,20.7 1.2,20.7 0.6,20.7 0.0,20.7Z" fill="#0c7d97"/></svg>
<div class="abs" style="left:246.0px;top:316.8px;width:724.4px;height:40.8px;border-radius:3.5px;background:#22d2f7"></div>
<svg style="left:246.0px;top:316.8px" width="724.4" height="40.8" viewBox="0 0 724.4 40.8"><path d="M0 20.4H724.4" stroke="#0c7d97" stroke-width="0.7" fill="none"/><path d="M0.0,20.1 0.6,20.1 1.1,20.1 1.7,20.1 2.2,20.1 2.8,20.1 3.3,20.1 3.9,20.1 4.4,20.2 5.0,20.2 5.5,20.1 6.1,20.1 6.6,20.1 7.2,20.1 7.7,20.1 8.2,15.8 8.8,17.8 9.4,16.9 9.9,18.8 10.5,20.1 11.0,15.6 11.6,17.9 12.1,18.1 12.7,16.4 13.2,18.2 13.8,17.2 14.3,18.0 14.9,19.0 15.4,20.2 16.0,13.1 16.5,17.7 17.1,18.3 17.6,17.3 18.2,17.8 18.7,18.7 19.2,18.1 19.8,20.1 20.4,13.7 20.9,18.1 21.5,16.7 22.0,17.7 22.6,18.2 23.1,18.6 23.7,16.2 24.2,17.5 24.8,18.2 25.3,18.1 25.9,19.0 26.4,19.3 27.0,20.1 27.5,15.0 28.1,18.1 28.6,17.0 29.2,13.0 29.7,20.2 30.3,16.2 30.8,17.3 31.4,18.9 31.9,17.9 32.5,17.8 33.0,18.0 33.6,18.6 34.1,18.0 34.7,18.9 35.2,19.6 35.8,20.2 36.3,20.1 36.9,15.2 37.4,16.5 38.0,17.7 38.5,18.1 39.1,17.8 39.6,18.2 40.2,20.1 40.7,16.2 41.2,18.2 41.8,16.9 42.4,17.3 42.9,15.7 43.5,18.6 44.0,20.1 44.6,20.1 45.1,12.9 45.7,17.3 46.2,16.6 46.8,16.6 47.3,17.3 47.9,17.6 48.4,17.8 49.0,15.4 49.5,20.1 50.1,16.0 50.6,15.9 51.2,17.4 51.7,17.0 52.3,18.4 52.8,20.2 53.4,12.6 53.9,14.1 54.5,16.9 55.0,18.2 55.6,18.0 56.1,18.1 56.7,18.6 57.2,18.9 57.8,20.1 58.3,20.1 58.9,20.1 59.4,14.0 60.0,17.1 60.5,17.3 61.1,17.6 61.6,16.2 62.2,16.0 62.7,15.1 63.3,17.7 63.8,19.1 64.4,20.2 64.9,17.5 65.5,16.3 66.0,18.0 66.6,17.1 67.1,16.8 67.7,17.0 68.2,18.0 68.8,16.4 69.3,18.2 69.9,17.9 70.4,19.2 71.0,20.1 71.5,20.1 72.1,20.2 72.6,16.0 73.2,18.0 73.7,15.7 74.2,17.4 74.8,17.7 75.4,17.8 75.9,17.6 76.5,18.3 77.0,17.7 77.6,18.7 78.1,20.1 78.7,20.1 79.2,20.1 79.8,12.9 80.3,18.4 80.9,17.5 81.4,17.1 82.0,19.1 82.5,20.2 83.1,20.1 83.6,20.1 84.2,15.6 84.7,18.0 85.2,17.8 85.8,16.9 86.4,17.9 86.9,17.7 87.5,17.8 88.0,18.4 88.6,19.0 89.1,20.1 89.7,13.0 90.2,18.4 90.8,17.7 91.3,18.1 91.9,16.1 92.4,17.3 93.0,16.2 93.5,17.0 94.1,18.4 94.6,18.4 95.2,20.1 95.7,14.4 96.3,16.0 96.8,17.3 97.4,17.5 97.9,17.3 98.5,17.4 99.0,18.5 99.6,18.5 100.1,20.1 100.7,16.5 101.2,16.7 101.8,17.2 102.3,17.8 102.9,17.8 103.4,18.2 104.0,17.3 104.5,18.1 105.1,18.0 105.6,18.9 106.2,20.1 106.7,14.9 107.3,17.8 107.8,16.3 108.4,17.6 108.9,17.3 109.5,18.1 110.0,18.0 110.6,18.4 111.1,18.0 111.7,18.7 112.2,20.1 112.8,13.8 113.3,14.7 113.9,16.7 114.4,15.1 115.0,16.1 115.5,15.6 116.1,18.2 116.6,20.2 117.2,20.1 117.7,20.1 118.3,13.1 118.8,16.7 119.4,16.6 119.9,17.5 120.5,15.9 121.0,15.3 121.6,16.5 122.1,17.4 122.7,20.2 123.2,20.1 123.8,20.1 124.3,13.8 124.9,15.9 125.4,17.0 126.0,15.5 126.5,16.9 127.1,17.2 127.6,13.7 128.2,17.0 128.7,17.0 129.2,18.9 129.8,20.1 130.4,15.0 130.9,16.9 131.5,16.6 132.0,17.2 132.6,16.0 133.1,15.2 133.7,15.4 134.2,17.2 134.8,18.4 135.3,20.1 135.9,14.5 136.4,11.8 137.0,17.2 137.5,16.7 138.1,16.5 138.6,20.1 139.2,16.3 139.7,17.5 140.2,18.1 140.8,13.0 141.4,17.7 141.9,20.1 142.5,15.0 143.0,15.8 143.6,17.9 144.1,16.7 144.7,16.6 145.2,17.2 145.8,17.5 146.3,18.7 146.9,20.1 147.4,15.0 148.0,17.2 148.5,15.8 149.1,15.9 149.6,17.4 150.2,17.8 150.7,17.3 151.2,18.1 151.8,20.1 152.4,12.0 152.9,15.7 153.5,17.6 154.0,17.5 154.6,18.1 155.1,17.6 155.7,17.3 156.2,15.6 156.8,17.6 157.3,17.7 157.9,20.1 158.4,20.1 159.0,20.1 159.5,16.0 160.1,17.8 160.6,16.5 161.2,16.5 161.7,14.8 162.2,19.0 162.8,20.1 163.4,13.9 163.9,17.3 164.5,16.9 165.0,16.5 165.6,17.6 166.1,17.6 166.7,17.5 167.2,16.7 167.8,17.8 168.3,18.6 168.9,20.1 169.4,15.1 170.0,17.7 170.5,17.2 171.1,16.3 171.6,16.0 172.2,17.1 172.7,17.8 173.2,20.1 173.8,14.2 174.4,15.3 174.9,16.2 175.5,17.4 176.0,17.0 176.6,17.5 177.1,18.2 177.7,20.1 178.2,15.4 178.8,16.3 179.3,17.1 179.9,17.4 180.4,16.1 181.0,17.9 181.5,18.1 182.1,17.5 182.6,17.0 183.2,18.4 183.7,17.7 184.3,20.1 184.8,15.9 185.4,17.6 185.9,18.3 186.5,17.7 187.0,17.9 187.6,17.4 188.1,18.5 188.7,20.1 189.2,15.1 189.8,18.5 190.3,17.1 190.9,19.1 191.4,20.1 192.0,12.2 192.5,17.7 193.1,18.0 193.6,17.8 194.2,17.8 194.7,17.7 195.3,15.3 195.8,20.1 196.4,20.1 196.9,20.1 197.5,16.1 198.0,15.4 198.6,18.8 199.1,17.8 199.7,19.5 200.2,20.1 200.8,12.7 201.3,18.4 201.9,17.6 202.4,16.0 203.0,18.6 203.5,20.2 204.1,15.6 204.6,16.3 205.2,17.5 205.7,16.6 206.3,17.4 206.8,16.7 207.4,18.3 207.9,17.8 208.5,16.8 209.0,18.2 209.6,20.1 210.1,15.5 210.7,17.5 211.2,18.7 211.8,18.2 212.3,18.7 212.9,17.1 213.4,16.9 214.0,16.1 214.5,17.1 215.1,17.4 215.6,19.3 216.2,19.2 216.7,20.1 217.3,20.1 217.8,13.2 218.4,18.2 218.9,15.2 219.5,16.5 220.0,18.5 220.6,20.2 221.1,11.0 221.7,17.2 222.2,16.1 222.8,18.2 223.3,18.1 223.9,12.7 224.4,18.5 225.0,19.0 225.5,20.1 226.1,16.2 226.6,18.5 227.2,18.0 227.7,16.8 228.3,17.7 228.8,18.0 229.4,18.3 229.9,18.8 230.5,20.1 231.0,13.0 231.6,18.0 232.1,18.5 232.7,17.8 233.2,18.7 233.8,20.1 234.3,15.4 234.9,18.0 235.4,18.9 236.0,18.8 236.5,17.6 237.1,18.0 237.6,20.1 238.2,20.1 238.7,20.1 239.3,14.0 239.8,15.4 240.4,17.5 240.9,16.6 241.5,16.3 242.0,16.8 242.6,18.4 243.1,18.9 243.7,15.0 244.2,14.8 244.8,16.9 245.3,17.8 245.9,17.7 246.4,17.8 247.0,15.8 247.5,17.2 248.1,17.3 248.6,20.1 249.2,20.1 249.7,20.2 250.3,14.5 250.8,17.5 251.4,15.4 251.9,12.9 252.5,20.1 253.0,13.9 253.6,15.9 254.1,14.4 254.7,15.5 255.2,16.3 255.8,17.4 256.3,18.1 256.9,20.1 257.4,11.4 258.0,16.2 258.5,17.1 259.1,15.6 259.6,16.3 260.2,15.8 260.7,17.2 261.2,16.2 261.8,18.0 262.4,20.1 262.9,15.4 263.5,15.8 264.0,14.8 264.6,17.0 265.1,14.8 265.7,18.0 266.2,20.2 266.8,14.6 267.3,18.1 267.9,11.7 268.4,18.0 269.0,20.1 269.5,14.0 270.1,17.4 270.6,17.3 271.2,17.2 271.7,17.1 272.2,18.5 272.8,17.6 273.4,18.1 273.9,17.2 274.5,17.6 275.0,18.0 275.6,19.5 276.1,20.2 276.7,16.1 277.2,16.3 277.8,16.3 278.3,17.9 278.9,14.2 279.4,15.7 280.0,17.1 280.5,18.4 281.1,18.7 281.6,20.1 282.2,15.7 282.7,16.0 283.2,17.1 283.8,17.7 284.4,17.2 284.9,16.8 285.5,18.2 286.0,17.0 286.6,17.4 287.1,18.2 287.7,18.6 288.2,20.2 288.8,14.8 289.3,17.2 289.9,17.8 290.4,18.0 291.0,16.5 291.5,17.7 292.1,20.1 292.6,20.1 293.2,20.1 293.7,15.0 294.2,17.1 294.8,15.8 295.4,17.9 295.9,16.8 296.5,18.6 297.0,17.2 297.6,18.3 298.1,19.1 298.7,19.6 299.2,20.2 299.8,12.9 300.3,17.3 300.9,18.5 301.4,18.4 302.0,18.6 302.5,18.5 303.1,20.1 303.6,12.6 304.2,16.8 304.7,16.9 305.2,15.8 305.8,19.4 306.4,15.8 306.9,17.3 307.5,17.2 308.0,17.0 308.6,12.7 309.1,17.7 309.7,15.1 310.2,16.7 310.8,16.3 311.3,16.9 311.9,18.0 312.4,17.6 313.0,20.1 313.5,14.1 314.1,16.9 314.6,17.7 315.2,16.7 315.7,15.7 316.2,16.5 316.8,16.0 317.4,17.2 317.9,18.9 318.5,20.1 319.0,16.4 319.6,17.3 320.1,18.5 320.7,18.6 321.2,18.2 321.8,18.4 322.3,18.1 322.9,18.4 323.4,18.4 324.0,18.7 324.5,19.3 325.1,20.1 325.6,15.3 326.2,17.7 326.7,17.2 327.2,19.1 327.8,19.2 328.4,20.1 328.9,20.1 329.5,16.2 330.0,16.9 330.6,17.6 331.1,16.9 331.7,16.8 332.2,17.3 332.8,18.5 333.3,20.1 333.9,11.9 334.4,16.5 335.0,18.5 335.5,17.8 336.1,17.8 336.6,17.2 337.2,17.7 337.7,18.5 338.2,20.2 338.8,16.1 339.4,17.6 339.9,18.1 340.5,17.5 341.0,18.6 341.6,20.2 342.1,13.1 342.7,17.2 343.2,16.8 343.8,18.1 344.3,16.8 344.9,18.0 345.4,20.1 346.0,13.6 346.5,17.1 347.1,18.3 347.6,17.3 348.2,16.3 348.7,18.4 349.2,14.1 349.8,12.1 350.4,18.2 350.9,18.1 351.5,13.2 352.0,19.0 352.6,20.1 353.1,20.1 353.7,20.2 354.2,15.7 354.8,17.6 355.3,16.2 355.9,17.3 356.4,17.6 357.0,18.4 357.5,20.1 358.1,20.2 358.6,15.0 359.2,17.0 359.7,18.2 360.3,18.1 360.8,17.1 361.4,17.4 361.9,18.6 362.5,20.2 363.0,20.1 363.6,20.1 364.1,14.9 364.7,17.1 365.2,17.3 365.8,18.7 366.3,17.9 366.9,17.4 367.4,19.2 368.0,16.2 368.5,18.3 369.1,17.1 369.6,16.9 370.2,16.7 370.7,16.8 371.3,17.7 371.8,19.2 372.4,15.6 372.9,16.4 373.5,17.3 374.0,16.2 374.6,16.4 375.1,16.6 375.7,17.5 376.2,17.2 376.8,18.0 377.3,20.1 377.9,14.0 378.4,17.5 379.0,18.3 379.5,17.4 380.1,15.7 380.6,16.8 381.2,17.1 381.7,17.8 382.3,16.8 382.8,14.9 383.4,18.6 383.9,20.1 384.5,17.9 385.0,18.9 385.6,16.9 386.1,17.8 386.7,18.0 387.2,18.4 387.8,18.8 388.3,18.1 388.9,17.9 389.4,19.2 390.0,20.1 390.5,15.1 391.1,16.7 391.6,17.9 392.2,17.9 392.7,18.5 393.3,20.1 393.8,12.6 394.4,17.0 394.9,16.8 395.5,18.4 396.0,17.4 396.6,18.5 397.1,20.1 397.7,20.1 398.2,20.2 398.8,15.9 399.3,18.0 399.9,17.2 400.4,18.0 401.0,20.1 401.5,16.1 402.1,17.9 402.6,18.3 403.2,18.7 403.7,18.1 404.3,18.3 404.8,17.5 405.4,18.3 405.9,16.3 406.5,20.1 407.0,20.1 407.6,20.1 408.1,15.6 408.7,16.3 409.2,16.5 409.8,17.4 410.3,16.6 410.9,17.9 411.4,19.0 412.0,20.1 412.5,16.2 413.1,18.2 413.6,17.1 414.2,17.9 414.7,17.2 415.3,18.4 415.8,15.0 416.4,17.5 416.9,19.1 417.5,18.9 418.0,20.1 418.6,20.1 419.1,15.2 419.7,17.6 420.2,17.8 420.8,17.1 421.3,18.3 421.9,17.4 422.4,17.4 423.0,20.2 423.5,20.2 424.1,20.2 424.6,16.5 425.2,18.2 425.7,17.6 426.3,18.2 426.8,14.5 427.4,20.1 427.9,20.1 428.5,20.1 429.0,17.7 429.6,16.3 430.1,17.3 430.7,18.5 431.2,20.1 431.8,15.9 432.3,16.6 432.9,15.6 433.4,16.7 434.0,16.0 434.5,15.6 435.1,17.0 435.6,17.1 436.2,18.3 436.7,18.5 437.3,20.1 437.8,12.3 438.4,18.6 438.9,18.1 439.5,16.7 440.0,17.2 440.6,19.3 441.1,20.1 441.7,15.2 442.2,16.8 442.8,16.1 443.3,18.6 443.9,18.2 444.4,16.0 445.0,13.6 445.5,17.4 446.1,18.6 446.6,18.7 447.2,18.5 447.7,17.7 448.3,19.1 448.8,19.6 449.4,20.1 449.9,16.7 450.5,15.9 451.0,18.2 451.6,16.4 452.1,17.6 452.7,17.4 453.2,17.7 453.8,15.8 454.3,17.1 454.9,17.9 455.4,18.3 456.0,19.2 456.5,16.1 457.1,17.7 457.6,18.5 458.2,18.2 458.7,17.6 459.3,17.4 459.8,17.2 460.4,17.7 460.9,18.5 461.5,18.3 462.0,18.1 462.6,20.1 463.1,20.1 463.7,20.2 464.2,15.5 464.8,17.0 465.3,18.3 465.9,17.3 466.4,17.6 467.0,17.0 467.5,17.5 468.1,16.9 468.6,18.6 469.2,20.2 469.7,20.1 470.3,20.1 470.8,15.0 471.4,18.0 471.9,18.3 472.5,18.3 473.0,16.5 473.6,17.6 474.1,16.9 474.7,19.2 475.2,20.1 475.8,15.1 476.3,15.3 476.9,17.0 477.4,16.7 478.0,18.2 478.5,16.8 479.1,18.8 479.6,18.8 480.2,20.2 480.7,20.1 481.3,20.1 481.8,18.0 482.4,17.4 482.9,17.3 483.5,16.3 484.0,17.0 484.6,18.2 485.1,15.7 485.7,17.8 486.2,18.4 486.8,15.2 487.3,20.1 487.9,16.7 488.4,17.7 489.0,17.7 489.5,16.7 490.1,17.7 490.6,20.2 491.2,14.1 491.7,16.9 492.3,17.6 492.8,16.9 493.4,16.5 493.9,17.2 494.5,17.3 495.0,18.5 495.6,20.1 496.1,16.2 496.7,17.2 497.2,12.8 497.8,16.9 498.3,17.0 498.9,18.4 499.4,20.2 500.0,15.8 500.5,18.2 501.1,17.8 501.6,16.8 502.2,17.0 502.7,16.9 503.3,18.3 503.8,20.1 504.4,14.8 504.9,17.6 505.5,15.8 506.0,17.1 506.6,17.7 507.1,15.2 507.7,17.9 508.2,16.8 508.8,16.6 509.3,18.4 509.9,18.5 510.4,20.1 511.0,15.6 511.5,17.2 512.1,17.3 512.6,17.3 513.2,20.1 513.7,10.9 514.2,15.9 514.8,17.0 515.4,15.6 515.9,17.0 516.5,16.2 517.0,18.5 517.6,18.7 518.1,20.1 518.7,16.1 519.2,16.0 519.8,17.0 520.3,15.7 520.9,16.8 521.4,18.5 522.0,20.1 522.5,12.7 523.1,18.2 523.6,17.9 524.2,16.2 524.7,17.7 525.2,16.4 525.8,16.2 526.4,17.0 526.9,18.4 527.5,20.1 528.0,15.9 528.6,17.2 529.1,16.7 529.7,17.0 530.2,12.8 530.8,18.3 531.3,20.1 531.9,12.7 532.4,17.5 533.0,15.9 533.5,17.9 534.1,17.3 534.6,20.1 535.2,20.1 535.7,20.1 536.2,14.7 536.8,18.1 537.4,18.4 537.9,18.1 538.5,18.1 539.0,18.8 539.6,17.6 540.1,17.8 540.7,18.2 541.2,18.4 541.8,19.1 542.3,20.1 542.9,15.2 543.4,16.9 544.0,18.2 544.5,17.6 545.1,20.1 545.6,20.1 546.2,20.2 546.7,16.1 547.2,17.7 547.8,15.6 548.4,17.5 548.9,20.1 549.5,16.4 550.0,18.2 550.6,18.5 551.1,18.2 551.7,18.7 552.2,17.7 552.8,17.2 553.3,16.8 553.9,18.0 554.4,17.7 555.0,18.7 555.5,19.0 556.1,20.1 556.6,15.1 557.2,18.1 557.7,17.7 558.2,18.4 558.8,18.6 559.4,17.8 559.9,20.1 560.5,20.1 561.0,20.1 561.6,14.0 562.1,17.8 562.7,17.5 563.2,16.3 563.8,16.4 564.3,16.4 564.9,17.6 565.4,18.1 566.0,16.3 566.5,18.2 567.1,19.1 567.6,20.1 568.2,12.2 568.7,17.9 569.2,15.8 569.8,17.0 570.4,18.4 570.9,20.1 571.5,20.2 572.0,20.1 572.6,16.4 573.1,16.3 573.7,17.4 574.2,17.8 574.8,16.9 575.3,17.4 575.9,18.0 576.4,17.0 577.0,13.3 577.5,18.1 578.1,17.5 578.6,16.6 579.2,19.5 579.7,20.1 580.2,20.2 580.8,15.2 581.4,18.2 581.9,17.1 582.5,17.1 583.0,16.8 583.6,17.8 584.1,17.7 584.7,18.0 585.2,18.9 585.8,18.5 586.3,20.1 586.9,15.4 587.4,18.1 588.0,16.3 588.5,14.0 589.1,20.1 589.6,15.3 590.2,17.6 590.7,17.8 591.2,17.9 591.8,17.6 592.4,19.0 592.9,19.0 593.5,13.0 594.0,16.9 594.6,17.6 595.1,17.5 595.7,17.0 596.2,17.7 596.8,16.7 597.3,20.1 597.9,15.3 598.4,17.1 599.0,17.5 599.5,17.1 600.1,16.7 600.6,18.1 601.2,17.7 601.7,18.3 602.2,19.1 602.8,20.1 603.4,15.8 603.9,18.1 604.5,16.9 605.0,18.8 605.6,20.1 606.1,15.2 606.7,17.3 607.2,17.0 607.8,17.5 608.3,16.9 608.9,13.0 609.4,18.5 610.0,20.1 610.5,14.4 611.1,17.6 611.6,16.9 612.2,18.8 612.7,19.0 613.2,19.0 613.8,20.1 614.4,20.1 614.9,20.1 615.5,15.2 616.0,17.0 616.6,17.1 617.1,16.5 617.7,16.8 618.2,18.4 618.8,20.2 619.3,15.8 619.9,16.8 620.4,17.2 621.0,18.2 621.5,15.9 622.1,19.3 622.6,20.1 623.2,12.4 623.7,17.8 624.2,18.3 624.8,18.4 625.4,17.7 625.9,17.4 626.5,17.7 627.0,17.2 627.6,18.4 628.1,19.3 628.7,19.5 629.2,20.1 629.8,15.5 630.3,17.8 630.9,18.2 631.4,18.5 632.0,18.7 632.5,17.8 633.1,17.8 633.6,16.6 634.2,18.9 634.7,20.1 635.2,15.1 635.8,18.6 636.4,18.3 636.9,13.8 637.5,18.5 638.0,18.1 638.6,18.3 639.1,18.5 639.7,18.0 640.2,18.4 640.8,18.8 641.3,19.2 641.9,20.1 642.4,15.8 643.0,16.8 643.5,15.4 644.1,16.8 644.6,17.1 645.2,16.6 645.7,18.2 646.2,18.8 646.8,18.9 647.4,20.1 647.9,14.9 648.5,17.6 649.0,17.4 649.6,15.1 650.1,15.5 650.7,16.0 651.2,15.3 651.8,16.2 652.3,17.4 652.9,17.3 653.4,18.6 654.0,20.1 654.5,14.2 655.1,13.9 655.6,15.1 656.2,16.0 656.7,18.3 657.2,12.7 657.8,17.8 658.4,17.3 658.9,16.1 659.5,17.6 660.0,15.5 660.6,17.0 661.1,20.2 661.7,13.0 662.2,15.9 662.8,16.9 663.3,16.7 663.9,16.7 664.4,16.4 665.0,17.7 665.5,17.0 666.1,17.7 666.6,18.4 667.2,20.2 667.7,14.8 668.2,17.9 668.8,15.3 669.4,16.2 669.9,14.5 670.5,15.6 671.0,16.7 671.6,18.4 672.1,20.1 672.7,10.6 673.2,18.0 673.8,16.8 674.3,16.2 674.9,19.4 675.4,16.9 676.0,15.8 676.5,16.8 677.1,15.2 677.6,17.0 678.2,16.6 678.7,16.6 679.2,17.2 679.8,16.7 680.4,17.5 680.9,16.7 681.5,16.6 682.0,17.2 682.6,16.7 683.1,16.6 683.7,17.7 684.2,16.7 684.8,16.9 685.3,17.8 685.9,17.4 686.4,16.9 687.0,17.2 687.5,18.0 688.1,17.7 688.6,18.0 689.2,18.2 689.7,18.5 690.2,18.3 690.8,17.7 691.4,18.3 691.9,18.6 692.5,18.5 693.0,18.1 693.6,18.6 694.1,18.6 694.7,18.3 695.2,18.4 695.8,18.5 696.3,18.2 696.9,18.8 697.4,18.8 698.0,18.4 698.5,18.4 699.1,19.0 699.6,18.4 700.2,18.6 700.7,18.9 701.2,19.0 701.8,19.1 702.4,18.8 702.9,19.0 703.5,18.9 704.0,19.0 704.6,19.3 705.1,19.1 705.7,19.3 706.2,19.4 706.8,19.5 707.3,19.3 707.9,19.4 708.4,19.7 709.0,19.5 709.5,19.4 710.1,19.5 710.6,19.6 711.2,19.6 711.7,19.9 712.3,19.7 712.8,19.9 713.4,19.9 713.9,20.0 714.5,19.9 715.0,20.0 715.6,20.0 716.1,20.0 716.7,20.1 717.2,20.1 717.8,20.1 718.3,20.1 718.9,20.1 719.4,20.1 720.0,20.1 720.5,20.1 721.1,20.1 721.6,20.2 722.2,20.1 722.7,20.2 723.3,20.2 723.8,20.2 724.4,20.1 724.4,20.8 723.8,20.8 723.3,20.8 722.7,20.8 722.2,20.8 721.6,20.8 721.1,20.8 720.5,20.8 720.0,20.9 719.4,20.8 718.9,20.9 718.3,20.9 717.8,20.8 717.2,20.8 716.7,20.9 716.1,20.9 715.6,20.9 715.0,21.0 714.5,21.1 713.9,21.2 713.4,21.1 712.8,21.3 712.3,21.3 711.7,21.4 711.2,21.5 710.6,21.6 710.1,21.6 709.5,21.7 709.0,21.6 708.4,21.8 707.9,21.7 707.3,22.0 706.8,21.8 706.2,22.0 705.7,22.1 705.1,22.3 704.6,22.0 704.0,22.1 703.5,22.5 702.9,22.3 702.4,22.7 701.8,22.4 701.2,22.5 700.7,22.3 700.2,22.4 699.6,22.6 699.1,22.7 698.5,22.7 698.0,22.5 697.4,22.8 696.9,23.6 696.3,23.3 695.8,22.8 695.2,23.3 694.7,23.2 694.1,23.5 693.6,24.0 693.0,23.7 692.5,23.8 691.9,23.8 691.4,23.9 690.8,24.0 690.2,23.5 689.7,23.5 689.2,23.6 688.6,24.5 688.1,24.5 687.5,24.2 687.0,23.7 686.4,24.8 685.9,25.0 685.3,25.1 684.8,24.7 684.2,24.4 683.7,25.2 683.1,24.9 682.6,25.0 682.0,26.0 681.5,25.8 680.9,25.3 680.4,26.0 679.8,25.3 679.2,24.9 678.7,24.8 678.2,26.1 677.6,25.5 677.1,26.5 676.5,26.7 676.0,27.5 675.4,25.4 674.9,22.2 674.3,25.1 673.8,24.6 673.2,24.1 672.7,33.8 672.1,20.8 671.6,23.4 671.0,25.4 670.5,27.1 669.9,27.7 669.4,27.6 668.8,28.3 668.2,24.2 667.7,28.4 667.2,20.8 666.6,23.5 666.1,24.2 665.5,24.8 665.0,25.9 664.4,25.4 663.9,25.2 663.3,24.2 662.8,24.9 662.2,28.7 661.7,30.9 661.1,20.9 660.6,25.5 660.0,26.8 659.5,24.8 658.9,27.1 658.4,25.2 657.8,24.7 657.2,29.5 656.7,23.4 656.2,26.0 655.6,26.5 655.1,29.4 654.5,30.8 654.0,20.8 653.4,23.0 652.9,24.6 652.3,26.3 651.8,26.9 651.2,25.6 650.7,26.7 650.1,27.3 649.6,26.9 649.0,23.9 648.5,25.0 647.9,28.8 647.4,20.8 646.8,22.3 646.2,22.7 645.7,24.2 645.2,25.5 644.6,25.1 644.1,26.6 643.5,28.0 643.0,24.9 642.4,26.3 641.9,20.9 641.3,21.8 640.8,23.3 640.2,23.6 639.7,23.9 639.1,23.6 638.6,23.3 638.0,23.4 637.5,23.9 636.9,30.1 636.4,23.6 635.8,23.7 635.2,27.8 634.7,20.8 634.2,22.8 633.6,25.0 633.1,23.8 632.5,24.4 632.0,22.9 631.4,24.2 630.9,24.2 630.3,23.8 629.8,28.7 629.2,20.8 628.7,21.5 628.1,22.2 627.6,24.4 627.0,24.8 626.5,24.0 625.9,23.9 625.4,24.2 624.8,23.0 624.2,23.1 623.7,24.3 623.2,29.3 622.6,20.8 622.1,22.2 621.5,25.1 621.0,23.9 620.4,23.7 619.9,24.9 619.3,27.1 618.8,20.9 618.2,24.3 617.7,25.5 617.1,24.4 616.6,24.0 616.0,25.0 615.5,27.7 614.9,20.8 614.4,20.8 613.8,20.8 613.2,22.9 612.7,22.6 612.2,22.7 611.6,24.9 611.1,24.3 610.5,28.0 610.0,20.8 609.4,23.1 608.9,29.0 608.3,25.4 607.8,24.8 607.2,24.5 606.7,23.9 606.1,27.7 605.6,20.8 605.0,22.4 604.5,26.4 603.9,24.2 603.4,27.6 602.8,20.8 602.2,22.4 601.7,23.1 601.2,24.9 600.6,23.6 600.1,26.2 599.5,24.8 599.0,24.3 598.4,24.7 597.9,27.3 597.3,20.8 596.8,25.9 596.2,24.0 595.7,24.2 595.1,23.5 594.6,24.8 594.0,24.5 593.5,30.1 592.9,22.4 592.4,22.7 591.8,23.9 591.2,23.6 590.7,23.2 590.2,24.4 589.6,25.6 589.1,20.8 588.5,28.3 588.0,25.5 587.4,23.9 586.9,25.8 586.3,20.8 585.8,22.9 585.2,22.7 584.7,23.8 584.1,23.7 583.6,24.3 583.0,25.5 582.5,24.8 581.9,26.0 581.4,23.9 580.8,29.6 580.2,20.9 579.7,20.8 579.2,21.6 578.6,25.6 578.1,24.8 577.5,24.1 577.0,28.3 576.4,25.0 575.9,23.0 575.3,23.7 574.8,25.1 574.2,24.1 573.7,25.7 573.1,25.4 572.6,24.8 572.0,20.8 571.5,20.8 570.9,20.8 570.4,23.0 569.8,27.1 569.2,25.7 568.7,24.8 568.2,32.4 567.6,20.9 567.1,22.5 566.5,23.3 566.0,25.2 565.4,24.1 564.9,24.5 564.3,25.8 563.8,24.9 563.2,26.2 562.7,25.3 562.1,23.7 561.6,28.1 561.0,20.8 560.5,20.9 559.9,20.8 559.4,24.0 558.8,23.6 558.2,23.3 557.7,24.4 557.2,24.2 556.6,28.5 556.1,20.8 555.5,22.4 555.0,22.6 554.4,24.4 553.9,23.5 553.3,25.1 552.8,25.1 552.2,24.8 551.7,23.5 551.1,23.2 550.6,23.6 550.0,23.5 549.5,24.8 548.9,20.9 548.4,25.1 547.8,26.3 547.2,24.1 546.7,26.9 546.2,20.8 545.6,20.9 545.1,20.8 544.5,24.9 544.0,23.9 543.4,25.8 542.9,26.3 542.3,20.9 541.8,21.8 541.2,23.6 540.7,23.8 540.1,24.4 539.6,24.4 539.0,22.9 538.5,24.2 537.9,23.5 537.4,23.4 536.8,23.5 536.2,27.8 535.7,20.8 535.2,20.9 534.6,20.9 534.1,24.6 533.5,24.2 533.0,26.8 532.4,24.5 531.9,28.5 531.3,20.8 530.8,23.3 530.2,32.1 529.7,24.8 529.1,25.3 528.6,24.9 528.0,27.7 527.5,20.8 526.9,23.3 526.4,25.0 525.8,26.3 525.2,27.0 524.7,24.9 524.2,26.2 523.6,24.7 523.1,25.0 522.5,30.5 522.0,20.8 521.4,22.9 520.9,25.5 520.3,28.4 519.8,26.3 519.2,27.4 518.7,28.1 518.1,20.8 517.6,22.9 517.0,23.2 516.5,24.7 515.9,24.8 515.4,26.6 514.8,25.7 514.2,28.9 513.7,32.2 513.2,20.9 512.6,24.5 512.1,24.6 511.5,25.1 511.0,27.5 510.4,20.9 509.9,23.0 509.3,23.3 508.8,25.1 508.2,25.8 507.7,24.0 507.1,29.9 506.6,24.3 506.0,24.2 505.5,26.3 504.9,24.7 504.4,30.2 503.8,20.8 503.3,23.7 502.7,25.1 502.2,24.7 501.6,25.3 501.1,23.9 500.5,22.9 500.0,28.4 499.4,20.8 498.9,22.8 498.3,25.5 497.8,24.6 497.2,29.5 496.7,25.7 496.1,28.3 495.6,20.8 495.0,23.3 494.5,24.9 493.9,24.1 493.4,25.7 492.8,26.1 492.3,24.2 491.7,26.1 491.2,27.6 490.6,20.8 490.1,24.5 489.5,25.0 489.0,23.4 488.4,24.0 487.9,25.7 487.3,20.9 486.8,29.5 486.2,23.5 485.7,25.1 485.1,26.2 484.6,23.7 484.0,26.0 483.5,27.1 482.9,24.2 482.4,24.9 481.8,24.9 481.3,20.8 480.7,20.8 480.2,20.8 479.6,22.2 479.1,22.9 478.5,27.1 478.0,23.9 477.4,24.1 476.9,25.9 476.3,28.3 475.8,28.6 475.2,20.9 474.7,22.6 474.1,24.4 473.6,24.6 473.0,26.0 472.5,23.0 471.9,23.4 471.4,23.6 470.8,30.1 470.3,20.8 469.7,20.8 469.2,20.8 468.6,23.2 468.1,25.7 467.5,25.1 467.0,25.8 466.4,24.3 465.9,24.7 465.3,24.1 464.8,25.6 464.2,27.5 463.7,20.8 463.1,20.9 462.6,20.8 462.0,23.1 461.5,23.1 460.9,23.2 460.4,23.2 459.8,24.0 459.3,24.6 458.7,23.8 458.2,23.2 457.6,23.2 457.1,23.7 456.5,27.4 456.0,22.7 455.4,24.1 454.9,24.1 454.3,24.3 453.8,25.5 453.2,24.5 452.7,24.9 452.1,24.5 451.6,25.8 451.0,24.4 450.5,27.2 449.9,26.1 449.4,20.8 448.8,21.8 448.3,22.4 447.7,24.4 447.2,22.9 446.6,23.5 446.1,22.6 445.5,25.1 445.0,29.0 444.4,25.5 443.9,24.1 443.3,23.8 442.8,25.1 442.2,26.0 441.7,28.6 441.1,20.8 440.6,22.0 440.0,24.8 439.5,24.5 438.9,23.5 438.4,23.2 437.8,29.5 437.3,20.8 436.7,23.3 436.2,24.0 435.6,25.8 435.1,25.1 434.5,25.6 434.0,26.5 433.4,26.0 432.9,25.4 432.3,25.6 431.8,28.0 431.2,20.8 430.7,23.7 430.1,25.4 429.6,25.4 429.0,24.6 428.5,20.8 427.9,20.8 427.4,20.8 426.8,30.2 426.3,23.9 425.7,24.4 425.2,23.3 424.6,26.4 424.1,20.8 423.5,20.8 423.0,20.8 422.4,24.0 421.9,25.1 421.3,24.0 420.8,25.5 420.2,24.5 419.7,24.2 419.1,28.1 418.6,20.8 418.0,20.8 417.5,22.1 416.9,22.6 416.4,24.2 415.8,27.9 415.3,23.1 414.7,23.8 414.2,23.4 413.6,24.2 413.1,24.4 412.5,26.3 412.0,20.8 411.4,22.8 410.9,24.1 410.3,26.1 409.8,24.1 409.2,24.9 408.7,26.4 408.1,28.9 407.6,20.8 407.0,20.8 406.5,20.9 405.9,26.9 405.4,23.2 404.8,25.1 404.3,23.4 403.7,23.5 403.2,23.5 402.6,23.4 402.1,25.0 401.5,26.0 401.0,20.8 400.4,23.1 399.9,25.5 399.3,23.6 398.8,27.4 398.2,20.8 397.7,20.9 397.1,20.8 396.6,23.7 396.0,23.8 395.5,24.3 394.9,24.6 394.4,24.2 393.8,30.2 393.3,20.8 392.7,23.9 392.2,23.4 391.6,23.3 391.1,24.9 390.5,28.9 390.0,20.9 389.4,22.2 388.9,23.5 388.3,23.8 387.8,23.3 387.2,23.8 386.7,24.6 386.1,23.1 385.6,24.1 385.0,23.0 384.5,24.4 383.9,20.9 383.4,22.5 382.8,29.2 382.3,25.4 381.7,24.3 381.2,25.1 380.6,24.2 380.1,26.4 379.5,24.5 379.0,23.9 378.4,26.0 377.9,32.8 377.3,20.8 376.8,24.4 376.2,25.3 375.7,25.8 375.1,25.8 374.6,26.0 374.0,25.6 373.5,24.8 372.9,26.1 372.4,28.5 371.8,22.0 371.3,23.6 370.7,25.4 370.2,26.1 369.6,25.0 369.1,25.2 368.5,23.8 368.0,26.5 367.4,22.2 366.9,23.9 366.3,25.0 365.8,23.4 365.2,24.6 364.7,24.6 364.1,26.6 363.6,20.8 363.0,20.8 362.5,20.8 361.9,23.5 361.4,24.0 360.8,25.3 360.3,24.1 359.7,23.3 359.2,24.4 358.6,28.3 358.1,20.8 357.5,20.9 357.0,22.9 356.4,25.5 355.9,25.7 355.3,26.4 354.8,24.8 354.2,28.6 353.7,20.9 353.1,20.8 352.6,20.8 352.0,22.6 351.5,30.9 350.9,24.1 350.4,24.2 349.8,30.1 349.2,27.2 348.7,23.1 348.2,25.3 347.6,24.7 347.1,24.3 346.5,24.6 346.0,30.1 345.4,20.8 344.9,23.9 344.3,25.5 343.8,23.0 343.2,24.9 342.7,25.0 342.1,28.1 341.6,20.8 341.0,22.8 340.5,24.2 339.9,24.1 339.4,23.4 338.8,29.1 338.2,20.8 337.7,22.4 337.2,24.5 336.6,25.4 336.1,23.5 335.5,24.8 335.0,23.9 334.4,26.0 333.9,32.6 333.3,20.8 332.8,22.6 332.2,24.7 331.7,24.8 331.1,25.1 330.6,23.8 330.0,24.0 329.5,26.9 328.9,20.8 328.4,20.8 327.8,22.1 327.2,22.4 326.7,24.5 326.2,23.4 325.6,26.2 325.1,20.8 324.5,22.0 324.0,22.7 323.4,22.9 322.9,22.9 322.3,23.1 321.8,23.2 321.2,23.5 320.7,22.9 320.1,22.9 319.6,23.9 319.0,26.4 318.5,20.9 317.9,22.1 317.4,24.7 316.8,25.2 316.2,25.6 315.7,26.7 315.2,25.0 314.6,25.8 314.1,24.8 313.5,28.8 313.0,20.9 312.4,23.5 311.9,24.9 311.3,26.8 310.8,27.3 310.2,26.0 309.7,26.8 309.1,24.6 308.6,31.5 308.0,24.7 307.5,25.2 306.9,25.1 306.4,28.6 305.8,22.3 305.2,26.8 304.7,24.7 304.2,26.9 303.6,31.2 303.1,20.8 302.5,22.8 302.0,23.6 301.4,23.8 300.9,23.0 300.3,24.4 299.8,29.2 299.2,20.8 298.7,21.7 298.1,22.5 297.6,22.8 297.0,23.7 296.5,23.2 295.9,25.0 295.4,24.7 294.8,27.5 294.2,25.3 293.7,27.0 293.2,20.8 292.6,20.8 292.1,20.8 291.5,23.9 291.0,25.7 290.4,24.3 289.9,24.4 289.3,25.2 288.8,26.6 288.2,20.9 287.7,23.4 287.1,23.6 286.6,23.9 286.0,25.1 285.5,23.7 284.9,24.9 284.4,24.5 283.8,23.9 283.2,25.1 282.7,26.4 282.2,27.0 281.6,20.8 281.1,23.1 280.5,23.5 280.0,26.2 279.4,25.6 278.9,27.1 278.3,24.2 277.8,26.4 277.2,25.3 276.7,27.1 276.1,20.8 275.6,21.8 275.0,23.6 274.5,23.6 273.9,24.7 273.4,24.2 272.8,24.6 272.2,22.8 271.7,24.2 271.2,24.8 270.6,24.7 270.1,24.1 269.5,29.7 269.0,20.8 268.4,24.3 267.9,31.9 267.3,24.2 266.8,29.2 266.2,20.8 265.7,23.4 265.1,27.1 264.6,24.5 264.0,28.2 263.5,26.1 262.9,27.7 262.4,20.8 261.8,24.3 261.2,26.7 260.7,25.7 260.2,27.0 259.6,25.0 259.1,27.2 258.5,26.0 258.0,25.9 257.4,32.1 256.9,20.8 256.3,23.9 255.8,25.1 255.2,26.5 254.7,27.7 254.1,27.4 253.6,25.1 253.0,28.1 252.5,20.8 251.9,29.5 251.4,28.1 250.8,24.7 250.3,27.1 249.7,20.8 249.2,20.8 248.6,20.8 248.1,25.1 247.5,25.5 247.0,27.1 246.4,25.0 245.9,25.3 245.3,24.2 244.8,26.9 244.2,26.7 243.7,27.2 243.1,22.4 242.6,23.4 242.0,27.0 241.5,26.6 240.9,25.4 240.4,25.4 239.8,27.2 239.3,31.2 238.7,20.8 238.2,20.9 237.6,20.8 237.1,24.5 236.5,25.3 236.0,22.8 235.4,23.1 234.9,23.9 234.3,30.1 233.8,20.8 233.2,22.4 232.7,24.8 232.1,23.7 231.6,23.5 231.0,30.6 230.5,20.8 229.9,22.3 229.4,23.5 228.8,23.2 228.3,25.7 227.7,25.0 227.2,24.8 226.6,23.6 226.1,26.8 225.5,20.8 225.0,22.3 224.4,23.0 223.9,30.4 223.3,24.5 222.8,23.8 222.2,26.7 221.7,25.3 221.1,33.2 220.6,20.9 220.0,23.9 219.5,25.3 218.9,29.4 218.4,24.3 217.8,30.0 217.3,20.9 216.7,20.8 216.2,21.8 215.6,22.3 215.1,24.4 214.5,25.2 214.0,26.5 213.4,25.3 212.9,25.0 212.3,22.8 211.8,23.3 211.2,23.0 210.7,25.6 210.1,29.1 209.6,20.8 209.0,23.5 208.5,25.2 207.9,23.7 207.4,22.9 206.8,25.6 206.3,24.5 205.7,24.8 205.2,23.3 204.6,25.3 204.1,27.1 203.5,20.8 203.0,22.6 202.4,25.2 201.9,25.4 201.3,23.9 200.8,28.8 200.2,20.8 199.7,21.5 199.1,24.0 198.6,23.1 198.0,27.5 197.5,28.5 196.9,20.8 196.4,20.8 195.8,20.9 195.3,29.0 194.7,24.7 194.2,24.7 193.6,23.5 193.1,23.3 192.5,24.7 192.0,31.0 191.4,20.8 190.9,22.8 190.3,24.4 189.8,23.9 189.2,27.8 188.7,20.8 188.1,22.7 187.6,25.5 187.0,23.9 186.5,25.4 185.9,23.9 185.4,23.5 184.8,26.4 184.3,20.8 183.7,23.4 183.2,24.1 182.6,24.6 182.1,24.7 181.5,24.6 181.0,24.0 180.4,27.0 179.9,26.2 179.3,25.2 178.8,26.9 178.2,28.3 177.7,20.8 177.1,24.3 176.6,25.7 176.0,26.4 175.5,25.4 174.9,26.0 174.4,26.0 173.8,31.2 173.2,20.8 172.7,25.0 172.2,25.9 171.6,27.2 171.1,25.9 170.5,24.6 170.0,23.7 169.4,27.5 168.9,20.8 168.3,22.6 167.8,23.5 167.2,24.3 166.7,23.9 166.1,25.4 165.6,24.5 165.0,26.0 164.5,25.3 163.9,24.7 163.4,33.2 162.8,20.8 162.2,22.7 161.7,27.9 161.2,26.3 160.6,24.5 160.1,25.5 159.5,27.5 159.0,20.8 158.4,20.8 157.9,20.9 157.3,24.3 156.8,24.6 156.2,25.5 155.7,24.8 155.1,25.8 154.6,23.9 154.0,24.6 153.5,24.9 152.9,26.2 152.4,30.2 151.8,20.8 151.2,23.5 150.7,24.9 150.2,24.8 149.6,25.8 149.1,27.3 148.5,27.2 148.0,25.7 147.4,30.0 146.9,20.8 146.3,22.8 145.8,24.3 145.2,25.8 144.7,25.0 144.1,25.4 143.6,24.7 143.0,27.1 142.5,29.1 141.9,20.8 141.4,24.7 140.8,32.5 140.2,23.7 139.7,24.3 139.2,25.3 138.6,20.8 138.1,25.2 137.5,24.6 137.0,25.4 136.4,33.4 135.9,29.5 135.3,20.9 134.8,23.1 134.2,26.2 133.7,26.3 133.1,26.2 132.6,26.2 132.0,24.7 131.5,24.7 130.9,26.3 130.4,26.7 129.8,20.9 129.2,22.6 128.7,25.6 128.2,24.8 127.6,28.2 127.1,24.0 126.5,23.9 126.0,27.5 125.4,26.0 124.9,26.5 124.3,29.5 123.8,20.8 123.2,20.8 122.7,20.8 122.1,25.4 121.6,24.8 121.0,27.2 120.5,26.6 119.9,25.2 119.4,26.2 118.8,25.6 118.3,28.6 117.7,20.8 117.2,20.8 116.6,20.8 116.1,24.1 115.5,26.6 115.0,25.6 114.4,26.4 113.9,24.5 113.3,26.7 112.8,27.4 112.2,20.9 111.7,22.9 111.1,24.1 110.6,24.1 110.0,23.4 109.5,22.9 108.9,26.1 108.4,24.2 107.8,25.6 107.3,24.4 106.7,28.5 106.2,20.8 105.6,22.8 105.1,24.3 104.5,24.6 104.0,25.2 103.4,24.4 102.9,24.8 102.3,24.3 101.8,25.1 101.2,25.7 100.7,25.1 100.1,20.9 99.6,22.9 99.0,23.6 98.5,26.0 97.9,24.2 97.4,24.2 96.8,24.3 96.3,27.2 95.7,28.2 95.2,20.9 94.6,22.8 94.1,22.9 93.5,23.9 93.0,25.7 92.4,24.0 91.9,25.6 91.3,24.1 90.8,24.3 90.2,23.8 89.7,30.4 89.1,20.9 88.6,22.7 88.0,23.3 87.5,25.1 86.9,24.7 86.4,24.5 85.8,25.5 85.2,25.2 84.7,24.6 84.2,27.9 83.6,20.8 83.1,20.8 82.5,20.8 82.0,22.8 81.4,24.3 80.9,23.7 80.3,23.8 79.8,28.8 79.2,20.9 78.7,20.8 78.1,20.8 77.6,23.5 77.0,24.0 76.5,24.4 75.9,24.3 75.4,23.9 74.8,23.5 74.2,24.5 73.7,27.9 73.2,24.1 72.6,27.4 72.1,20.8 71.5,20.9 71.0,20.8 70.4,22.0 69.9,24.0 69.3,23.2 68.8,25.7 68.2,23.5 67.7,24.9 67.1,25.4 66.6,25.5 66.0,23.3 65.5,26.2 64.9,25.4 64.4,20.9 63.8,21.8 63.3,24.4 62.7,26.8 62.2,26.1 61.6,27.2 61.1,24.0 60.5,25.0 60.0,25.8 59.4,28.6 58.9,20.8 58.3,20.8 57.8,20.8 57.2,22.7 56.7,22.9 56.1,23.7 55.6,23.2 55.0,22.9 54.5,24.9 53.9,29.6 53.4,30.2 52.8,20.8 52.3,23.5 51.7,26.5 51.2,24.4 50.6,25.2 50.1,27.4 49.5,20.8 49.0,28.4 48.4,24.4 47.9,24.1 47.3,23.7 46.8,26.4 46.2,26.0 45.7,23.6 45.1,32.8 44.6,20.8 44.0,20.8 43.5,22.3 42.9,26.3 42.4,24.3 41.8,27.5 41.2,24.4 40.7,27.8 40.2,20.8 39.6,23.3 39.1,24.6 38.5,25.0 38.0,23.5 37.4,26.3 36.9,26.3 36.3,20.8 35.8,20.8 35.2,21.6 34.7,23.0 34.1,24.1 33.6,23.1 33.0,23.9 32.5,24.4 31.9,23.7 31.4,23.1 30.8,23.8 30.3,25.5 29.7,20.8 29.2,31.2 28.6,27.1 28.1,23.5 27.5,27.6 27.0,20.8 26.4,22.0 25.9,22.4 25.3,23.2 24.8,24.1 24.2,24.9 23.7,25.4 23.1,23.3 22.6,24.2 22.0,23.6 21.5,24.9 20.9,23.2 20.4,28.9 19.8,20.8 19.2,23.0 18.7,23.3 18.2,24.6 17.6,24.4 17.1,24.6 16.5,24.3 16.0,30.7 15.4,20.8 14.9,22.7 14.3,24.3 13.8,24.6 13.2,23.9 12.7,25.4 12.1,22.9 11.6,24.3 11.0,27.2 10.5,20.8 9.9,22.9 9.4,25.3 8.8,24.8 8.2,26.3 7.7,20.8 7.2,20.9 6.6,20.9 6.1,20.9 5.5,20.8 5.0,20.8 4.4,20.8 3.9,20.8 3.3,20.8 2.8,20.8 2.2,20.9 1.7,20.8 1.1,20.8 0.6,20.8 0.0,20.8Z" fill="#0c7d97"/><path d="M8.0,13.8V26.6M10.7,16.5V26.7M13.9,15.2V24.4M17.1,14.2V24.8M19.7,12.9V24.8M22.7,14.1V24.9M24.2,13.1V25.4M26.3,14.3V25.8M27.4,15.9V26.0M30.1,14.5V25.8M31.7,13.8V24.7M34.4,14.9V26.3M36.3,16.1V24.6M38.8,15.8V24.0M40.3,13.2V27.0M42.7,15.3V27.5M44.4,14.4V24.0M46.9,13.0V27.0M48.2,14.5V25.3M51.3,16.8V24.0M52.6,15.5V27.8M55.0,14.3V24.1M56.4,15.4V26.7M59.2,14.6V25.1M60.7,15.2V25.0M63.5,13.3V27.4M64.8,13.8V24.0M66.2,14.1V25.3M69.1,14.1V26.7M71.6,13.2V27.6M72.7,13.0V25.8M74.5,13.4V27.9M77.3,14.0V23.9M79.0,13.7V28.3M80.7,13.9V24.4M83.4,15.5V24.2M84.9,14.6V26.0M87.5,15.5V26.5M89.5,13.8V23.9M91.9,14.5V24.2M94.7,14.4V28.1M96.2,15.2V27.7M99.3,14.2V25.5M102.1,15.1V26.3M104.7,13.2V23.9M107.3,13.2V25.5M108.9,14.6V24.0M111.8,14.9V26.8M114.6,16.8V24.7M116.6,14.5V25.5M118.3,16.8V25.8M121.5,16.8V26.5M123.1,13.0V27.4M124.6,13.0V25.3M127.3,15.9V25.2M128.5,15.7V25.7M129.7,16.9V23.9M132.7,15.2V27.9M134.8,14.7V25.5M137.7,15.5V27.5M139.6,16.4V25.7M140.8,15.4V25.6M143.4,12.9V24.6M145.9,13.6V26.9M147.5,15.2V28.0M149.7,14.2V25.3M152.6,14.7V27.4M154.3,16.0V24.7M156.7,16.6V25.4M159.3,15.8V25.0M160.9,15.0V27.2M162.6,14.8V28.3M164.8,15.8V27.6M167.9,13.9V25.3M170.1,15.6V28.0M171.2,13.4V25.1M172.6,13.5V27.4M173.8,15.7V24.3M176.5,13.3V25.2M178.4,16.8V24.3M179.7,14.0V24.8M181.8,15.8V26.2M184.1,15.5V25.1M187.2,13.2V26.0M189.2,14.8V26.3M192.4,15.2V25.4M195.6,14.3V24.5M197.9,13.6V26.4M199.6,15.4V27.1M201.9,16.8V25.3M204.6,16.7V25.7M206.9,15.7V26.9M208.2,13.2V27.2M211.2,14.8V25.9M213.0,16.5V26.2M214.8,13.4V24.6M216.0,13.7V28.2M218.0,13.4V27.1M220.8,14.5V26.1M223.3,13.7V28.1M226.4,14.0V28.0M227.6,16.9V25.0M228.7,14.7V24.8M231.7,16.5V27.3M232.9,13.1V25.5M234.6,15.6V27.0M237.6,14.2V24.5M239.6,15.0V25.1M242.7,14.1V27.0M244.4,14.8V24.9M246.2,13.8V25.0M248.8,15.9V27.4M250.2,13.4V24.1M251.8,14.3V25.5M253.3,16.3V26.2M255.0,13.3V27.2M257.2,14.3V24.9M259.3,13.7V27.9M260.7,15.6V27.3M262.4,15.5V24.3M265.4,16.5V26.9M266.7,15.8V28.0M268.0,13.8V24.9M270.9,15.6V26.3M273.8,16.5V25.6M276.9,15.8V26.4M280.0,14.1V27.9M282.3,14.2V24.2M285.5,15.2V26.3M287.8,15.6V28.1M290.3,14.8V24.6M293.0,14.3V28.1M295.4,15.6V26.7M296.8,16.0V26.4M299.3,13.0V24.1M302.4,15.3V24.0M304.3,14.5V25.5M306.2,13.6V25.8M309.4,15.9V24.3M311.6,14.0V25.4M313.2,14.7V27.5M315.6,14.5V25.6M318.1,13.9V24.2M321.4,15.2V25.9M323.6,14.0V26.0M326.0,15.7V25.0M328.2,16.4V24.1M330.9,16.3V26.6M334.0,13.6V24.4M336.1,14.7V25.4M338.1,13.1V24.6M341.0,13.8V24.7M342.9,14.8V27.9M344.0,13.3V24.1M345.8,16.9V28.2M349.0,15.2V27.0M350.2,14.7V25.4M352.5,15.7V26.8M354.7,14.9V26.1M356.6,14.9V27.1M359.0,16.4V26.8M360.6,14.3V27.2M363.1,13.7V25.7M366.4,13.4V26.2M368.1,13.2V26.4M369.6,15.3V24.4M371.7,15.8V24.6M374.5,15.6V28.1M377.1,15.4V25.2M378.5,15.5V26.3M379.7,14.6V24.8M381.1,16.3V25.2M383.6,15.9V26.9M385.8,15.5V28.1M388.9,16.1V26.0M391.3,15.5V25.5M394.5,14.5V28.0M396.3,14.3V26.3M399.2,16.0V24.1M402.1,13.3V24.1M405.1,15.0V24.2M406.7,16.2V26.2M410.0,15.3V26.9M411.8,16.4V28.2M414.8,16.5V25.0M417.1,13.9V25.3M418.3,15.8V26.4M421.3,16.8V27.0M423.8,15.6V25.9M425.0,14.9V27.3M426.8,14.7V26.9M428.1,15.2V25.2M429.7,14.5V24.1M432.0,14.0V24.8M433.1,13.4V27.7M435.0,13.5V24.9M436.5,14.1V24.5M438.4,14.3V25.1M439.5,13.3V25.3M441.2,14.8V27.6M443.2,14.8V27.3M446.4,14.4V27.5M448.1,16.0V24.4M449.8,16.0V27.5M453.0,16.5V26.8M456.2,13.2V24.8M458.6,14.2V24.0M459.9,14.0V26.1M462.5,16.5V24.8M465.3,15.4V26.1M468.1,16.6V24.4M470.3,14.3V25.4M472.6,13.9V27.7M474.2,14.0V24.8M476.4,13.9V25.3M478.8,15.8V26.6M481.0,15.2V24.5M482.9,13.8V24.7M485.8,13.6V28.0M488.0,14.9V26.0M490.3,13.4V26.4M492.7,13.8V25.3M493.8,13.2V25.6M496.0,15.0V27.0M497.6,15.9V24.9M500.3,15.2V28.3M503.3,13.0V24.8M504.9,13.9V26.7M506.6,15.3V24.0M509.9,16.5V27.4M512.0,14.0V24.2M514.3,15.0V27.0M515.7,13.2V28.3M517.2,16.6V26.3M519.3,14.3V28.2M522.0,14.0V27.8M524.4,15.6V24.5M526.1,14.5V24.9M527.8,14.1V27.4M529.5,13.1V27.3M531.4,15.0V24.5M534.2,13.2V27.4M535.5,13.1V25.4M538.0,15.7V25.4M539.7,16.9V26.4M541.9,14.3V25.6M545.2,14.0V27.2M546.9,13.2V27.3M549.6,16.7V26.2M550.7,16.2V26.9M552.7,13.6V27.5M553.9,16.0V26.9M556.0,13.4V27.7M558.9,14.2V25.0M560.8,16.9V26.9M562.0,15.5V23.9M563.3,13.9V25.1M565.7,15.4V26.2M568.9,15.5V25.5M572.0,15.2V27.4M574.9,16.0V25.0M577.7,14.1V25.5M579.3,16.1V27.3M582.0,15.6V24.6M584.6,15.0V26.5M586.5,15.7V25.4M588.7,14.3V24.0M589.9,15.1V27.4M592.1,13.1V24.8M594.2,13.1V27.7M595.6,15.1V25.1M597.4,13.1V26.4M599.5,15.6V27.6M601.7,13.2V27.4M604.8,16.6V25.8M607.7,15.1V27.9M609.8,13.9V24.2M612.5,15.2V28.1M615.3,13.8V26.9M618.5,16.6V27.1M621.6,16.5V26.2M623.4,14.4V24.8M625.4,14.5V24.5M628.1,16.3V24.0M630.5,14.9V26.1M632.2,14.1V27.8M635.0,14.0V23.9M638.0,16.5V27.8M640.0,14.4V24.5M641.2,14.6V25.9M643.0,14.4V27.1M644.6,13.6V26.0M647.9,14.3V27.8M649.4,15.1V24.0M651.7,13.6V27.6M654.6,14.5V28.0M657.2,14.8V24.7M659.8,13.1V24.3M661.7,13.5V26.6M664.1,14.9V23.9M666.5,14.6V27.5M668.9,14.5V26.6M670.4,15.1V27.3M671.8,13.5V27.8M673.6,15.6V28.1M675.3,14.1V27.0" stroke="#0c7d97" stroke-width="0.6" stroke-opacity="0.85" fill="none"/></svg>
<div class="abs" style="left:246.0px;top:360.6px;width:724.4px;height:40.8px;border-radius:3.5px;background:#6fe8fd"></div>
<svg style="left:246.0px;top:360.6px" width="724.4" height="40.8" viewBox="0 0 724.4 40.8"><path d="M0 20.4H724.4" stroke="#0c7d97" stroke-width="0.7" fill="none"/><path d="M0.0,20.1 0.6,20.1 1.2,20.1 1.8,20.1 2.4,20.1 3.0,20.1 3.6,20.1 4.2,20.1 4.8,20.1 5.4,20.1 6.0,20.1 6.6,20.1 7.2,20.1 7.8,20.1 8.4,20.1 9.0,20.1 9.6,20.1 10.2,20.1 10.8,20.1 11.4,20.1 12.0,20.1 12.6,20.1 13.2,20.1 13.8,20.1 14.4,20.1 15.0,20.1 15.6,20.1 16.2,20.1 16.8,20.1 17.4,20.1 18.0,20.1 18.6,20.1 19.2,20.1 19.8,20.1 20.4,20.1 21.0,20.1 21.6,20.1 22.2,20.1 22.8,20.1 23.4,20.1 24.0,20.1 24.6,20.1 25.2,20.1 25.8,20.1 26.4,20.1 27.0,20.1 27.6,20.1 28.2,20.1 28.8,20.1 29.4,20.1 30.0,20.1 30.6,20.1 31.2,20.1 31.8,20.1 32.4,20.1 33.0,20.1 33.6,20.1 34.2,20.1 34.8,20.1 35.4,20.1 36.0,20.1 36.6,20.1 37.2,20.1 37.8,20.1 38.4,20.1 39.0,20.1 39.6,20.1 40.2,20.1 40.8,20.1 41.4,20.1 42.0,20.1 42.6,20.1 43.2,20.1 43.8,20.1 44.4,20.1 45.0,20.1 45.6,20.1 46.2,20.1 46.8,20.1 47.4,20.1 48.0,20.1 48.6,20.1 49.2,20.1 49.8,20.1 50.4,20.1 51.0,20.1 51.6,20.1 52.2,20.1 52.8,20.1 53.4,20.1 54.0,20.1 54.6,20.1 55.2,20.1 55.8,20.1 56.4,20.1 57.0,20.1 57.6,20.1 58.2,20.1 58.8,20.1 59.4,20.1 60.0,20.1 60.6,20.1 61.2,20.1 61.8,20.1 62.4,20.1 63.0,20.1 63.6,20.1 64.2,20.1 64.8,20.1 65.4,20.1 66.0,20.1 66.6,20.1 67.2,20.1 67.8,20.1 68.4,20.1 69.0,20.1 69.6,20.1 70.2,20.1 70.8,20.1 71.4,20.1 72.0,20.1 72.6,20.1 73.2,20.1 73.8,20.1 74.4,20.1 75.0,20.1 75.6,20.1 76.2,20.1 76.8,20.1 77.4,20.1 78.0,20.1 78.6,20.1 79.2,20.1 79.8,20.1 80.4,20.1 81.0,20.1 81.6,20.1 82.2,20.1 82.8,20.1 83.4,20.1 84.0,20.1 84.6,20.1 85.2,20.1 85.8,20.1 86.4,20.1 87.0,20.1 87.6,20.1 88.2,20.1 88.8,20.1 89.4,20.1 90.0,20.1 90.6,20.1 91.2,20.1 91.8,20.1 92.4,20.1 93.0,20.1 93.6,20.1 94.2,20.1 94.8,20.1 95.4,20.1 96.0,20.1 96.6,20.1 97.2,20.1 97.8,20.1 98.4,20.1 99.0,20.1 99.6,20.1 100.2,20.1 100.8,20.1 101.4,20.1 102.0,20.1 102.6,20.1 103.2,20.1 103.8,20.1 104.4,20.1 105.0,20.1 105.6,20.1 106.2,20.1 106.8,20.1 107.4,20.1 108.0,20.1 108.6,20.1 109.2,20.1 109.8,20.1 110.4,20.1 111.0,20.1 111.6,20.1 112.2,20.1 112.8,20.1 113.4,20.1 114.0,20.1 114.6,20.1 115.2,20.1 115.8,20.1 116.4,20.1 117.0,20.1 117.6,20.1 118.2,20.1 118.8,20.1 119.4,20.1 120.0,20.1 120.6,20.1 121.2,20.1 121.8,20.1 122.4,20.1 123.0,20.1 123.6,20.1 124.2,20.1 124.8,20.1 125.4,20.1 126.0,20.1 126.6,20.1 127.2,20.1 127.8,20.1 128.4,20.1 129.0,20.1 129.6,20.1 130.2,20.1 130.8,20.1 131.4,20.1 132.0,20.1 132.6,20.1 133.2,20.1 133.8,20.1 134.4,20.1 135.0,20.1 135.6,20.1 136.2,20.1 136.8,20.1 137.4,20.1 138.0,20.1 138.6,20.1 139.2,20.1 139.8,20.1 140.4,20.1 141.0,20.1 141.6,20.1 142.2,20.1 142.8,20.1 143.4,20.1 144.0,20.1 144.6,20.1 145.2,20.1 145.8,20.1 146.4,20.1 147.0,20.1 147.6,20.1 148.2,20.1 148.8,20.1 149.4,20.1 150.0,20.1 150.6,20.1 151.2,20.1 151.8,20.1 152.4,20.1 153.0,20.1 153.6,20.1 154.2,20.1 154.8,20.1 155.4,20.1 156.0,20.1 156.6,20.1 157.2,20.1 157.8,20.1 158.4,20.1 159.0,20.1 159.6,20.1 160.2,20.1 160.8,20.1 161.4,20.1 162.0,20.1 162.6,20.1 163.2,20.1 163.8,20.1 164.4,20.1 165.0,20.1 165.6,20.1 166.2,20.1 166.8,20.1 167.4,20.1 168.0,20.1 168.6,20.1 169.2,20.1 169.8,20.1 170.4,20.1 171.0,20.1 171.6,20.1 172.2,20.1 172.8,20.1 173.4,20.1 174.0,20.1 174.6,20.1 175.2,20.1 175.8,20.1 176.4,20.1 177.0,20.1 177.6,20.1 178.2,20.1 178.8,20.1 179.4,20.1 180.0,20.1 180.6,20.1 181.2,20.1 181.8,20.1 182.4,20.1 183.0,20.1 183.6,20.1 184.2,20.1 184.8,20.1 185.4,20.1 186.0,20.1 186.6,20.1 187.2,20.1 187.8,20.1 188.4,20.1 189.0,20.1 189.6,20.1 190.2,20.1 190.8,20.1 191.4,20.1 192.0,20.1 192.6,20.1 193.2,20.1 193.8,20.1 194.4,20.1 195.0,20.1 195.6,20.1 196.2,20.1 196.8,20.1 197.4,20.1 198.0,20.1 198.6,20.1 199.2,20.1 199.8,20.1 200.4,20.1 201.0,20.1 201.6,20.1 202.2,20.1 202.8,20.1 203.4,20.1 204.0,20.1 204.6,20.1 205.2,20.1 205.8,20.1 206.4,20.1 207.0,20.1 207.6,20.1 208.2,20.1 208.8,20.1 209.4,20.1 210.0,20.1 210.6,20.1 211.2,20.1 211.8,20.1 212.4,20.1 213.0,20.1 213.6,20.1 214.2,20.1 214.8,20.1 215.4,20.1 216.0,20.1 216.6,20.1 217.2,20.1 217.8,20.1 218.4,20.1 219.0,20.1 219.6,20.1 220.2,20.1 220.8,20.1 221.4,20.1 222.0,20.1 222.6,20.1 223.2,20.1 223.8,20.1 224.4,20.1 225.0,20.1 225.6,20.1 226.2,20.1 226.8,20.1 227.4,20.1 228.0,20.1 228.6,20.1 229.2,20.1 229.8,20.1 230.4,20.1 231.0,20.1 231.6,20.1 232.2,20.1 232.8,20.1 233.4,20.1 234.0,20.1 234.6,20.1 235.2,20.1 235.8,20.1 236.4,20.1 237.0,20.1 237.6,20.1 238.2,20.1 238.8,20.1 239.4,20.1 240.0,20.1 240.6,20.1 241.2,20.1 241.8,20.1 242.4,20.1 243.0,20.1 243.6,20.1 244.2,20.1 244.8,20.1 245.4,20.1 246.0,20.1 246.6,20.1 247.2,20.1 247.8,20.1 248.4,20.1 249.0,20.1 249.6,20.1 250.2,20.1 250.8,20.1 251.4,20.1 252.0,20.1 252.6,20.1 253.2,20.1 253.8,20.1 254.4,20.1 255.0,20.1 255.6,20.1 256.2,20.1 256.8,20.1 257.4,20.1 258.0,20.1 258.6,20.1 259.2,20.1 259.8,20.1 260.4,20.1 261.0,20.1 261.6,20.1 262.2,20.1 262.8,20.1 263.4,20.1 264.0,20.1 264.6,20.1 265.2,20.1 265.8,20.1 266.4,20.1 267.0,20.1 267.6,20.1 268.2,20.1 268.8,20.1 269.4,20.1 270.0,20.1 270.6,20.1 271.2,20.1 271.8,20.1 272.4,20.1 273.0,20.1 273.6,20.1 274.2,20.1 274.8,20.1 275.4,20.1 276.0,20.1 276.6,20.1 277.2,20.1 277.8,20.1 278.4,20.1 279.0,20.1 279.6,20.1 280.2,20.1 280.8,20.1 281.4,20.1 282.0,20.1 282.6,20.1 283.2,20.1 283.8,20.1 284.4,20.1 285.0,20.1 285.6,20.1 286.2,20.1 286.8,20.1 287.4,20.1 288.0,20.1 288.6,20.1 289.2,20.1 289.8,20.1 290.4,20.1 291.0,20.1 291.6,20.1 292.2,20.1 292.8,20.1 293.4,20.1 294.0,20.1 294.6,20.1 295.2,20.1 295.8,20.1 296.4,20.1 297.0,20.1 297.6,20.1 298.2,20.1 298.8,20.1 299.4,20.1 300.0,20.1 300.6,20.1 301.2,20.1 301.8,20.1 302.4,20.1 303.0,20.1 303.6,20.1 304.2,20.1 304.8,20.1 305.4,20.1 306.0,20.1 306.6,20.1 307.2,20.1 307.8,20.1 308.4,20.1 309.0,20.1 309.6,20.1 310.2,20.1 310.8,20.1 311.4,20.1 312.0,20.1 312.6,20.1 313.2,20.1 313.8,20.1 314.4,20.1 315.0,20.1 315.6,20.1 316.2,20.1 316.8,20.1 317.4,20.1 318.0,20.1 318.6,20.1 319.2,20.1 319.8,20.1 320.4,20.1 321.0,20.1 321.6,20.1 322.2,20.1 322.8,20.1 323.4,20.1 324.0,20.1 324.6,20.1 325.2,20.1 325.8,20.1 326.4,20.1 327.0,20.1 327.6,20.1 328.2,20.1 328.8,20.1 329.4,20.1 330.0,20.1 330.6,20.1 331.2,20.1 331.8,20.1 332.4,20.1 333.0,20.1 333.6,20.1 334.2,20.1 334.8,20.1 335.4,20.1 336.0,20.1 336.6,20.1 337.2,20.1 337.8,20.1 338.4,20.1 339.0,20.1 339.6,20.1 340.2,20.1 340.8,20.1 341.4,20.1 342.0,20.1 342.6,20.1 343.2,20.1 343.8,20.1 344.4,20.1 345.0,20.1 345.6,20.1 346.2,20.1 346.8,20.1 347.4,20.1 348.0,20.1 348.6,20.1 349.2,20.1 349.8,20.1 350.4,20.1 351.0,20.1 351.6,20.1 352.2,20.1 352.8,20.1 353.4,20.1 354.0,20.1 354.6,20.1 355.2,20.1 355.8,20.1 356.4,20.1 357.0,20.1 357.6,20.1 358.2,20.1 358.8,20.1 359.4,20.1 360.0,20.1 360.6,20.1 361.2,20.1 361.8,20.1 362.4,20.1 363.0,20.1 363.6,20.1 364.2,20.1 364.8,20.1 365.4,20.1 366.0,20.1 366.6,20.1 367.2,20.1 367.8,20.1 368.4,20.1 369.0,20.1 369.6,20.1 370.2,20.1 370.8,20.1 371.4,20.1 372.0,20.1 372.6,20.1 373.2,20.1 373.8,20.1 374.4,20.1 375.0,20.1 375.6,20.1 376.2,20.1 376.8,20.1 377.4,20.1 378.0,20.1 378.6,20.1 379.2,20.1 379.8,20.1 380.4,20.1 381.0,20.1 381.6,20.1 382.2,20.1 382.8,20.1 383.4,20.1 384.0,20.1 384.6,20.1 385.2,20.1 385.8,20.1 386.4,20.1 387.0,20.1 387.6,20.1 388.2,20.1 388.8,20.1 389.4,20.1 390.0,20.1 390.6,20.1 391.2,20.1 391.8,20.1 392.4,20.1 393.0,20.1 393.6,20.1 394.2,20.1 394.8,20.1 395.4,20.1 396.0,20.1 396.6,20.1 397.2,20.1 397.8,20.1 398.4,20.1 399.0,20.1 399.6,20.1 400.2,20.1 400.8,20.1 401.4,20.1 402.0,20.1 402.6,20.1 403.2,20.1 403.8,20.1 404.4,20.1 405.0,20.1 405.6,20.1 406.2,20.1 406.8,20.1 407.4,20.1 408.0,20.1 408.6,20.1 409.2,20.1 409.8,20.1 410.4,20.1 411.0,20.1 411.6,20.1 412.2,20.1 412.8,20.1 413.4,20.1 414.0,20.1 414.6,20.1 415.2,20.1 415.8,20.1 416.4,20.1 417.0,20.1 417.6,20.1 418.2,20.1 418.8,20.1 419.4,20.1 420.0,20.1 420.6,20.1 421.2,20.1 421.8,20.1 422.4,20.1 423.0,20.1 423.6,20.1 424.2,20.1 424.8,20.1 425.4,20.1 426.0,20.1 426.6,20.1 427.2,20.1 427.8,20.1 428.4,20.1 429.0,20.1 429.6,20.1 430.2,20.1 430.8,20.1 431.4,20.1 432.0,20.1 432.6,20.1 433.2,20.1 433.8,20.1 434.4,20.1 435.0,20.1 435.6,20.1 436.2,20.1 436.8,20.1 437.4,20.1 438.0,20.1 438.6,20.1 439.2,20.1 439.8,20.1 440.4,20.1 441.0,20.1 441.6,20.1 442.2,20.1 442.8,20.1 443.4,20.1 444.0,20.1 444.6,20.1 445.2,20.1 445.8,20.1 446.4,20.1 447.0,20.1 447.6,20.1 448.2,20.1 448.8,20.1 449.4,20.1 450.0,20.1 450.6,20.1 451.2,20.1 451.8,20.1 452.4,20.1 453.0,20.1 453.6,20.1 454.2,20.1 454.8,20.1 455.4,20.1 456.0,20.1 456.6,20.1 457.2,20.1 457.8,20.1 458.4,20.1 459.0,20.1 459.6,20.1 460.2,20.1 460.8,20.1 461.4,20.1 462.0,20.1 462.6,20.1 463.2,20.1 463.8,20.1 464.4,20.1 465.0,20.1 465.6,20.1 466.2,20.1 466.8,20.1 467.4,20.1 468.0,20.1 468.6,20.1 469.2,20.1 469.8,20.1 470.4,20.1 471.0,20.1 471.6,20.1 472.2,20.1 472.8,20.1 473.4,20.1 474.0,20.1 474.6,20.1 475.2,20.1 475.8,20.1 476.4,20.1 477.0,20.1 477.6,20.1 478.2,20.1 478.8,20.1 479.4,20.1 480.0,20.1 480.6,20.1 481.2,20.1 481.8,20.1 482.4,20.1 483.0,20.1 483.6,20.1 484.2,20.1 484.8,20.1 485.4,20.1 486.0,20.1 486.6,20.1 487.2,20.1 487.8,20.1 488.4,20.1 489.0,20.1 489.6,20.1 490.2,20.1 490.8,20.1 491.4,20.1 492.0,20.1 492.6,20.1 493.2,20.1 493.8,20.1 494.4,20.1 495.0,20.1 495.6,20.1 496.2,20.1 496.8,20.1 497.4,20.1 498.0,20.1 498.6,20.1 499.2,20.1 499.8,20.1 500.4,20.1 501.0,20.1 501.6,20.1 502.2,20.1 502.8,20.1 503.4,20.1 504.0,20.1 504.6,20.1 505.2,20.1 505.8,20.1 506.4,20.1 507.0,20.1 507.6,20.1 508.2,20.1 508.8,20.1 509.4,20.1 510.0,20.1 510.6,20.1 511.2,20.1 511.8,20.1 512.4,20.1 513.0,20.1 513.6,20.1 514.2,20.1 514.8,20.1 515.4,20.1 516.0,20.1 516.6,20.1 517.2,20.1 517.8,20.1 518.4,20.1 519.0,20.1 519.6,20.1 520.2,20.1 520.8,20.1 521.4,20.1 522.0,20.1 522.6,20.1 523.2,20.1 523.8,20.1 524.4,20.1 525.0,20.1 525.6,20.1 526.2,20.1 526.8,20.1 527.4,20.1 528.0,20.1 528.6,20.1 529.2,20.1 529.8,20.1 530.4,20.1 531.0,20.1 531.6,20.1 532.2,20.1 532.8,20.1 533.4,20.1 534.0,20.1 534.6,20.1 535.2,20.1 535.8,20.1 536.4,20.1 537.0,20.1 537.6,20.1 538.2,20.1 538.8,20.1 539.4,20.1 540.0,20.1 540.6,20.1 541.2,20.1 541.8,20.1 542.4,20.1 543.0,20.1 543.6,20.1 544.2,20.1 544.8,20.1 545.4,20.1 546.0,20.1 546.6,20.1 547.2,20.1 547.8,20.1 548.4,20.1 549.0,20.1 549.6,20.1 550.2,20.1 550.8,20.1 551.4,20.1 552.0,20.1 552.6,20.1 553.2,20.1 553.8,20.1 554.4,20.1 555.0,20.1 555.6,20.1 556.2,20.1 556.8,20.1 557.4,20.1 558.0,20.1 558.6,20.1 559.2,20.1 559.8,20.1 560.4,20.1 561.0,20.1 561.6,20.1 562.2,20.1 562.8,20.1 563.4,20.1 564.0,20.1 564.6,20.1 565.2,20.1 565.8,20.1 566.4,20.1 567.0,20.1 567.6,20.1 568.2,20.1 568.8,20.1 569.4,20.1 570.0,20.1 570.6,20.1 571.2,20.1 571.8,20.1 572.4,20.1 573.0,20.1 573.6,20.1 574.2,20.1 574.8,20.1 575.4,20.1 576.0,20.1 576.6,20.1 577.2,20.1 577.8,20.1 578.4,20.1 579.0,20.1 579.6,20.1 580.2,20.1 580.8,20.1 581.4,20.1 582.0,20.1 582.6,20.1 583.2,20.1 583.8,20.1 584.4,20.1 585.0,20.1 585.6,20.1 586.2,20.1 586.8,20.1 587.4,20.1 588.0,20.1 588.6,20.1 589.2,20.1 589.8,20.1 590.4,20.1 591.0,20.1 591.6,20.1 592.2,20.1 592.8,20.1 593.4,20.1 594.0,20.1 594.6,20.1 595.2,20.1 595.8,20.1 596.4,20.1 597.0,20.1 597.6,20.1 598.2,20.1 598.8,20.1 599.4,20.1 600.0,20.1 600.6,20.1 601.2,20.1 601.8,20.1 602.4,20.1 603.0,20.1 603.6,20.1 604.2,20.1 604.8,20.1 605.4,20.1 606.0,20.1 606.6,20.1 607.2,20.1 607.8,20.1 608.4,20.1 609.0,20.1 609.6,20.1 610.2,20.1 610.8,20.1 611.4,20.1 612.0,20.1 612.6,20.1 613.2,20.1 613.8,20.1 614.4,20.1 615.0,20.1 615.6,20.1 616.2,20.1 616.8,20.1 617.4,20.1 618.0,20.1 618.6,20.1 619.2,20.1 619.8,20.1 620.4,20.1 621.0,20.1 621.6,20.1 622.2,20.1 622.8,20.1 623.4,20.1 624.0,20.1 624.6,20.1 625.2,20.1 625.8,20.1 626.4,20.1 627.0,20.1 627.6,20.1 628.2,20.1 628.8,20.1 629.4,20.1 630.0,20.1 630.6,20.1 631.2,20.1 631.8,20.1 632.4,20.1 633.0,20.1 633.6,20.1 634.2,20.1 634.8,20.1 635.4,20.1 636.0,20.1 636.6,20.1 637.2,20.1 637.8,20.1 638.4,20.1 639.0,20.1 639.6,20.1 640.2,20.1 640.8,20.1 641.4,20.1 642.0,20.1 642.6,20.1 643.2,20.1 643.8,20.1 644.4,20.1 645.0,20.1 645.6,20.1 646.2,20.1 646.8,20.1 647.4,20.1 648.0,20.1 648.6,20.1 649.2,20.1 649.8,20.1 650.4,20.1 651.0,20.1 651.6,20.1 652.2,20.1 652.8,20.1 653.4,20.1 654.0,20.1 654.6,20.1 655.2,20.1 655.8,20.1 656.4,20.1 657.0,20.1 657.6,20.1 658.2,20.1 658.8,20.1 659.4,20.1 660.0,20.1 660.6,20.1 661.2,20.1 661.8,20.1 662.4,20.1 663.0,20.1 663.6,20.1 664.2,20.1 664.8,20.1 665.4,20.1 666.0,19.6 666.6,18.1 667.2,18.8 667.8,19.1 668.4,19.7 669.0,19.6 669.6,20.1 670.2,20.0 670.8,20.0 671.4,20.1 672.0,20.1 672.6,20.1 673.2,20.1 673.8,20.1 674.4,20.1 675.0,20.1 675.6,20.1 676.2,20.1 676.8,20.1 677.4,20.1 678.0,20.1 678.6,20.1 679.2,20.1 679.8,20.1 680.4,20.1 681.0,20.1 681.6,20.1 682.2,20.1 682.8,20.1 683.4,20.1 684.0,20.1 684.6,20.1 685.2,20.1 685.8,20.1 686.4,20.1 687.0,20.1 687.6,20.1 688.2,20.1 688.8,20.1 689.4,20.1 690.0,20.1 690.6,20.1 691.2,20.1 691.8,20.1 692.4,20.1 693.0,20.1 693.6,20.1 694.2,20.1 694.8,20.1 695.4,20.1 696.0,20.1 696.6,20.1 697.2,20.1 697.8,20.1 698.4,20.1 699.0,20.1 699.6,20.1 700.2,20.1 700.8,20.1 701.4,20.1 702.0,20.1 702.6,20.1 703.2,20.1 703.8,20.1 704.4,20.1 705.0,20.1 705.6,20.1 706.2,20.1 706.8,20.1 707.4,20.1 708.0,20.1 708.6,20.1 709.2,20.1 709.8,20.1 710.4,20.1 711.0,20.1 711.6,20.1 712.2,20.1 712.8,20.1 713.4,20.1 714.0,20.1 714.6,20.1 715.2,20.1 715.8,20.1 716.4,20.1 717.0,20.1 717.6,20.1 718.2,20.1 718.8,20.1 719.4,20.1 720.0,20.1 720.6,20.1 721.2,20.1 721.8,20.1 722.4,20.1 723.0,20.1 723.6,20.1 724.2,20.1 724.2,20.7 723.6,20.7 723.0,20.7 722.4,20.7 721.8,20.7 721.2,20.7 720.6,20.7 720.0,20.7 719.4,20.7 718.8,20.7 718.2,20.7 717.6,20.7 717.0,20.7 716.4,20.7 715.8,20.7 715.2,20.7 714.6,20.7 714.0,20.7 713.4,20.7 712.8,20.7 712.2,20.7 711.6,20.7 711.0,20.7 710.4,20.7 709.8,20.7 709.2,20.7 708.6,20.7 708.0,20.7 707.4,20.7 706.8,20.7 706.2,20.7 705.6,20.7 705.0,20.7 704.4,20.7 703.8,20.7 703.2,20.7 702.6,20.7 702.0,20.7 701.4,20.7 700.8,20.7 700.2,20.7 699.6,20.7 699.0,20.7 698.4,20.7 697.8,20.7 697.2,20.7 696.6,20.7 696.0,20.7 695.4,20.7 694.8,20.7 694.2,20.7 693.6,20.7 693.0,20.7 692.4,20.7 691.8,20.7 691.2,20.7 690.6,20.7 690.0,20.7 689.4,20.7 688.8,20.7 688.2,20.7 687.6,20.7 687.0,20.7 686.4,20.7 685.8,20.7 685.2,20.7 684.6,20.7 684.0,20.7 683.4,20.7 682.8,20.7 682.2,20.7 681.6,20.7 681.0,20.7 680.4,20.7 679.8,20.7 679.2,20.7 678.6,20.7 678.0,20.7 677.4,20.7 676.8,20.7 676.2,20.7 675.6,20.7 675.0,20.7 674.4,20.7 673.8,20.7 673.2,20.7 672.6,20.7 672.0,20.7 671.4,20.8 670.8,20.8 670.2,20.9 669.6,20.8 669.0,21.3 668.4,21.2 667.8,22.0 667.2,22.2 666.6,23.0 666.0,21.4 665.4,20.7 664.8,20.7 664.2,20.7 663.6,20.7 663.0,20.7 662.4,20.7 661.8,20.7 661.2,20.7 660.6,20.7 660.0,20.7 659.4,20.7 658.8,20.7 658.2,20.7 657.6,20.7 657.0,20.7 656.4,20.7 655.8,20.7 655.2,20.7 654.6,20.7 654.0,20.7 653.4,20.7 652.8,20.7 652.2,20.7 651.6,20.7 651.0,20.7 650.4,20.7 649.8,20.7 649.2,20.7 648.6,20.7 648.0,20.7 647.4,20.7 646.8,20.7 646.2,20.7 645.6,20.7 645.0,20.7 644.4,20.7 643.8,20.7 643.2,20.7 642.6,20.7 642.0,20.7 641.4,20.7 640.8,20.7 640.2,20.7 639.6,20.7 639.0,20.7 638.4,20.7 637.8,20.7 637.2,20.7 636.6,20.7 636.0,20.7 635.4,20.7 634.8,20.7 634.2,20.7 633.6,20.7 633.0,20.7 632.4,20.7 631.8,20.7 631.2,20.7 630.6,20.7 630.0,20.7 629.4,20.7 628.8,20.7 628.2,20.7 627.6,20.7 627.0,20.7 626.4,20.7 625.8,20.7 625.2,20.7 624.6,20.7 624.0,20.7 623.4,20.7 622.8,20.7 622.2,20.7 621.6,20.7 621.0,20.7 620.4,20.7 619.8,20.7 619.2,20.7 618.6,20.7 618.0,20.7 617.4,20.7 616.8,20.7 616.2,20.7 615.6,20.7 615.0,20.7 614.4,20.7 613.8,20.7 613.2,20.7 612.6,20.7 612.0,20.7 611.4,20.7 610.8,20.7 610.2,20.7 609.6,20.7 609.0,20.7 608.4,20.7 607.8,20.7 607.2,20.7 606.6,20.7 606.0,20.7 605.4,20.7 604.8,20.7 604.2,20.7 603.6,20.7 603.0,20.7 602.4,20.7 601.8,20.7 601.2,20.7 600.6,20.7 600.0,20.7 599.4,20.7 598.8,20.7 598.2,20.7 597.6,20.7 597.0,20.7 596.4,20.7 595.8,20.7 595.2,20.7 594.6,20.7 594.0,20.7 593.4,20.7 592.8,20.7 592.2,20.7 591.6,20.7 591.0,20.7 590.4,20.7 589.8,20.7 589.2,20.7 588.6,20.7 588.0,20.7 587.4,20.7 586.8,20.7 586.2,20.7 585.6,20.7 585.0,20.7 584.4,20.7 583.8,20.7 583.2,20.7 582.6,20.7 582.0,20.7 581.4,20.7 580.8,20.7 580.2,20.7 579.6,20.7 579.0,20.7 578.4,20.7 577.8,20.7 577.2,20.7 576.6,20.7 576.0,20.7 575.4,20.7 574.8,20.7 574.2,20.7 573.6,20.7 573.0,20.7 572.4,20.7 571.8,20.7 571.2,20.7 570.6,20.7 570.0,20.7 569.4,20.7 568.8,20.7 568.2,20.7 567.6,20.7 567.0,20.7 566.4,20.7 565.8,20.7 565.2,20.7 564.6,20.7 564.0,20.7 563.4,20.7 562.8,20.7 562.2,20.7 561.6,20.7 561.0,20.7 560.4,20.7 559.8,20.7 559.2,20.7 558.6,20.7 558.0,20.7 557.4,20.7 556.8,20.7 556.2,20.7 555.6,20.7 555.0,20.7 554.4,20.7 553.8,20.7 553.2,20.7 552.6,20.7 552.0,20.7 551.4,20.7 550.8,20.7 550.2,20.7 549.6,20.7 549.0,20.7 548.4,20.7 547.8,20.7 547.2,20.7 546.6,20.7 546.0,20.7 545.4,20.7 544.8,20.7 544.2,20.7 543.6,20.7 543.0,20.7 542.4,20.7 541.8,20.7 541.2,20.7 540.6,20.7 540.0,20.7 539.4,20.7 538.8,20.7 538.2,20.7 537.6,20.7 537.0,20.7 536.4,20.7 535.8,20.7 535.2,20.7 534.6,20.7 534.0,20.7 533.4,20.7 532.8,20.7 532.2,20.7 531.6,20.7 531.0,20.7 530.4,20.7 529.8,20.7 529.2,20.7 528.6,20.7 528.0,20.7 527.4,20.7 526.8,20.7 526.2,20.7 525.6,20.7 525.0,20.7 524.4,20.7 523.8,20.7 523.2,20.7 522.6,20.7 522.0,20.7 521.4,20.7 520.8,20.7 520.2,20.7 519.6,20.7 519.0,20.7 518.4,20.7 517.8,20.7 517.2,20.7 516.6,20.7 516.0,20.7 515.4,20.7 514.8,20.7 514.2,20.7 513.6,20.7 513.0,20.7 512.4,20.7 511.8,20.7 511.2,20.7 510.6,20.7 510.0,20.7 509.4,20.7 508.8,20.7 508.2,20.7 507.6,20.7 507.0,20.7 506.4,20.7 505.8,20.7 505.2,20.7 504.6,20.7 504.0,20.7 503.4,20.7 502.8,20.7 502.2,20.7 501.6,20.7 501.0,20.7 500.4,20.7 499.8,20.7 499.2,20.7 498.6,20.7 498.0,20.7 497.4,20.7 496.8,20.7 496.2,20.7 495.6,20.7 495.0,20.7 494.4,20.7 493.8,20.7 493.2,20.7 492.6,20.7 492.0,20.7 491.4,20.7 490.8,20.7 490.2,20.7 489.6,20.7 489.0,20.7 488.4,20.7 487.8,20.7 487.2,20.7 486.6,20.7 486.0,20.7 485.4,20.7 484.8,20.7 484.2,20.7 483.6,20.7 483.0,20.7 482.4,20.7 481.8,20.7 481.2,20.7 480.6,20.7 480.0,20.7 479.4,20.7 478.8,20.7 478.2,20.7 477.6,20.7 477.0,20.7 476.4,20.7 475.8,20.7 475.2,20.7 474.6,20.7 474.0,20.7 473.4,20.7 472.8,20.7 472.2,20.7 471.6,20.7 471.0,20.7 470.4,20.7 469.8,20.7 469.2,20.7 468.6,20.7 468.0,20.7 467.4,20.7 466.8,20.7 466.2,20.7 465.6,20.7 465.0,20.7 464.4,20.7 463.8,20.7 463.2,20.7 462.6,20.7 462.0,20.7 461.4,20.7 460.8,20.7 460.2,20.7 459.6,20.7 459.0,20.7 458.4,20.7 457.8,20.7 457.2,20.7 456.6,20.7 456.0,20.7 455.4,20.7 454.8,20.7 454.2,20.7 453.6,20.7 453.0,20.7 452.4,20.7 451.8,20.7 451.2,20.7 450.6,20.7 450.0,20.7 449.4,20.7 448.8,20.7 448.2,20.7 447.6,20.7 447.0,20.7 446.4,20.7 445.8,20.7 445.2,20.7 444.6,20.7 444.0,20.7 443.4,20.7 442.8,20.7 442.2,20.7 441.6,20.7 441.0,20.7 440.4,20.7 439.8,20.7 439.2,20.7 438.6,20.7 438.0,20.7 437.4,20.7 436.8,20.7 436.2,20.7 435.6,20.7 435.0,20.7 434.4,20.7 433.8,20.7 433.2,20.7 432.6,20.7 432.0,20.7 431.4,20.7 430.8,20.7 430.2,20.7 429.6,20.7 429.0,20.7 428.4,20.7 427.8,20.7 427.2,20.7 426.6,20.7 426.0,20.7 425.4,20.7 424.8,20.7 424.2,20.7 423.6,20.7 423.0,20.7 422.4,20.7 421.8,20.7 421.2,20.7 420.6,20.7 420.0,20.7 419.4,20.7 418.8,20.7 418.2,20.7 417.6,20.7 417.0,20.7 416.4,20.7 415.8,20.7 415.2,20.7 414.6,20.7 414.0,20.7 413.4,20.7 412.8,20.7 412.2,20.7 411.6,20.7 411.0,20.7 410.4,20.7 409.8,20.7 409.2,20.7 408.6,20.7 408.0,20.7 407.4,20.7 406.8,20.7 406.2,20.7 405.6,20.7 405.0,20.7 404.4,20.7 403.8,20.7 403.2,20.7 402.6,20.7 402.0,20.7 401.4,20.7 400.8,20.7 400.2,20.7 399.6,20.7 399.0,20.7 398.4,20.7 397.8,20.7 397.2,20.7 396.6,20.7 396.0,20.7 395.4,20.7 394.8,20.7 394.2,20.7 393.6,20.7 393.0,20.7 392.4,20.7 391.8,20.7 391.2,20.7 390.6,20.7 390.0,20.7 389.4,20.7 388.8,20.7 388.2,20.7 387.6,20.7 387.0,20.7 386.4,20.7 385.8,20.7 385.2,20.7 384.6,20.7 384.0,20.7 383.4,20.7 382.8,20.7 382.2,20.7 381.6,20.7 381.0,20.7 380.4,20.7 379.8,20.7 379.2,20.7 378.6,20.7 378.0,20.7 377.4,20.7 376.8,20.7 376.2,20.7 375.6,20.7 375.0,20.7 374.4,20.7 373.8,20.7 373.2,20.7 372.6,20.7 372.0,20.7 371.4,20.7 370.8,20.7 370.2,20.7 369.6,20.7 369.0,20.7 368.4,20.7 367.8,20.7 367.2,20.7 366.6,20.7 366.0,20.7 365.4,20.7 364.8,20.7 364.2,20.7 363.6,20.7 363.0,20.7 362.4,20.7 361.8,20.7 361.2,20.7 360.6,20.7 360.0,20.7 359.4,20.7 358.8,20.7 358.2,20.7 357.6,20.7 357.0,20.7 356.4,20.7 355.8,20.7 355.2,20.7 354.6,20.7 354.0,20.7 353.4,20.7 352.8,20.7 352.2,20.7 351.6,20.7 351.0,20.7 350.4,20.7 349.8,20.7 349.2,20.7 348.6,20.7 348.0,20.7 347.4,20.7 346.8,20.7 346.2,20.7 345.6,20.7 345.0,20.7 344.4,20.7 343.8,20.7 343.2,20.7 342.6,20.7 342.0,20.7 341.4,20.7 340.8,20.7 340.2,20.7 339.6,20.7 339.0,20.7 338.4,20.7 337.8,20.7 337.2,20.7 336.6,20.7 336.0,20.7 335.4,20.7 334.8,20.7 334.2,20.7 333.6,20.7 333.0,20.7 332.4,20.7 331.8,20.7 331.2,20.7 330.6,20.7 330.0,20.7 329.4,20.7 328.8,20.7 328.2,20.7 327.6,20.7 327.0,20.7 326.4,20.7 325.8,20.7 325.2,20.7 324.6,20.7 324.0,20.7 323.4,20.7 322.8,20.7 322.2,20.7 321.6,20.7 321.0,20.7 320.4,20.7 319.8,20.7 319.2,20.7 318.6,20.7 318.0,20.7 317.4,20.7 316.8,20.7 316.2,20.7 315.6,20.7 315.0,20.7 314.4,20.7 313.8,20.7 313.2,20.7 312.6,20.7 312.0,20.7 311.4,20.7 310.8,20.7 310.2,20.7 309.6,20.7 309.0,20.7 308.4,20.7 307.8,20.7 307.2,20.7 306.6,20.7 306.0,20.7 305.4,20.7 304.8,20.7 304.2,20.7 303.6,20.7 303.0,20.7 302.4,20.7 301.8,20.7 301.2,20.7 300.6,20.7 300.0,20.7 299.4,20.7 298.8,20.7 298.2,20.7 297.6,20.7 297.0,20.7 296.4,20.7 295.8,20.7 295.2,20.7 294.6,20.7 294.0,20.7 293.4,20.7 292.8,20.7 292.2,20.7 291.6,20.7 291.0,20.7 290.4,20.7 289.8,20.7 289.2,20.7 288.6,20.7 288.0,20.7 287.4,20.7 286.8,20.7 286.2,20.7 285.6,20.7 285.0,20.7 284.4,20.7 283.8,20.7 283.2,20.7 282.6,20.7 282.0,20.7 281.4,20.7 280.8,20.7 280.2,20.7 279.6,20.7 279.0,20.7 278.4,20.7 277.8,20.7 277.2,20.7 276.6,20.7 276.0,20.7 275.4,20.7 274.8,20.7 274.2,20.7 273.6,20.7 273.0,20.7 272.4,20.7 271.8,20.7 271.2,20.7 270.6,20.7 270.0,20.7 269.4,20.7 268.8,20.7 268.2,20.7 267.6,20.7 267.0,20.7 266.4,20.7 265.8,20.7 265.2,20.7 264.6,20.7 264.0,20.7 263.4,20.7 262.8,20.7 262.2,20.7 261.6,20.7 261.0,20.7 260.4,20.7 259.8,20.7 259.2,20.7 258.6,20.7 258.0,20.7 257.4,20.7 256.8,20.7 256.2,20.7 255.6,20.7 255.0,20.7 254.4,20.7 253.8,20.7 253.2,20.7 252.6,20.7 252.0,20.7 251.4,20.7 250.8,20.7 250.2,20.7 249.6,20.7 249.0,20.7 248.4,20.7 247.8,20.7 247.2,20.7 246.6,20.7 246.0,20.7 245.4,20.7 244.8,20.7 244.2,20.7 243.6,20.7 243.0,20.7 242.4,20.7 241.8,20.7 241.2,20.7 240.6,20.7 240.0,20.7 239.4,20.7 238.8,20.7 238.2,20.7 237.6,20.7 237.0,20.7 236.4,20.7 235.8,20.7 235.2,20.7 234.6,20.7 234.0,20.7 233.4,20.7 232.8,20.7 232.2,20.7 231.6,20.7 231.0,20.7 230.4,20.7 229.8,20.7 229.2,20.7 228.6,20.7 228.0,20.7 227.4,20.7 226.8,20.7 226.2,20.7 225.6,20.7 225.0,20.7 224.4,20.7 223.8,20.7 223.2,20.7 222.6,20.7 222.0,20.7 221.4,20.7 220.8,20.7 220.2,20.7 219.6,20.7 219.0,20.7 218.4,20.7 217.8,20.7 217.2,20.7 216.6,20.7 216.0,20.7 215.4,20.7 214.8,20.7 214.2,20.7 213.6,20.7 213.0,20.7 212.4,20.7 211.8,20.7 211.2,20.7 210.6,20.7 210.0,20.7 209.4,20.7 208.8,20.7 208.2,20.7 207.6,20.7 207.0,20.7 206.4,20.7 205.8,20.7 205.2,20.7 204.6,20.7 204.0,20.7 203.4,20.7 202.8,20.7 202.2,20.7 201.6,20.7 201.0,20.7 200.4,20.7 199.8,20.7 199.2,20.7 198.6,20.7 198.0,20.7 197.4,20.7 196.8,20.7 196.2,20.7 195.6,20.7 195.0,20.7 194.4,20.7 193.8,20.7 193.2,20.7 192.6,20.7 192.0,20.7 191.4,20.7 190.8,20.7 190.2,20.7 189.6,20.7 189.0,20.7 188.4,20.7 187.8,20.7 187.2,20.7 186.6,20.7 186.0,20.7 185.4,20.7 184.8,20.7 184.2,20.7 183.6,20.7 183.0,20.7 182.4,20.7 181.8,20.7 181.2,20.7 180.6,20.7 180.0,20.7 179.4,20.7 178.8,20.7 178.2,20.7 177.6,20.7 177.0,20.7 176.4,20.7 175.8,20.7 175.2,20.7 174.6,20.7 174.0,20.7 173.4,20.7 172.8,20.7 172.2,20.7 171.6,20.7 171.0,20.7 170.4,20.7 169.8,20.7 169.2,20.7 168.6,20.7 168.0,20.7 167.4,20.7 166.8,20.7 166.2,20.7 165.6,20.7 165.0,20.7 164.4,20.7 163.8,20.7 163.2,20.7 162.6,20.7 162.0,20.7 161.4,20.7 160.8,20.7 160.2,20.7 159.6,20.7 159.0,20.7 158.4,20.7 157.8,20.7 157.2,20.7 156.6,20.7 156.0,20.7 155.4,20.7 154.8,20.7 154.2,20.7 153.6,20.7 153.0,20.7 152.4,20.7 151.8,20.7 151.2,20.7 150.6,20.7 150.0,20.7 149.4,20.7 148.8,20.7 148.2,20.7 147.6,20.7 147.0,20.7 146.4,20.7 145.8,20.7 145.2,20.7 144.6,20.7 144.0,20.7 143.4,20.7 142.8,20.7 142.2,20.7 141.6,20.7 141.0,20.7 140.4,20.7 139.8,20.7 139.2,20.7 138.6,20.7 138.0,20.7 137.4,20.7 136.8,20.7 136.2,20.7 135.6,20.7 135.0,20.7 134.4,20.7 133.8,20.7 133.2,20.7 132.6,20.7 132.0,20.7 131.4,20.7 130.8,20.7 130.2,20.7 129.6,20.7 129.0,20.7 128.4,20.7 127.8,20.7 127.2,20.7 126.6,20.7 126.0,20.7 125.4,20.7 124.8,20.7 124.2,20.7 123.6,20.7 123.0,20.7 122.4,20.7 121.8,20.7 121.2,20.7 120.6,20.7 120.0,20.7 119.4,20.7 118.8,20.7 118.2,20.7 117.6,20.7 117.0,20.7 116.4,20.7 115.8,20.7 115.2,20.7 114.6,20.7 114.0,20.7 113.4,20.7 112.8,20.7 112.2,20.7 111.6,20.7 111.0,20.7 110.4,20.7 109.8,20.7 109.2,20.7 108.6,20.7 108.0,20.7 107.4,20.7 106.8,20.7 106.2,20.7 105.6,20.7 105.0,20.7 104.4,20.7 103.8,20.7 103.2,20.7 102.6,20.7 102.0,20.7 101.4,20.7 100.8,20.7 100.2,20.7 99.6,20.7 99.0,20.7 98.4,20.7 97.8,20.7 97.2,20.7 96.6,20.7 96.0,20.7 95.4,20.7 94.8,20.7 94.2,20.7 93.6,20.7 93.0,20.7 92.4,20.7 91.8,20.7 91.2,20.7 90.6,20.7 90.0,20.7 89.4,20.7 88.8,20.7 88.2,20.7 87.6,20.7 87.0,20.7 86.4,20.7 85.8,20.7 85.2,20.7 84.6,20.7 84.0,20.7 83.4,20.7 82.8,20.7 82.2,20.7 81.6,20.7 81.0,20.7 80.4,20.7 79.8,20.7 79.2,20.7 78.6,20.7 78.0,20.7 77.4,20.7 76.8,20.7 76.2,20.7 75.6,20.7 75.0,20.7 74.4,20.7 73.8,20.7 73.2,20.7 72.6,20.7 72.0,20.7 71.4,20.7 70.8,20.7 70.2,20.7 69.6,20.7 69.0,20.7 68.4,20.7 67.8,20.7 67.2,20.7 66.6,20.7 66.0,20.7 65.4,20.7 64.8,20.7 64.2,20.7 63.6,20.7 63.0,20.7 62.4,20.7 61.8,20.7 61.2,20.7 60.6,20.7 60.0,20.7 59.4,20.7 58.8,20.7 58.2,20.7 57.6,20.7 57.0,20.7 56.4,20.7 55.8,20.7 55.2,20.7 54.6,20.7 54.0,20.7 53.4,20.7 52.8,20.7 52.2,20.7 51.6,20.7 51.0,20.7 50.4,20.7 49.8,20.7 49.2,20.7 48.6,20.7 48.0,20.7 47.4,20.7 46.8,20.7 46.2,20.7 45.6,20.7 45.0,20.7 44.4,20.7 43.8,20.7 43.2,20.7 42.6,20.7 42.0,20.7 41.4,20.7 40.8,20.7 40.2,20.7 39.6,20.7 39.0,20.7 38.4,20.7 37.8,20.7 37.2,20.7 36.6,20.7 36.0,20.7 35.4,20.7 34.8,20.7 34.2,20.7 33.6,20.7 33.0,20.7 32.4,20.7 31.8,20.7 31.2,20.7 30.6,20.7 30.0,20.7 29.4,20.7 28.8,20.7 28.2,20.7 27.6,20.7 27.0,20.7 26.4,20.7 25.8,20.7 25.2,20.7 24.6,20.7 24.0,20.7 23.4,20.7 22.8,20.7 22.2,20.7 21.6,20.7 21.0,20.7 20.4,20.7 19.8,20.7 19.2,20.7 18.6,20.7 18.0,20.7 17.4,20.7 16.8,20.7 16.2,20.7 15.6,20.7 15.0,20.7 14.4,20.7 13.8,20.7 13.2,20.7 12.6,20.7 12.0,20.7 11.4,20.7 10.8,20.7 10.2,20.7 9.6,20.7 9.0,20.7 8.4,20.7 7.8,20.7 7.2,20.7 6.6,20.7 6.0,20.7 5.4,20.7 4.8,20.7 4.2,20.7 3.6,20.7 3.0,20.7 2.4,20.7 1.8,20.7 1.2,20.7 0.6,20.7 0.0,20.7Z" fill="#0c7d97"/></svg>
<div class="abs" style="left:246.0px;top:404.4px;width:724.4px;height:40.8px;border-radius:3.5px;background:#a5f0fd"></div>
<svg style="left:246.0px;top:404.4px" width="724.4" height="40.8" viewBox="0 0 724.4 40.8"><path d="M0 20.4H724.4" stroke="#0c7d97" stroke-width="0.7" fill="none"/><path d="M0.0,20.1 0.6,20.1 1.1,20.1 1.7,20.1 2.2,20.1 2.8,20.1 3.3,20.1 3.9,20.1 4.4,20.1 5.0,20.1 5.5,19.8 6.1,20.0 6.6,19.8 7.2,19.8 7.7,19.8 8.2,19.3 8.8,19.4 9.4,18.9 9.9,19.3 10.5,19.9 11.0,20.0 11.6,20.1 12.1,20.1 12.7,19.8 13.2,19.6 13.8,19.7 14.3,20.0 14.9,19.6 15.4,19.4 16.0,19.6 16.5,19.4 17.1,19.8 17.6,19.7 18.2,19.6 18.7,19.8 19.2,19.7 19.8,19.8 20.4,19.9 20.9,19.7 21.5,20.1 22.0,19.7 22.6,19.7 23.1,19.7 23.7,19.8 24.2,20.0 24.8,20.0 25.3,20.1 25.9,19.8 26.4,20.1 27.0,20.0 27.5,20.0 28.1,19.9 28.6,19.7 29.2,18.9 29.7,18.8 30.3,19.8 30.8,19.9 31.4,20.1 31.9,19.8 32.5,19.3 33.0,19.7 33.6,19.7 34.1,19.7 34.7,19.6 35.2,19.8 35.8,20.0 36.3,19.9 36.9,20.1 37.4,20.1 38.0,20.0 38.5,19.8 39.1,19.6 39.6,19.7 40.2,19.8 40.7,19.8 41.2,19.9 41.8,19.9 42.4,20.1 42.9,18.7 43.5,19.1 44.0,20.0 44.6,19.8 45.1,19.8 45.7,19.8 46.2,19.9 46.8,19.9 47.3,19.8 47.9,19.8 48.4,19.8 49.0,19.1 49.5,19.1 50.1,18.8 50.6,19.4 51.2,19.9 51.7,19.8 52.3,20.0 52.8,19.8 53.4,19.8 53.9,19.8 54.5,19.8 55.0,19.7 55.6,20.0 56.1,19.8 56.7,19.8 57.2,19.9 57.8,19.6 58.3,19.4 58.9,19.7 59.4,20.0 60.0,20.0 60.5,19.9 61.1,19.9 61.6,20.1 62.2,20.0 62.7,19.7 63.3,19.8 63.8,19.8 64.4,19.8 64.9,20.0 65.5,19.9 66.0,19.9 66.6,19.8 67.1,19.9 67.7,19.8 68.2,19.8 68.8,19.8 69.3,19.9 69.9,18.7 70.4,18.8 71.0,18.7 71.5,18.5 72.1,19.3 72.6,19.8 73.2,19.8 73.7,19.8 74.2,20.0 74.8,19.9 75.4,19.8 75.9,20.1 76.5,19.8 77.0,20.0 77.6,20.1 78.1,19.4 78.7,19.4 79.2,19.4 79.8,20.0 80.3,20.0 80.9,19.8 81.4,20.1 82.0,19.9 82.5,20.0 83.1,19.8 83.6,19.8 84.2,19.9 84.7,19.9 85.2,19.7 85.8,20.0 86.4,20.1 86.9,19.9 87.5,19.9 88.0,19.8 88.6,20.1 89.1,19.9 89.7,19.8 90.2,19.9 90.8,18.9 91.3,19.3 91.9,18.9 92.4,19.3 93.0,19.1 93.5,19.8 94.1,19.9 94.6,19.8 95.2,19.8 95.7,20.0 96.3,20.0 96.8,19.9 97.4,19.2 97.9,18.9 98.5,19.0 99.0,19.2 99.6,19.5 100.1,20.0 100.7,19.7 101.2,20.0 101.8,20.1 102.3,19.9 102.9,19.8 103.4,19.9 104.0,19.9 104.5,19.3 105.1,19.8 105.6,19.7 106.2,20.0 106.7,19.7 107.3,20.0 107.8,20.0 108.4,19.9 108.9,19.8 109.5,19.8 110.0,19.9 110.6,19.8 111.1,19.0 111.7,18.9 112.2,19.1 112.8,18.7 113.3,20.0 113.9,20.0 114.4,20.1 115.0,19.7 115.5,19.8 116.1,20.0 116.6,19.8 117.2,19.7 117.7,19.7 118.3,19.7 118.8,19.9 119.4,19.8 119.9,19.7 120.5,19.8 121.0,19.8 121.6,20.0 122.1,20.1 122.7,19.8 123.2,19.1 123.8,19.0 124.3,20.0 124.9,20.1 125.4,20.0 126.0,19.9 126.5,20.0 127.1,19.2 127.6,18.8 128.2,19.0 128.7,19.9 129.2,19.9 129.8,19.9 130.4,19.6 130.9,19.3 131.5,19.2 132.0,19.4 132.6,19.8 133.1,19.8 133.7,20.0 134.2,19.8 134.8,19.7 135.3,20.0 135.9,19.8 136.4,20.1 137.0,19.5 137.5,19.6 138.1,19.6 138.6,19.8 139.2,19.4 139.7,19.6 140.2,20.0 140.8,19.8 141.4,20.0 141.9,19.7 142.5,19.8 143.0,19.9 143.6,19.9 144.1,19.6 144.7,18.7 145.2,18.8 145.8,20.0 146.3,19.6 146.9,20.0 147.4,18.9 148.0,18.7 148.5,19.2 149.1,20.1 149.6,19.8 150.2,20.1 150.7,20.0 151.2,19.7 151.8,19.8 152.4,19.8 152.9,19.8 153.5,20.1 154.0,19.9 154.6,20.0 155.1,19.5 155.7,19.7 156.2,20.0 156.8,19.8 157.3,20.0 157.9,19.5 158.4,19.3 159.0,19.2 159.5,19.1 160.1,19.3 160.6,19.9 161.2,20.0 161.7,19.9 162.2,19.9 162.8,19.9 163.4,20.0 163.9,19.9 164.5,19.9 165.0,19.7 165.6,19.5 166.1,19.7 166.7,20.1 167.2,19.8 167.8,20.1 168.3,20.1 168.9,19.6 169.4,19.9 170.0,19.9 170.5,19.8 171.1,19.7 171.6,19.6 172.2,19.8 172.7,19.8 173.2,20.1 173.8,20.0 174.4,20.0 174.9,19.9 175.5,19.8 176.0,19.9 176.6,20.1 177.1,19.9 177.7,20.0 178.2,19.7 178.8,19.9 179.3,20.0 179.9,19.8 180.4,19.9 181.0,19.8 181.5,19.9 182.1,20.0 182.6,20.1 183.2,19.9 183.7,19.6 184.3,19.7 184.8,19.8 185.4,20.0 185.9,19.9 186.5,20.1 187.0,20.1 187.6,19.8 188.1,19.9 188.7,19.8 189.2,19.7 189.8,18.8 190.3,19.3 190.9,19.3 191.4,19.8 192.0,20.0 192.5,20.0 193.1,20.0 193.6,20.0 194.2,20.1 194.7,19.8 195.3,19.8 195.8,19.5 196.4,19.6 196.9,19.7 197.5,19.7 198.0,20.0 198.6,20.1 199.1,19.7 199.7,19.7 200.2,19.9 200.8,19.6 201.3,19.6 201.9,19.8 202.4,19.8 203.0,20.1 203.5,19.6 204.1,20.1 204.6,19.7 205.2,18.9 205.7,18.6 206.3,19.3 206.8,18.8 207.4,20.1 207.9,20.0 208.5,19.8 209.0,19.7 209.6,19.8 210.1,19.1 210.7,18.9 211.2,19.2 211.8,18.7 212.3,20.1 212.9,19.9 213.4,20.1 214.0,20.0 214.5,20.0 215.1,19.7 215.6,19.8 216.2,20.0 216.7,19.9 217.3,19.9 217.8,19.9 218.4,19.8 218.9,19.9 219.5,19.8 220.0,19.5 220.6,19.7 221.1,19.7 221.7,19.7 222.2,20.0 222.8,19.9 223.3,20.0 223.9,19.8 224.4,19.7 225.0,19.8 225.5,20.1 226.1,20.0 226.6,19.9 227.2,20.0 227.7,19.7 228.3,19.4 228.8,19.3 229.4,19.6 229.9,19.3 230.5,19.7 231.0,19.9 231.6,19.8 232.1,19.8 232.7,19.9 233.2,20.0 233.8,19.8 234.3,20.0 234.9,20.1 235.4,20.0 236.0,19.9 236.5,20.1 237.1,19.2 237.6,19.2 238.2,19.3 238.7,19.0 239.3,20.1 239.8,19.7 240.4,20.1 240.9,19.9 241.5,20.0 242.0,20.0 242.6,20.0 243.1,19.6 243.7,19.5 244.2,19.1 244.8,18.9 245.3,19.9 245.9,19.9 246.4,19.8 247.0,20.0 247.5,19.7 248.1,20.1 248.6,19.9 249.2,19.6 249.7,19.5 250.3,19.2 250.8,19.7 251.4,20.0 251.9,19.8 252.5,20.1 253.0,19.9 253.6,19.8 254.1,19.8 254.7,19.9 255.2,19.8 255.8,20.1 256.3,20.1 256.9,19.6 257.4,19.6 258.0,20.0 258.5,19.8 259.1,20.0 259.6,19.7 260.2,20.0 260.7,19.9 261.2,19.5 261.8,19.6 262.4,19.5 262.9,19.5 263.5,19.8 264.0,20.1 264.6,19.8 265.1,20.0 265.7,20.1 266.2,19.4 266.8,19.1 267.3,18.8 267.9,19.7 268.4,19.8 269.0,19.9 269.5,19.8 270.1,20.0 270.6,19.7 271.2,19.8 271.7,19.9 272.2,19.7 272.8,19.9 273.4,19.7 273.9,19.7 274.5,19.8 275.0,19.4 275.6,20.0 276.1,15.1 276.7,16.2 277.2,16.1 277.8,14.8 278.3,16.0 278.9,13.7 279.4,15.9 280.0,16.7 280.5,14.1 281.1,15.6 281.6,15.2 282.2,14.0 282.7,16.0 283.2,15.7 283.8,15.7 284.4,14.7 284.9,15.3 285.5,14.8 286.0,14.8 286.6,14.1 287.1,15.4 287.7,16.6 288.2,13.2 288.8,14.3 289.3,14.1 289.9,15.9 290.4,16.7 291.0,15.6 291.5,13.8 292.1,16.3 292.6,16.7 293.2,16.4 293.7,15.5 294.2,14.4 294.8,14.6 295.4,16.0 295.9,16.4 296.5,15.7 297.0,15.7 297.6,17.2 298.1,16.3 298.7,17.8 299.2,15.5 299.8,16.5 300.3,17.5 300.9,16.8 301.4,17.4 302.0,17.3 302.5,17.3 303.1,16.4 303.6,16.5 304.2,16.6 304.7,17.0 305.2,16.0 305.8,16.6 306.4,15.8 306.9,13.9 307.5,14.7 308.0,16.3 308.6,11.7 309.1,11.6 309.7,11.5 310.2,15.5 310.8,7.6 311.3,15.4 311.9,16.3 312.4,15.8 313.0,16.1 313.5,16.1 314.1,16.7 314.6,16.8 315.2,17.7 315.7,16.7 316.2,17.6 316.8,18.0 317.4,15.8 317.9,15.8 318.5,17.2 319.0,17.7 319.6,15.8 320.1,13.9 320.7,13.3 321.2,15.8 321.8,16.5 322.3,12.7 322.9,14.4 323.4,13.5 324.0,13.8 324.5,13.0 325.1,16.2 325.6,15.5 326.2,14.6 326.7,13.1 327.2,12.6 327.8,16.2 328.4,13.7 328.9,16.3 329.5,13.9 330.0,15.0 330.6,16.7 331.1,14.3 331.7,13.6 332.2,16.3 332.8,15.1 333.3,17.1 333.9,15.5 334.4,15.9 335.0,16.7 335.5,15.8 336.1,16.9 336.6,16.2 337.2,16.5 337.7,17.0 338.2,15.4 338.8,16.5 339.4,15.3 339.9,16.5 340.5,16.9 341.0,15.1 341.6,15.4 342.1,13.3 342.7,15.7 343.2,12.9 343.8,11.4 344.3,11.0 344.9,10.4 345.4,14.6 346.0,15.5 346.5,10.7 347.1,14.4 347.6,14.2 348.2,16.7 348.7,14.1 349.2,16.0 349.8,15.7 350.4,12.9 350.9,15.1 351.5,17.4 352.0,16.4 352.6,16.3 353.1,16.1 353.7,17.5 354.2,16.7 354.8,16.7 355.3,16.5 355.9,16.1 356.4,15.9 357.0,16.6 357.5,15.5 358.1,14.3 358.6,13.3 359.2,14.9 359.7,17.0 360.3,13.9 360.8,12.9 361.4,12.8 361.9,14.0 362.5,14.3 363.0,16.7 363.6,14.1 364.1,15.7 364.7,14.5 365.2,16.8 365.8,17.1 366.3,16.9 366.9,17.4 367.4,17.3 368.0,17.1 368.5,17.5 369.1,17.3 369.6,17.0 370.2,16.0 370.7,15.8 371.3,13.7 371.8,15.3 372.4,14.7 372.9,15.1 373.5,15.8 374.0,13.9 374.6,14.1 375.1,12.1 375.7,15.5 376.2,13.1 376.8,16.0 377.3,14.0 377.9,15.8 378.4,14.2 379.0,16.5 379.5,16.3 380.1,16.6 380.6,15.2 381.2,16.9 381.7,16.0 382.3,16.6 382.8,16.7 383.4,16.8 383.9,16.2 384.5,17.6 385.0,18.0 385.6,17.4 386.1,16.3 386.7,15.7 387.2,14.8 387.8,14.6 388.3,16.4 388.9,15.6 389.4,13.1 390.0,10.6 390.5,15.8 391.1,16.0 391.6,16.7 392.2,16.4 392.7,13.0 393.3,16.2 393.8,13.4 394.4,17.2 394.9,15.3 395.5,14.3 396.0,14.3 396.6,16.3 397.1,16.9 397.7,15.8 398.2,17.6 398.8,16.4 399.3,17.0 399.9,17.0 400.4,16.6 401.0,17.4 401.5,16.8 402.1,17.5 402.6,14.6 403.2,15.9 403.7,15.3 404.3,13.5 404.8,11.8 405.4,13.3 405.9,13.5 406.5,15.1 407.0,14.4 407.6,13.2 408.1,13.3 408.7,12.7 409.2,15.0 409.8,16.5 410.3,15.8 410.9,15.7 411.4,17.4 412.0,16.6 412.5,19.4 413.1,20.1 413.6,20.1 414.2,20.0 414.7,19.8 415.3,20.0 415.8,19.6 416.4,19.7 416.9,19.7 417.5,20.0 418.0,19.9 418.6,19.7 419.1,20.0 419.7,19.8 420.2,19.7 420.8,20.0 421.3,19.9 421.9,19.3 422.4,19.0 423.0,19.0 423.5,19.0 424.1,19.7 424.6,20.0 425.2,19.6 425.7,19.9 426.3,20.0 426.8,19.9 427.4,19.7 427.9,19.7 428.5,20.0 429.0,19.9 429.6,19.8 430.1,19.7 430.7,19.9 431.2,19.9 431.8,19.3 432.3,19.4 432.9,19.1 433.4,19.8 434.0,20.1 434.5,19.9 435.1,19.7 435.6,19.8 436.2,19.1 436.7,19.1 437.3,20.0 437.8,19.9 438.4,20.0 438.9,19.7 439.5,19.8 440.0,19.7 440.6,19.8 441.1,19.6 441.7,20.1 442.2,20.1 442.8,20.1 443.3,18.5 443.9,18.6 444.4,19.1 445.0,19.8 445.5,20.0 446.1,19.7 446.6,20.0 447.2,19.9 447.7,19.6 448.3,19.5 448.8,19.6 449.4,19.8 449.9,19.7 450.5,19.8 451.0,19.8 451.6,19.8 452.1,19.7 452.7,19.7 453.2,19.7 453.8,19.9 454.3,19.8 454.9,19.9 455.4,19.7 456.0,19.6 456.5,19.8 457.1,19.8 457.6,20.1 458.2,19.7 458.7,20.1 459.3,19.8 459.8,19.7 460.4,20.1 460.9,19.4 461.5,19.3 462.0,19.3 462.6,19.7 463.1,19.7 463.7,19.9 464.2,19.8 464.8,20.0 465.3,19.8 465.9,19.1 466.4,19.4 467.0,19.5 467.5,19.5 468.1,19.9 468.6,19.9 469.2,19.7 469.7,19.8 470.3,19.7 470.8,19.9 471.4,19.5 471.9,19.8 472.5,19.9 473.0,20.0 473.6,19.8 474.1,19.9 474.7,19.8 475.2,20.0 475.8,19.8 476.3,19.9 476.9,19.8 477.4,19.9 478.0,20.0 478.5,19.8 479.1,19.8 479.6,19.2 480.2,19.1 480.7,19.5 481.3,19.9 481.8,20.1 482.4,19.9 482.9,19.9 483.5,20.0 484.0,19.8 484.6,19.9 485.1,20.0 485.7,20.0 486.2,19.7 486.8,19.9 487.3,20.0 487.9,19.8 488.4,19.6 489.0,19.5 489.5,19.7 490.1,19.6 490.6,20.0 491.2,19.6 491.7,19.7 492.3,19.9 492.8,19.8 493.4,19.8 493.9,19.8 494.5,19.7 495.0,19.6 495.6,19.4 496.1,19.5 496.7,19.5 497.2,19.9 497.8,19.7 498.3,19.8 498.9,19.7 499.4,19.9 500.0,19.8 500.5,19.9 501.1,19.4 501.6,19.5 502.2,19.9 502.7,20.1 503.3,20.0 503.8,19.7 504.4,19.7 504.9,19.7 505.5,19.8 506.0,19.7 506.6,20.0 507.1,20.1 507.7,19.9 508.2,19.8 508.8,19.8 509.3,20.1 509.9,19.8 510.4,19.8 511.0,19.3 511.5,18.9 512.1,20.0 512.6,19.9 513.2,19.9 513.7,19.7 514.2,20.0 514.8,20.0 515.4,20.0 515.9,19.9 516.5,19.8 517.0,19.7 517.6,19.9 518.1,19.9 518.7,19.0 519.2,18.4 519.8,19.2 520.3,19.8 520.9,20.0 521.4,20.0 522.0,19.8 522.5,19.9 523.1,19.5 523.6,19.3 524.2,19.7 524.7,19.4 525.2,19.8 525.8,19.7 526.4,20.0 526.9,20.0 527.5,20.1 528.0,19.6 528.6,20.0 529.1,19.8 529.7,20.1 530.2,20.1 530.8,20.0 531.3,19.8 531.9,20.1 532.4,19.8 533.0,19.9 533.5,19.1 534.1,19.1 534.6,18.7 535.2,19.8 535.7,19.8 536.2,19.6 536.8,19.7 537.4,19.6 537.9,19.7 538.5,19.6 539.0,19.6 539.6,19.8 540.1,19.9 540.7,19.9 541.2,19.6 541.8,19.7 542.3,15.5 542.9,15.8 543.4,16.6 544.0,15.5 544.5,14.0 545.1,13.1 545.6,14.4 546.2,13.5 546.7,13.7 547.2,13.4 547.8,14.2 548.4,13.2 548.9,12.5 549.5,14.0 550.0,15.6 550.6,16.7 551.1,14.6 551.7,11.7 552.2,16.9 552.8,17.2 553.3,15.9 553.9,18.1 554.4,17.6 555.0,16.2 555.5,17.0 556.1,16.8 556.6,16.8 557.2,15.6 557.7,16.0 558.2,14.4 558.8,15.9 559.4,14.8 559.9,16.6 560.5,12.1 561.0,13.6 561.6,13.5 562.1,9.9 562.7,11.3 563.2,11.9 563.8,16.3 564.3,16.2 564.9,15.7 565.4,15.3 566.0,14.4 566.5,15.2 567.1,10.2 567.6,12.9 568.2,16.8 568.7,15.0 569.2,15.6 569.8,12.0 570.4,15.9 570.9,16.0 571.5,17.5 572.0,15.8 572.6,16.8 573.1,15.5 573.7,17.5 574.2,15.8 574.8,17.4 575.3,16.0 575.9,15.9 576.4,18.0 577.0,16.5 577.5,16.8 578.1,16.5 578.6,14.4 579.2,12.5 579.7,16.3 580.2,13.5 580.8,16.3 581.4,14.4 581.9,12.6 582.5,15.5 583.0,12.9 583.6,16.4 584.1,14.4 584.7,16.0 585.2,14.6 585.8,16.4 586.3,15.5 586.9,17.1 587.4,16.6 588.0,16.2 588.5,16.5 589.1,16.4 589.6,17.1 590.2,17.5 590.7,15.8 591.2,16.6 591.8,17.0 592.4,17.6 592.9,14.3 593.5,16.0 594.0,12.8 594.6,15.9 595.1,13.6 595.7,14.5 596.2,14.2 596.8,12.7 597.3,16.3 597.9,15.0 598.4,16.8 599.0,13.5 599.5,13.1 600.1,12.6 600.6,11.9 601.2,14.8 601.7,15.8 602.2,16.4 602.8,16.3 603.4,17.8 603.9,17.7 604.5,15.4 605.0,17.7 605.6,16.6 606.1,17.0 606.7,16.7 607.2,16.7 607.8,16.2 608.3,14.8 608.9,15.6 609.4,15.3 610.0,14.2 610.5,16.1 611.1,16.4 611.6,15.0 612.2,16.4 612.7,14.1 613.2,14.6 613.8,15.5 614.4,14.9 614.9,16.3 615.5,15.3 616.0,15.2 616.6,16.0 617.1,16.9 617.7,16.8 618.2,17.7 618.8,15.8 619.3,16.7 619.9,15.8 620.4,17.1 621.0,16.5 621.5,18.1 622.1,15.9 622.6,17.1 623.2,14.6 623.7,10.7 624.2,15.5 624.8,13.7 625.4,15.8 625.9,16.3 626.5,12.8 627.0,14.6 627.6,14.6 628.1,13.7 628.7,14.5 629.2,16.4 629.8,17.4 630.3,16.2 630.9,16.1 631.4,15.9 632.0,17.7 632.5,17.1 633.1,17.0 633.6,16.4 634.2,16.4 634.7,16.2 635.2,16.8 635.8,17.5 636.4,16.1 636.9,13.0 637.5,14.6 638.0,14.4 638.6,15.4 639.1,13.5 639.7,16.3 640.2,13.7 640.8,15.6 641.3,15.0 641.9,16.2 642.4,16.1 643.0,17.0 643.5,15.4 644.1,16.3 644.6,16.1 645.2,16.1 645.7,17.1 646.2,16.6 646.8,17.1 647.4,17.6 647.9,17.4 648.5,15.8 649.0,17.0 649.6,16.9 650.1,15.5 650.7,14.7 651.2,14.8 651.8,13.4 652.3,14.4 652.9,14.4 653.4,14.7 654.0,15.1 654.5,16.3 655.1,16.6 655.6,16.5 656.2,16.2 656.7,16.9 657.2,14.6 657.8,16.8 658.4,17.2 658.9,18.1 659.5,16.8 660.0,17.9 660.6,16.7 661.1,17.0 661.7,17.2 662.2,16.0 662.8,14.9 663.3,15.8 663.9,16.2 664.4,15.4 665.0,14.1 665.5,12.5 666.1,16.3 666.6,17.1 667.2,14.5 667.7,13.9 668.2,16.9 668.8,12.6 669.4,15.8 669.9,16.3 670.5,15.5 671.0,16.1 671.6,12.8 672.1,13.3 672.7,14.2 673.2,16.5 673.8,16.4 674.3,16.3 674.9,15.6 675.4,15.3 676.0,17.1 676.5,16.8 677.1,17.6 677.6,16.9 678.2,16.2 678.7,17.3 679.2,17.1 679.8,17.6 680.4,17.6 680.9,18.0 681.5,18.3 682.0,17.9 682.6,18.1 683.1,18.1 683.7,18.3 684.2,18.6 684.8,18.5 685.3,18.9 685.9,18.8 686.4,18.9 687.0,19.1 687.5,19.1 688.1,19.2 688.6,19.5 689.2,19.5 689.7,19.6 690.2,19.6 690.8,19.8 691.4,19.7 691.9,19.9 692.5,19.9 693.0,20.0 693.6,20.1 694.1,20.1 694.7,20.1 695.2,20.1 695.8,20.1 696.3,20.1 696.9,20.1 697.4,20.1 698.0,20.1 698.5,20.1 699.1,20.1 699.6,20.1 700.2,20.1 700.7,20.1 701.2,20.1 701.8,20.1 702.4,20.1 702.9,20.1 703.5,20.1 704.0,20.1 704.6,20.1 705.1,20.1 705.7,20.1 706.2,20.1 706.8,20.1 707.3,20.1 707.9,20.1 708.4,20.1 709.0,20.1 709.5,20.1 710.1,20.1 710.6,20.1 711.2,20.1 711.7,20.1 712.3,20.1 712.8,20.1 713.4,20.1 713.9,20.1 714.5,20.1 715.0,20.1 715.6,20.1 716.1,20.1 716.7,20.1 717.2,20.1 717.8,20.1 718.3,20.1 718.9,20.1 719.4,20.1 720.0,20.1 720.5,20.1 721.1,20.1 721.6,20.1 722.2,20.1 722.7,20.1 723.3,20.1 723.8,20.1 724.4,20.1 724.4,20.8 723.8,20.8 723.3,20.8 722.7,20.8 722.2,20.8 721.6,20.8 721.1,20.8 720.5,20.8 720.0,20.8 719.4,20.8 718.9,20.8 718.3,20.8 717.8,20.8 717.2,20.8 716.7,20.8 716.1,20.8 715.6,20.8 715.0,20.8 714.5,20.8 713.9,20.8 713.4,20.8 712.8,20.8 712.3,20.8 711.7,20.8 711.2,20.8 710.6,20.8 710.1,20.8 709.5,20.8 709.0,20.8 708.4,20.8 707.9,20.8 707.3,20.8 706.8,20.8 706.2,20.8 705.7,20.8 705.1,20.8 704.6,20.8 704.0,20.8 703.5,20.8 702.9,20.8 702.4,20.8 701.8,20.8 701.2,20.8 700.7,20.8 700.2,20.8 699.6,20.8 699.1,20.8 698.5,20.8 698.0,20.8 697.4,20.8 696.9,20.8 696.3,20.8 695.8,20.8 695.2,20.8 694.7,20.8 694.1,20.8 693.6,20.9 693.0,20.9 692.5,21.1 691.9,21.1 691.4,21.1 690.8,21.2 690.2,21.3 689.7,21.4 689.2,21.6 688.6,21.8 688.1,21.7 687.5,21.9 687.0,22.1 686.4,22.3 685.9,22.5 685.3,22.7 684.8,22.6 684.2,22.6 683.7,23.0 683.1,23.2 682.6,23.5 682.0,23.7 681.5,23.9 680.9,23.4 680.4,24.3 679.8,24.1 679.2,24.7 678.7,24.3 678.2,25.1 677.6,24.6 677.1,24.9 676.5,25.8 676.0,24.0 675.4,26.2 674.9,25.8 674.3,25.7 673.8,26.2 673.2,24.9 672.7,27.6 672.1,28.5 671.6,28.8 671.0,25.9 670.5,27.1 669.9,26.0 669.4,27.1 668.8,29.5 668.2,25.4 667.7,29.9 667.2,28.3 666.6,24.4 666.1,26.0 665.5,33.2 665.0,28.7 664.4,27.0 663.9,25.4 663.3,26.5 662.8,26.5 662.2,26.6 661.7,25.0 661.1,24.7 660.6,25.4 660.0,23.9 659.5,24.2 658.9,23.9 658.4,24.4 657.8,24.8 657.2,26.3 656.7,24.2 656.2,25.6 655.6,25.7 655.1,25.5 654.5,26.6 654.0,26.4 653.4,26.5 652.9,26.8 652.3,28.4 651.8,28.7 651.2,27.0 650.7,28.7 650.1,27.5 649.6,25.2 649.0,24.2 648.5,26.0 647.9,24.2 647.4,23.3 646.8,24.4 646.2,25.3 645.7,24.7 645.2,25.4 644.6,26.0 644.1,26.9 643.5,26.9 643.0,24.8 642.4,25.3 641.9,26.7 641.3,26.9 640.8,26.1 640.2,29.1 639.7,25.5 639.1,28.5 638.6,26.0 638.0,27.3 637.5,28.2 636.9,30.3 636.4,27.2 635.8,24.7 635.2,25.0 634.7,25.3 634.2,25.2 633.6,25.7 633.1,24.5 632.5,24.5 632.0,24.5 631.4,26.2 630.9,25.2 630.3,25.8 629.8,25.2 629.2,25.7 628.7,28.0 628.1,29.8 627.6,28.6 627.0,27.7 626.5,30.0 625.9,26.6 625.4,27.0 624.8,29.3 624.2,26.9 623.7,31.2 623.2,29.3 622.6,24.7 622.1,26.3 621.5,23.4 621.0,25.2 620.4,24.5 619.9,26.3 619.3,24.5 618.8,26.4 618.2,23.8 617.7,24.7 617.1,24.5 616.6,26.6 616.0,28.5 615.5,28.2 614.9,25.5 614.4,27.9 613.8,27.1 613.2,27.6 612.7,27.3 612.2,25.8 611.6,28.2 611.1,25.0 610.5,25.9 610.0,26.9 609.4,26.4 608.9,26.9 608.3,27.1 607.8,26.9 607.2,25.1 606.7,25.1 606.1,24.0 605.6,26.1 605.0,23.5 604.5,26.1 603.9,24.3 603.4,24.5 602.8,26.1 602.2,26.5 601.7,27.5 601.2,28.3 600.6,31.8 600.1,30.2 599.5,29.5 599.0,29.1 598.4,25.3 597.9,27.0 597.3,25.2 596.8,31.3 596.2,27.5 595.7,28.2 595.1,28.4 594.6,25.9 594.0,28.7 593.5,26.5 592.9,28.2 592.4,24.6 591.8,24.4 591.2,24.4 590.7,26.3 590.2,24.0 589.6,24.6 589.1,26.5 588.5,26.0 588.0,25.0 587.4,25.9 586.9,25.1 586.3,26.2 585.8,25.1 585.2,28.3 584.7,25.8 584.1,28.0 583.6,25.5 583.0,30.1 582.5,27.4 581.9,29.4 581.4,28.1 580.8,26.2 580.2,28.4 579.7,26.8 579.2,28.9 578.6,28.7 578.1,26.0 577.5,25.3 577.0,25.2 576.4,23.7 575.9,26.4 575.3,25.9 574.8,24.2 574.2,26.0 573.7,24.5 573.1,25.7 572.6,24.5 572.0,25.9 571.5,24.9 570.9,26.2 570.4,26.8 569.8,31.0 569.2,26.0 568.7,27.3 568.2,24.8 567.6,30.1 567.1,31.3 566.5,27.3 566.0,28.6 565.4,27.5 564.9,27.3 564.3,26.2 563.8,25.7 563.2,31.4 562.7,31.6 562.1,35.0 561.6,28.6 561.0,29.2 560.5,31.9 559.9,26.0 559.4,27.1 558.8,26.5 558.2,28.1 557.7,26.7 557.2,26.6 556.6,25.0 556.1,25.2 555.5,24.5 555.0,25.9 554.4,24.0 553.9,24.0 553.3,26.3 552.8,24.1 552.2,25.4 551.7,29.6 551.1,28.5 550.6,25.1 550.0,25.5 549.5,28.4 548.9,29.2 548.4,28.8 547.8,27.9 547.2,29.1 546.7,29.3 546.2,28.0 545.6,27.8 545.1,28.8 544.5,28.6 544.0,25.9 543.4,26.5 542.9,26.0 542.3,25.9 541.8,21.2 541.2,21.3 540.7,21.1 540.1,21.1 539.6,21.3 539.0,21.3 538.5,21.4 537.9,21.3 537.4,21.5 536.8,21.4 536.2,21.3 535.7,21.1 535.2,21.4 534.6,22.9 534.1,22.2 533.5,22.2 533.0,21.1 532.4,21.1 531.9,20.8 531.3,21.2 530.8,21.0 530.2,20.9 529.7,20.8 529.1,21.3 528.6,20.9 528.0,21.4 527.5,20.8 526.9,20.8 526.4,20.9 525.8,21.2 525.2,21.0 524.7,21.6 524.2,21.3 523.6,21.6 523.1,21.5 522.5,21.2 522.0,21.2 521.4,20.9 520.9,21.0 520.3,21.2 519.8,22.0 519.2,23.0 518.7,22.3 518.1,20.9 517.6,21.1 517.0,21.1 516.5,21.2 515.9,20.9 515.4,21.0 514.8,20.8 514.2,20.9 513.7,21.3 513.2,21.0 512.6,21.0 512.1,20.9 511.5,22.0 511.0,21.9 510.4,21.0 509.9,21.1 509.3,20.9 508.8,21.3 508.2,21.2 507.7,21.2 507.1,20.8 506.6,20.9 506.0,21.2 505.5,21.2 504.9,21.1 504.4,21.3 503.8,21.2 503.3,21.0 502.7,20.8 502.2,21.1 501.6,21.6 501.1,21.4 500.5,21.2 500.0,21.3 499.4,21.3 498.9,21.2 498.3,21.4 497.8,21.3 497.2,21.1 496.7,21.7 496.1,21.5 495.6,21.7 495.0,21.4 494.5,21.3 493.9,21.0 493.4,21.2 492.8,21.1 492.3,21.0 491.7,21.3 491.2,21.3 490.6,20.9 490.1,21.3 489.5,21.2 489.0,21.4 488.4,21.4 487.9,21.4 487.3,20.9 486.8,21.1 486.2,21.4 485.7,20.8 485.1,21.1 484.6,21.0 484.0,21.3 483.5,21.0 482.9,21.1 482.4,21.1 481.8,20.8 481.3,20.9 480.7,21.6 480.2,21.9 479.6,21.7 479.1,21.2 478.5,21.1 478.0,20.9 477.4,21.0 476.9,21.2 476.3,21.1 475.8,21.3 475.2,21.1 474.7,21.2 474.1,21.1 473.6,21.2 473.0,20.9 472.5,21.1 471.9,21.1 471.4,21.4 470.8,21.1 470.3,21.2 469.7,21.1 469.2,21.2 468.6,21.1 468.1,21.1 467.5,21.5 467.0,21.4 466.4,21.4 465.9,21.7 465.3,21.4 464.8,20.9 464.2,21.3 463.7,21.0 463.1,21.2 462.6,21.4 462.0,21.8 461.5,21.8 460.9,21.7 460.4,20.8 459.8,21.3 459.3,21.1 458.7,20.8 458.2,21.3 457.6,20.9 457.1,21.1 456.5,21.3 456.0,21.2 455.4,21.5 454.9,21.0 454.3,21.2 453.8,21.2 453.2,21.3 452.7,21.3 452.1,21.3 451.6,21.2 451.0,21.1 450.5,21.0 449.9,21.2 449.4,21.4 448.8,21.6 448.3,21.5 447.7,21.3 447.2,21.1 446.6,20.9 446.1,21.2 445.5,20.8 445.0,21.2 444.4,22.1 443.9,22.6 443.3,22.7 442.8,20.8 442.2,20.8 441.7,20.8 441.1,21.4 440.6,21.1 440.0,21.3 439.5,21.3 438.9,21.3 438.4,20.9 437.8,20.9 437.3,20.9 436.7,22.4 436.2,21.9 435.6,21.0 435.1,21.3 434.5,21.1 434.0,20.8 433.4,21.2 432.9,21.9 432.3,21.6 431.8,21.9 431.2,21.0 430.7,21.1 430.1,21.1 429.6,21.1 429.0,21.0 428.5,21.0 427.9,21.3 427.4,21.4 426.8,21.1 426.3,20.9 425.7,21.1 425.2,21.2 424.6,21.0 424.1,21.1 423.5,22.1 423.0,22.0 422.4,22.1 421.9,22.1 421.3,21.1 420.8,21.0 420.2,21.2 419.7,21.2 419.1,20.8 418.6,21.2 418.0,21.1 417.5,20.9 416.9,21.3 416.4,21.4 415.8,21.4 415.3,20.9 414.7,21.2 414.2,20.9 413.6,20.8 413.1,20.9 412.5,21.7 412.0,24.7 411.4,23.9 410.9,26.3 410.3,26.0 409.8,25.2 409.2,26.7 408.7,30.4 408.1,28.6 407.6,30.4 407.0,27.3 406.5,27.5 405.9,29.7 405.4,31.1 404.8,30.8 404.3,28.4 403.7,27.0 403.2,27.3 402.6,28.2 402.1,24.1 401.5,24.9 401.0,24.4 400.4,25.0 399.9,24.8 399.3,24.8 398.8,26.1 398.2,24.5 397.7,25.7 397.1,24.7 396.6,25.5 396.0,28.3 395.5,28.5 394.9,25.8 394.4,24.7 393.8,28.9 393.3,26.0 392.7,30.0 392.2,26.7 391.6,26.3 391.1,25.9 390.5,25.8 390.0,32.6 389.4,29.6 388.9,26.4 388.3,25.7 387.8,27.1 387.2,27.6 386.7,27.2 386.1,26.7 385.6,24.4 385.0,23.7 384.5,24.0 383.9,26.3 383.4,24.2 382.8,25.3 382.3,24.9 381.7,25.9 381.2,26.0 380.6,25.7 380.1,26.1 379.5,25.7 379.0,25.3 378.4,28.4 377.9,26.6 377.3,27.3 376.8,25.0 376.2,29.6 375.7,26.0 375.1,31.3 374.6,27.6 374.0,27.5 373.5,26.4 372.9,26.6 372.4,27.0 371.8,26.5 371.3,28.7 370.7,25.6 370.2,25.8 369.6,24.7 369.1,24.5 368.5,23.5 368.0,24.7 367.4,24.4 366.9,24.7 366.3,25.5 365.8,25.1 365.2,24.5 364.7,27.9 364.1,26.4 363.6,29.4 363.0,25.1 362.5,29.0 361.9,27.6 361.4,30.0 360.8,29.8 360.3,28.0 359.7,25.3 359.2,27.4 358.6,28.1 358.1,27.6 357.5,27.1 357.0,25.0 356.4,25.6 355.9,25.8 355.3,24.7 354.8,25.7 354.2,25.4 353.7,24.2 353.1,26.6 352.6,25.6 352.0,25.4 351.5,24.5 350.9,27.6 350.4,31.1 349.8,26.4 349.2,25.8 348.7,28.9 348.2,25.1 347.6,28.7 347.1,27.2 346.5,34.5 346.0,27.2 345.4,28.4 344.9,33.4 344.3,34.1 343.8,31.2 343.2,29.9 342.7,25.4 342.1,28.3 341.6,26.7 341.0,26.8 340.5,24.7 339.9,25.5 339.4,26.8 338.8,25.1 338.2,26.5 337.7,25.5 337.2,25.3 336.6,25.6 336.1,24.9 335.5,25.4 335.0,25.1 334.4,26.0 333.9,25.9 333.3,25.7 332.8,27.2 332.2,25.6 331.7,28.9 331.1,29.6 330.6,26.0 330.0,27.2 329.5,28.7 328.9,25.8 328.4,27.3 327.8,26.0 327.2,29.9 326.7,30.1 326.2,28.2 325.6,27.5 325.1,25.1 324.5,28.5 324.0,28.3 323.4,29.2 322.9,27.5 322.3,29.7 321.8,25.0 321.2,26.7 320.7,28.4 320.1,28.4 319.6,25.9 319.0,24.8 318.5,25.0 317.9,26.5 317.4,26.4 316.8,24.1 316.2,23.9 315.7,25.1 315.2,24.4 314.6,24.8 314.1,26.0 313.5,25.0 313.0,26.3 312.4,25.2 311.9,25.7 311.3,26.3 310.8,36.0 310.2,28.4 309.7,31.3 309.1,30.3 308.6,31.4 308.0,25.9 307.5,27.7 306.9,29.0 306.4,26.2 305.8,25.6 305.2,25.9 304.7,25.1 304.2,25.0 303.6,26.0 303.1,24.9 302.5,25.1 302.0,24.9 301.4,24.3 300.9,25.2 300.3,23.8 299.8,25.9 299.2,26.2 298.7,24.5 298.1,24.9 297.6,25.0 297.0,26.0 296.5,25.6 295.9,25.5 295.4,25.4 294.8,28.6 294.2,28.4 293.7,27.7 293.2,25.1 292.6,25.4 292.1,26.1 291.5,28.4 291.0,25.9 290.4,24.7 289.9,26.3 289.3,28.5 288.8,27.0 288.2,28.1 287.7,25.0 287.1,28.0 286.6,28.3 286.0,27.6 285.5,28.7 284.9,27.5 284.4,27.7 283.8,26.8 283.2,26.9 282.7,25.3 282.2,28.9 281.6,27.3 281.1,26.0 280.5,27.3 280.0,24.8 279.4,25.4 278.9,28.0 278.3,25.5 277.8,26.6 277.2,25.8 276.7,25.9 276.1,26.9 275.6,20.9 275.0,21.5 274.5,21.1 273.9,21.4 273.4,21.1 272.8,21.0 272.2,21.3 271.7,21.0 271.2,21.1 270.6,21.3 270.1,20.9 269.5,21.4 269.0,21.0 268.4,21.1 267.9,21.1 267.3,22.2 266.8,21.9 266.2,21.9 265.7,20.8 265.1,21.0 264.6,21.2 264.0,20.8 263.5,21.2 262.9,21.4 262.4,21.4 261.8,21.6 261.2,21.4 260.7,21.0 260.2,20.9 259.6,21.3 259.1,21.0 258.5,21.2 258.0,20.9 257.4,21.3 256.9,21.4 256.3,20.9 255.8,20.9 255.2,21.2 254.7,21.1 254.1,21.2 253.6,21.3 253.0,20.9 252.5,20.8 251.9,21.1 251.4,20.9 250.8,21.5 250.3,21.8 249.7,21.7 249.2,21.4 248.6,20.9 248.1,20.8 247.5,21.2 247.0,20.9 246.4,21.2 245.9,21.2 245.3,21.0 244.8,22.2 244.2,22.1 243.7,21.8 243.1,21.6 242.6,20.9 242.0,21.1 241.5,20.8 240.9,21.0 240.4,20.8 239.8,21.1 239.3,20.8 238.7,22.4 238.2,21.9 237.6,21.7 237.1,22.0 236.5,20.8 236.0,21.0 235.4,21.0 234.9,20.8 234.3,20.9 233.8,21.2 233.2,20.9 232.7,21.2 232.1,21.2 231.6,21.3 231.0,21.0 230.5,21.2 229.9,21.5 229.4,21.6 228.8,21.8 228.3,21.6 227.7,21.4 227.2,20.9 226.6,21.0 226.1,20.9 225.5,20.8 225.0,21.3 224.4,21.1 223.9,21.3 223.3,21.1 222.8,21.1 222.2,21.0 221.7,21.3 221.1,21.5 220.6,21.4 220.0,21.5 219.5,21.3 218.9,21.0 218.4,21.1 217.8,21.1 217.3,20.9 216.7,21.0 216.2,20.9 215.6,21.2 215.1,21.3 214.5,20.9 214.0,21.0 213.4,20.8 212.9,21.2 212.3,20.8 211.8,22.5 211.2,21.8 210.7,22.4 210.1,21.9 209.6,21.2 209.0,21.4 208.5,21.3 207.9,20.9 207.4,20.9 206.8,22.6 206.3,22.2 205.7,22.2 205.2,22.1 204.6,21.3 204.1,20.8 203.5,21.4 203.0,20.8 202.4,21.1 201.9,21.2 201.3,21.5 200.8,21.4 200.2,21.1 199.7,21.2 199.1,21.2 198.6,20.8 198.0,21.0 197.5,21.1 196.9,21.3 196.4,21.5 195.8,21.5 195.3,21.3 194.7,21.0 194.2,20.9 193.6,21.0 193.1,20.9 192.5,20.9 192.0,20.9 191.4,21.0 190.9,21.8 190.3,21.9 189.8,22.5 189.2,21.2 188.7,21.3 188.1,21.0 187.6,21.3 187.0,20.8 186.5,20.9 185.9,21.1 185.4,20.9 184.8,21.4 184.3,21.2 183.7,21.4 183.2,21.1 182.6,20.9 182.1,20.9 181.5,21.2 181.0,21.1 180.4,21.1 179.9,21.2 179.3,20.9 178.8,21.0 178.2,21.1 177.7,20.8 177.1,21.1 176.6,20.8 176.0,21.0 175.5,21.1 174.9,21.1 174.4,20.9 173.8,20.9 173.2,20.8 172.7,21.3 172.2,21.2 171.6,21.3 171.1,21.4 170.5,21.2 170.0,21.1 169.4,21.1 168.9,21.2 168.3,20.8 167.8,20.8 167.2,21.1 166.7,20.8 166.1,21.3 165.6,21.5 165.0,21.2 164.5,21.0 163.9,21.0 163.4,20.9 162.8,21.1 162.2,21.2 161.7,21.0 161.2,20.9 160.6,21.0 160.1,21.8 159.5,22.1 159.0,22.0 158.4,21.8 157.9,21.7 157.3,20.9 156.8,21.2 156.2,21.0 155.7,21.4 155.1,21.5 154.6,20.8 154.0,21.1 153.5,20.8 152.9,21.2 152.4,21.3 151.8,21.4 151.2,21.3 150.7,20.9 150.2,20.8 149.6,21.1 149.1,20.8 148.5,22.2 148.0,22.5 147.4,22.5 146.9,20.8 146.3,21.2 145.8,20.9 145.2,22.7 144.7,22.5 144.1,21.3 143.6,21.1 143.0,21.1 142.5,21.1 141.9,21.2 141.4,20.9 140.8,21.3 140.2,21.0 139.7,21.4 139.2,21.6 138.6,21.2 138.1,21.4 137.5,21.6 137.0,21.6 136.4,20.9 135.9,21.3 135.3,21.1 134.8,21.1 134.2,21.3 133.7,21.1 133.1,21.1 132.6,21.0 132.0,21.8 131.5,22.1 130.9,21.8 130.4,21.3 129.8,20.9 129.2,21.1 128.7,21.2 128.2,22.4 127.6,22.5 127.1,22.3 126.5,20.9 126.0,21.0 125.4,20.8 124.9,20.8 124.3,20.9 123.8,22.2 123.2,22.0 122.7,21.3 122.1,20.8 121.6,21.0 121.0,21.2 120.5,21.1 119.9,21.2 119.4,21.3 118.8,21.1 118.3,21.2 117.7,21.3 117.2,21.2 116.6,21.4 116.1,20.9 115.5,21.4 115.0,21.2 114.4,20.8 113.9,20.9 113.3,20.9 112.8,22.5 112.2,22.0 111.7,22.1 111.1,22.3 110.6,21.3 110.0,21.0 109.5,21.2 108.9,21.3 108.4,21.0 107.8,21.0 107.3,20.9 106.7,21.3 106.2,21.0 105.6,21.3 105.1,21.2 104.5,21.7 104.0,21.0 103.4,21.0 102.9,21.2 102.3,21.1 101.8,20.8 101.2,20.9 100.7,21.2 100.1,21.0 99.6,21.9 99.0,21.8 98.5,22.1 97.9,22.1 97.4,22.2 96.8,21.2 96.3,20.9 95.7,20.9 95.2,21.3 94.6,21.3 94.1,21.1 93.5,21.2 93.0,21.9 92.4,22.0 91.9,22.5 91.3,21.8 90.8,21.9 90.2,21.0 89.7,21.2 89.1,20.9 88.6,20.9 88.0,21.1 87.5,20.9 86.9,21.0 86.4,20.8 85.8,21.0 85.2,21.2 84.7,21.0 84.2,21.1 83.6,21.2 83.1,21.1 82.5,20.9 82.0,21.0 81.4,20.8 80.9,21.1 80.3,20.8 79.8,20.8 79.2,21.6 78.7,21.8 78.1,21.7 77.6,20.9 77.0,20.8 76.5,21.2 75.9,20.9 75.4,21.1 74.8,21.1 74.2,20.9 73.7,21.3 73.2,21.2 72.6,21.3 72.1,21.9 71.5,22.6 71.0,22.6 70.4,22.7 69.9,22.4 69.3,21.0 68.8,21.3 68.2,21.3 67.7,21.2 67.1,21.0 66.6,21.0 66.0,21.0 65.5,20.9 64.9,21.0 64.4,21.2 63.8,21.1 63.3,21.0 62.7,21.3 62.2,20.9 61.6,20.8 61.1,21.0 60.5,21.2 60.0,20.9 59.4,21.0 58.9,21.2 58.3,21.5 57.8,21.3 57.2,21.1 56.7,21.3 56.1,21.2 55.6,21.0 55.0,21.2 54.5,21.2 53.9,21.1 53.4,21.2 52.8,21.2 52.3,21.1 51.7,21.1 51.2,21.0 50.6,21.7 50.1,22.3 49.5,22.2 49.0,22.0 48.4,21.1 47.9,21.1 47.3,21.3 46.8,21.2 46.2,21.1 45.7,21.1 45.1,21.1 44.6,21.2 44.0,20.8 43.5,22.2 42.9,22.6 42.4,20.8 41.8,21.2 41.2,21.0 40.7,21.1 40.2,21.1 39.6,21.1 39.1,21.4 38.5,21.2 38.0,20.9 37.4,20.8 36.9,20.9 36.3,21.2 35.8,20.9 35.2,21.3 34.7,21.4 34.1,21.4 33.6,21.2 33.0,21.5 32.5,21.5 31.9,21.1 31.4,20.9 30.8,21.0 30.3,21.2 29.7,22.3 29.2,22.3 28.6,21.3 28.1,21.1 27.5,21.0 27.0,20.9 26.4,20.9 25.9,21.3 25.3,20.9 24.8,20.8 24.2,20.9 23.7,21.3 23.1,21.5 22.6,21.3 22.0,21.3 21.5,20.8 20.9,21.3 20.4,21.0 19.8,21.2 19.2,21.3 18.7,21.3 18.2,21.2 17.6,21.4 17.1,21.2 16.5,21.7 16.0,21.5 15.4,21.6 14.9,21.3 14.3,20.9 13.8,21.1 13.2,21.2 12.7,21.2 12.1,20.8 11.6,20.8 11.0,21.1 10.5,21.1 9.9,21.8 9.4,22.1 8.8,21.6 8.2,22.0 7.7,21.2 7.2,21.2 6.6,21.1 6.1,21.0 5.5,21.3 5.0,20.8 4.4,20.8 3.9,20.8 3.3,20.8 2.8,20.8 2.2,20.8 1.7,20.8 1.1,20.8 0.6,20.8 0.0,20.8Z" fill="#0c7d97"/><path d="M277.0,14.8V26.7M279.7,14.5V29.7M281.9,15.3V25.3M285.4,13.7V26.0M288.5,15.7V29.4M292.1,11.7V26.5M295.5,11.9V25.7M298.3,15.5V25.9M301.9,15.2V29.3M305.3,12.1V25.5M307.5,13.2V28.7M309.8,12.9V25.4M312.7,14.6V27.5M315.9,11.7V28.6M319.2,14.5V25.5M322.7,13.0V28.9M326.1,12.4V28.5M328.2,15.1V25.6M331.3,11.5V28.8M333.7,14.3V25.8M335.9,15.3V28.3M338.5,14.0V27.2M341.4,13.4V27.1M343.0,11.7V25.8M345.3,11.9V25.1M347.8,13.5V27.2M349.1,11.6V29.6M350.7,13.4V26.8M352.2,14.3V28.6M354.1,11.7V28.5M357.5,12.0V28.5M361.0,13.3V25.4M363.0,14.2V29.3M365.9,13.9V26.5M369.1,14.1V28.8M371.3,12.9V29.4M374.1,11.9V27.4M375.7,15.2V25.5M377.7,15.6V25.7M379.8,12.2V27.2M383.3,14.3V29.6M386.7,12.0V27.9M388.5,13.6V27.8M390.8,11.9V26.9M392.1,15.7V27.2M395.6,13.4V26.9M398.3,12.0V26.6M401.4,15.6V26.8M403.6,13.7V27.5M405.5,15.2V29.4M408.2,15.6V28.2M409.6,13.9V25.3M543.0,14.0V28.1M545.8,15.8V29.7M547.4,15.8V27.2M549.8,11.7V27.9M553.0,14.3V27.5M555.5,14.6V27.5M556.8,13.3V25.0M558.5,11.8V28.8M560.4,13.0V26.4M562.0,14.2V25.1M564.3,15.3V27.5M566.9,12.4V29.7M569.7,12.4V28.7M572.9,12.9V28.0M576.2,12.8V29.3M579.2,15.4V28.9M582.3,14.1V27.9M584.5,11.4V26.9M587.3,13.8V28.0M588.8,15.3V26.4M590.7,12.9V26.8M593.8,14.2V28.5M596.2,14.4V25.6M598.4,14.2V25.1M601.0,15.5V26.2M603.0,12.1V26.7M604.2,13.7V26.0M605.8,11.8V25.3M607.5,15.4V26.1M608.7,13.6V28.7M611.0,13.0V29.0M613.7,15.3V28.9M617.3,11.4V26.0M620.5,14.8V26.3M622.7,12.9V26.7M624.5,14.4V25.1M627.1,13.0V27.1M630.7,12.4V26.6M633.3,13.6V25.9M635.4,12.9V26.7M637.0,14.3V25.9M638.9,15.6V27.5M641.1,14.6V28.2M644.4,14.2V26.5M647.4,12.4V26.3M649.6,15.4V28.8M652.0,12.0V27.1M654.0,11.9V24.9M656.2,13.4V26.9M659.2,12.4V28.5M661.2,13.6V25.8M662.5,15.7V28.8M665.0,13.5V28.3M667.9,13.0V27.3M670.9,15.2V28.1M672.9,15.4V28.3M676.3,15.3V25.4M678.7,13.8V25.3" stroke="#0c7d97" stroke-width="0.6" stroke-opacity="0.85" fill="none"/></svg>
<div class="abs" style="left:246.0px;top:448.2px;width:724.4px;height:40.8px;border-radius:3.5px;background:#656568"></div>
<svg style="left:246.0px;top:448.2px" width="724.4" height="40.8" viewBox="0 0 724.4 40.8"><path d="M0 20.4H724.4" stroke="#525255" stroke-width="0.9" fill="none"/><path d="M7.5 3.5V31.9M12.5 5.8V33.7M16.5 4.6V32.4M24.5 4.0V34.3M28.5 6.8V36.1M32.5 3.5V33.6M41.5 8.3V35.1M45.5 5.2V37.1M49.5 5.4V32.2M58.5 6.4V37.2M62.5 7.3V32.7M66.5 6.3V35.2M74.5 7.8V37.0M79.5 6.4V35.5M83.5 6.5V32.7M91.5 8.3V34.2M95.5 7.2V32.4M100.5 8.1V37.2M108.5 5.0V31.7M112.5 3.9V34.6M116.5 4.5V33.1M125.5 3.6V34.0M129.5 6.4V37.1M133.5 4.0V33.8M142.5 8.8V33.8M146.5 4.1V36.9M150.5 8.0V31.9M158.5 8.0V34.4M163.5 9.0V35.6M167.5 6.2V35.6M175.5 7.2V34.4M179.5 7.4V35.2M184.5 6.0V35.1M192.5 9.0V33.7M196.5 6.5V32.1M200.5 5.4V34.3M209.5 3.8V34.9M213.5 8.8V32.3M217.5 5.2V33.3M226.5 7.1V35.8M230.5 8.3V33.1M234.5 7.6V33.9M242.5 4.5V35.2M247.5 9.4V33.1M251.5 6.4V36.8M259.5 4.3V33.4M263.5 4.9V35.0M268.5 6.2V35.2M276.5 4.0V37.2M280.5 4.4V33.5M284.5 5.6V36.0M293.5 8.9V37.0M297.5 8.0V37.2M301.5 8.0V34.6M309.5 5.2V36.4M314.5 7.0V35.9M318.5 7.1V37.0M326.5 4.7V31.8M330.5 3.8V35.6M335.5 7.4V35.3M343.5 4.1V33.9M347.5 7.5V33.6M351.5 7.7V34.3M360.5 5.6V36.1M364.5 3.6V35.4M368.5 8.9V35.2M377.5 3.4V34.3M381.5 3.8V31.5M385.5 3.6V32.4M393.5 7.0V32.2M398.5 9.2V35.9M402.5 4.9V32.1M410.5 4.0V32.2M414.5 5.9V36.7M419.5 6.2V35.4M427.5 4.5V32.7M431.5 3.9V34.4M435.5 3.9V35.6M444.5 8.8V36.6M448.5 7.6V36.3M452.5 8.1V34.2M461.5 7.6V34.2M465.5 4.6V33.6M469.5 4.1V34.5M477.5 3.4V35.7M482.5 7.5V34.6M486.5 3.8V36.9M494.5 7.9V35.2M498.5 8.2V35.6M503.5 7.5V36.4M511.5 7.4V31.6M515.5 8.4V36.3M519.5 8.4V32.9M528.5 5.5V34.7M532.5 6.6V36.8M536.5 9.2V33.7M545.5 5.0V31.4M549.5 8.8V32.8M553.5 7.4V36.0M561.5 7.0V33.9M566.5 8.6V36.8M570.5 4.0V37.1M578.5 6.0V36.4M582.5 7.4V35.9M586.5 4.8V35.1M595.5 7.9V31.7M599.5 7.4V32.6M603.5 4.0V34.6M612.5 4.7V36.6M616.5 6.0V36.0M620.5 3.7V34.0M628.5 8.0V31.8M633.5 6.5V36.7M637.5 6.3V32.6M645.5 6.8V31.8M649.5 6.8V37.3M654.5 6.8V36.1M662.5 5.2V32.3M666.5 6.3V36.5M670.5 7.3V35.7M679.5 5.0V34.6M683.5 7.5V35.8M687.5 8.6V33.4M696.5 8.8V35.5M700.5 3.9V32.4M704.5 3.9V31.4M712.5 7.9V32.4M717.5 6.8V34.0M721.5 6.4V34.5" stroke="#505053" stroke-width="1" fill="none"/><path d="M3.5 2.0V37.9M20.5 2.2V38.0M37.5 2.0V38.8M53.5 2.9V37.9M70.5 2.0V38.1M87.5 2.5V38.4M104.5 2.1V37.7M121.5 3.1V37.6M137.5 3.3V38.5M154.5 2.3V38.1M171.5 3.7V38.2M188.5 3.8V37.4M205.5 2.9V38.1M221.5 2.4V37.9M238.5 2.1V38.5M255.5 3.2V38.0M272.5 2.9V37.1M289.5 3.8V38.5M305.5 2.2V38.9M322.5 2.4V37.7M339.5 2.3V38.2M356.5 2.4V38.6M372.5 3.9V38.3M389.5 2.2V37.5M406.5 2.7V37.4M423.5 2.3V38.3M440.5 2.4V38.8M456.5 3.6V38.5M473.5 2.0V38.4M490.5 3.4V37.4M507.5 3.4V38.8M524.5 1.9V37.7M540.5 3.0V38.3M557.5 2.4V38.8M574.5 2.4V38.7M591.5 2.2V38.3M607.5 2.4V38.8M624.5 2.5V38.8M641.5 1.9V37.8M658.5 2.0V36.9M675.5 3.3V38.1M691.5 2.3V37.9M708.5 2.0V38.1" stroke="#48484b" stroke-width="1" fill="none"/></svg>
<svg width="1036" height="709" viewBox="0 0 1036 709" style="left:0;top:0"><rect x="251.3" y="455.9" width="18" height="9.8" rx="2.8" fill="#26262a"/><rect x="270.5" y="455.9" width="17.7" height="9.8" rx="2.8" fill="#fff"/><rect x="289.6" y="455.9" width="17.5" height="9.8" rx="2.8" fill="#26262a"/></svg>
<div class="t" style="left:254.15px;top:458.98px;font-size:6.10px;font-weight:bold;letter-spacing:0.079px;color:#fff;">0.5x</div>
<div class="t" style="left:276.03px;top:458.98px;font-size:6.10px;font-weight:bold;letter-spacing:-0.300px;color:#1c1c1f;">1x</div>
<div class="t" style="left:295.05px;top:458.98px;font-size:6.10px;font-weight:bold;letter-spacing:-0.271px;color:#fff;">2x</div>
<svg width="1036" height="709" viewBox="0 0 1036 709" style="left:0;top:0"><path d="M245.5 120V521.5" stroke="#e2e2e4" stroke-width="1.15" fill="none"/><path d="M240.2 111a1.1 1.1 0 0 1 1.1-1.1h7.4a1.1 1.1 0 0 1 1.1 1.1v8.2l-4.3 3a0.5 0.5 0 0 1-0.6 0l-4.7-3z" fill="#fff"/></svg>
<div class="ms" style="left:108px;top:151.3px;width:11px;"></div>
<div class="ms" style="left:120.1px;top:151.3px;width:11.4px"></div>
<div class="t" style="left:111.17px;top:154.52px;font-size:6.17px;font-weight:bold;letter-spacing:0.000px;color:#9c9ca0;">M</div>
<div class="t" style="left:123.77px;top:154.46px;font-size:6.17px;font-weight:bold;letter-spacing:0.000px;color:#9c9ca0;">S</div>
<div class="t" style="left:137.38px;top:153.01px;font-size:7.54px;font-weight:normal;letter-spacing:0.096px;color:#fff;-webkit-text-stroke:0.22px #fff">Vocals</div>
<svg width="1036" height="709" viewBox="0 0 1036 709" style="left:0;top:0"><path d="M109 170.4H192.7" stroke="#2c2c30" stroke-width="1" fill="none"/><path d="M109.3 170.4H165" stroke="url(#sg)" stroke-width="1.5" fill="none"/><circle cx="169.6" cy="170.4" r="5" fill="#222225" stroke="#434347" stroke-width="0.9"/><circle cx="169.6" cy="170.4" r="0.75" fill="#00d2b0"/><circle cx="213.3" cy="158.2" r="8.5" fill="#242427" stroke="#56565b" stroke-width="0.85"/><path d="M213.4 149.1V157.7" stroke="#ececee" stroke-width="1.2" fill="none"/></svg>
<div class="t" style="left:205.30px;top:166.75px;font-size:4.66px;font-weight:bold;letter-spacing:0.000px;color:#3e3e42;">L</div>
<div class="t" style="left:219.30px;top:166.75px;font-size:4.66px;font-weight:bold;letter-spacing:0.000px;color:#3e3e42;">R</div>
<div class="ms" style="left:108px;top:195.7px;width:11px;"></div>
<div class="ms" style="left:120.1px;top:195.7px;width:11.4px"></div>
<div class="t" style="left:111.17px;top:198.92px;font-size:6.17px;font-weight:bold;letter-spacing:0.000px;color:#9c9ca0;">M</div>
<div class="t" style="left:123.77px;top:197.86px;font-size:6.17px;font-weight:bold;letter-spacing:0.000px;color:#9c9ca0;">S</div>
<div class="t" style="left:137.20px;top:197.11px;font-size:7.54px;font-weight:normal;letter-spacing:0.070px;color:#fff;-webkit-text-stroke:0.22px #fff">Drums</div>
<svg width="1036" height="709" viewBox="0 0 1036 709" style="left:0;top:0"><path d="M109 214.8H192.7" stroke="#2c2c30" stroke-width="1" fill="none"/><path d="M109.3 214.8H165" stroke="url(#sg)" stroke-width="1.5" fill="none"/><circle cx="169.6" cy="214.8" r="5" fill="#222225" stroke="#434347" stroke-width="0.9"/><circle cx="169.6" cy="214.8" r="0.75" fill="#00d2b0"/><circle cx="213.3" cy="202.6" r="8.5" fill="#242427" stroke="#56565b" stroke-width="0.85"/><path d="M213.4 193.5V202.1" stroke="#ececee" stroke-width="1.2" fill="none"/></svg>
<div class="t" style="left:205.30px;top:211.15px;font-size:4.66px;font-weight:bold;letter-spacing:0.000px;color:#3e3e42;">L</div>
<div class="t" style="left:219.30px;top:211.15px;font-size:4.66px;font-weight:bold;letter-spacing:0.000px;color:#3e3e42;">R</div>
<div class="ms" style="left:108px;top:240.1px;width:11px;"></div>
<div class="ms" style="left:120.1px;top:240.1px;width:11.4px"></div>
<div class="t" style="left:111.17px;top:243.32px;font-size:6.17px;font-weight:bold;letter-spacing:0.000px;color:#9c9ca0;">M</div>
<div class="t" style="left:123.77px;top:243.26px;font-size:6.17px;font-weight:bold;letter-spacing:0.000px;color:#9c9ca0;">S</div>
<div class="t" style="left:137.41px;top:242.47px;font-size:7.54px;font-weight:normal;letter-spacing:-0.262px;color:#fff;-webkit-text-stroke:0.22px #fff">Bass</div>
<svg width="1036" height="709" viewBox="0 0 1036 709" style="left:0;top:0"><path d="M109 259.2H192.7" stroke="#2c2c30" stroke-width="1" fill="none"/><path d="M109.3 259.2H165" stroke="url(#sg)" stroke-width="1.5" fill="none"/><circle cx="169.6" cy="259.2" r="5" fill="#222225" stroke="#434347" stroke-width="0.9"/><circle cx="169.6" cy="259.2" r="0.75" fill="#00d2b0"/><circle cx="213.3" cy="247.0" r="8.5" fill="#242427" stroke="#56565b" stroke-width="0.85"/><path d="M213.4 237.9V246.5" stroke="#ececee" stroke-width="1.2" fill="none"/></svg>
<div class="t" style="left:205.30px;top:255.55px;font-size:4.66px;font-weight:bold;letter-spacing:0.000px;color:#3e3e42;">L</div>
<div class="t" style="left:219.30px;top:255.55px;font-size:4.66px;font-weight:bold;letter-spacing:0.000px;color:#3e3e42;">R</div>
<div class="ms" style="left:108px;top:284.5px;width:11px;"></div>
<div class="ms" style="left:120.1px;top:284.5px;width:11.4px"></div>
<div class="t" style="left:111.17px;top:287.72px;font-size:6.17px;font-weight:bold;letter-spacing:0.000px;color:#9c9ca0;">M</div>
<div class="t" style="left:123.77px;top:287.46px;font-size:6.17px;font-weight:bold;letter-spacing:0.000px;color:#9c9ca0;">S</div>
<div class="t" style="left:137.25px;top:286.47px;font-size:7.54px;font-weight:normal;letter-spacing:-0.162px;color:#fff;-webkit-text-stroke:0.22px #fff">Keys</div>
<svg width="1036" height="709" viewBox="0 0 1036 709" style="left:0;top:0"><path d="M109 303.6H192.7" stroke="#2c2c30" stroke-width="1" fill="none"/><path d="M109.3 303.6H165" stroke="url(#sg)" stroke-width="1.5" fill="none"/><circle cx="169.6" cy="303.6" r="5" fill="#222225" stroke="#434347" stroke-width="0.9"/><circle cx="169.6" cy="303.6" r="0.75" fill="#00d2b0"/><circle cx="213.3" cy="291.4" r="8.5" fill="#242427" stroke="#56565b" stroke-width="0.85"/><path d="M213.4 282.3V290.9" stroke="#ececee" stroke-width="1.2" fill="none"/></svg>
<div class="t" style="left:205.30px;top:299.95px;font-size:4.66px;font-weight:bold;letter-spacing:0.000px;color:#3e3e42;">L</div>
<div class="t" style="left:219.30px;top:299.95px;font-size:4.66px;font-weight:bold;letter-spacing:0.000px;color:#3e3e42;">R</div>
<div class="ms" style="left:108px;top:328.9px;width:11px;"></div>
<div class="ms" style="left:120.1px;top:328.9px;width:11.4px"></div>
<div class="t" style="left:111.17px;top:332.12px;font-size:6.17px;font-weight:bold;letter-spacing:0.000px;color:#9c9ca0;">M</div>
<div class="t" style="left:123.77px;top:332.06px;font-size:6.17px;font-weight:bold;letter-spacing:0.000px;color:#9c9ca0;">S</div>
<div class="t" style="left:137.35px;top:330.71px;font-size:7.54px;font-weight:normal;letter-spacing:0.030px;color:#fff;-webkit-text-stroke:0.22px #fff">Electric Guitar</div>
<svg width="1036" height="709" viewBox="0 0 1036 709" style="left:0;top:0"><path d="M109 348.0H192.7" stroke="#2c2c30" stroke-width="1" fill="none"/><path d="M109.3 348.0H165" stroke="url(#sg)" stroke-width="1.5" fill="none"/><circle cx="169.6" cy="348.0" r="5" fill="#222225" stroke="#434347" stroke-width="0.9"/><circle cx="169.6" cy="348.0" r="0.75" fill="#00d2b0"/><circle cx="213.3" cy="335.8" r="8.5" fill="#242427" stroke="#56565b" stroke-width="0.85"/><path d="M213.4 326.7V335.3" stroke="#ececee" stroke-width="1.2" fill="none"/></svg>
<div class="t" style="left:205.30px;top:344.35px;font-size:4.66px;font-weight:bold;letter-spacing:0.000px;color:#3e3e42;">L</div>
<div class="t" style="left:219.30px;top:344.35px;font-size:4.66px;font-weight:bold;letter-spacing:0.000px;color:#3e3e42;">R</div>
<div class="ms" style="left:108px;top:373.3px;width:11px;"></div>
<div class="ms" style="left:120.1px;top:373.3px;width:11.4px"></div>
<div class="t" style="left:111.17px;top:376.52px;font-size:6.17px;font-weight:bold;letter-spacing:0.000px;color:#9c9ca0;">M</div>
<div class="t" style="left:123.77px;top:376.46px;font-size:6.17px;font-weight:bold;letter-spacing:0.000px;color:#9c9ca0;">S</div>
<div class="t" style="left:137.46px;top:374.61px;font-size:7.54px;font-weight:normal;letter-spacing:0.096px;color:#fff;-webkit-text-stroke:0.22px #fff">Acoustic Guitar</div>
<svg width="1036" height="709" viewBox="0 0 1036 709" style="left:0;top:0"><path d="M109 392.4H192.7" stroke="#2c2c30" stroke-width="1" fill="none"/><path d="M109.3 392.4H165" stroke="url(#sg)" stroke-width="1.5" fill="none"/><circle cx="169.6" cy="392.4" r="5" fill="#222225" stroke="#434347" stroke-width="0.9"/><circle cx="169.6" cy="392.4" r="0.75" fill="#00d2b0"/><circle cx="213.3" cy="380.2" r="8.5" fill="#242427" stroke="#56565b" stroke-width="0.85"/><path d="M213.4 371.1V379.7" stroke="#ececee" stroke-width="1.2" fill="none"/></svg>
<div class="t" style="left:205.30px;top:388.75px;font-size:4.66px;font-weight:bold;letter-spacing:0.000px;color:#3e3e42;">L</div>
<div class="t" style="left:219.30px;top:388.75px;font-size:4.66px;font-weight:bold;letter-spacing:0.000px;color:#3e3e42;">R</div>
<div class="ms" style="left:108px;top:417.7px;width:11px;"></div>
<div class="ms" style="left:120.1px;top:417.7px;width:11.4px"></div>
<div class="t" style="left:111.17px;top:420.92px;font-size:6.17px;font-weight:bold;letter-spacing:0.000px;color:#9c9ca0;">M</div>
<div class="t" style="left:123.77px;top:419.86px;font-size:6.17px;font-weight:bold;letter-spacing:0.000px;color:#9c9ca0;">S</div>
<div class="t" style="left:137.21px;top:419.19px;font-size:7.54px;font-weight:normal;letter-spacing:0.085px;color:#fff;-webkit-text-stroke:0.22px #fff">Other</div>
<svg width="1036" height="709" viewBox="0 0 1036 709" style="left:0;top:0"><path d="M109 436.8H192.7" stroke="#2c2c30" stroke-width="1" fill="none"/><path d="M109.3 436.8H165" stroke="url(#sg)" stroke-width="1.5" fill="none"/><circle cx="169.6" cy="436.8" r="5" fill="#222225" stroke="#434347" stroke-width="0.9"/><circle cx="169.6" cy="436.8" r="0.75" fill="#00d2b0"/><circle cx="213.3" cy="424.6" r="8.5" fill="#242427" stroke="#56565b" stroke-width="0.85"/><path d="M213.4 415.5V424.1" stroke="#ececee" stroke-width="1.2" fill="none"/></svg>
<div class="t" style="left:205.30px;top:433.15px;font-size:4.66px;font-weight:bold;letter-spacing:0.000px;color:#3e3e42;">L</div>
<div class="t" style="left:219.30px;top:433.15px;font-size:4.66px;font-weight:bold;letter-spacing:0.000px;color:#3e3e42;">R</div>
<div class="ms" style="left:108px;top:462.1px;width:11px;background:#19170f"></div>
<div class="ms" style="left:120.1px;top:462.1px;width:11.4px"></div>
<div class="t" style="left:111.17px;top:465.38px;font-size:6.17px;font-weight:bold;letter-spacing:0.000px;color:#f2b705;">M</div>
<div class="t" style="left:123.77px;top:465.26px;font-size:6.17px;font-weight:bold;letter-spacing:0.000px;color:#9c9ca0;">S</div>
<div class="t" style="left:135.68px;top:459.18px;font-size:7.54px;font-weight:normal;letter-spacing:0.198px;color:#fff;-webkit-text-stroke:0.22px #fff">Smart</div>
<div class="t" style="left:135.94px;top:468.25px;font-size:7.54px;font-weight:normal;letter-spacing:0.153px;color:#fff;-webkit-text-stroke:0.22px #fff">Metronome</div>
<svg width="1036" height="709" viewBox="0 0 1036 709" style="left:0;top:0"><path d="M109 481.2H192.7" stroke="#2c2c30" stroke-width="1" fill="none"/><circle cx="169.6" cy="481.2" r="5" fill="#222225" stroke="#434347" stroke-width="0.9"/><circle cx="213.3" cy="469.0" r="8.5" fill="#242427" stroke="#56565b" stroke-width="0.85"/><path d="M213.4 459.9V468.5" stroke="#ececee" stroke-width="1.2" fill="none"/></svg>
<div class="t" style="left:205.30px;top:477.55px;font-size:4.66px;font-weight:bold;letter-spacing:0.000px;color:#3e3e42;">L</div>
<div class="t" style="left:219.30px;top:477.55px;font-size:4.66px;font-weight:bold;letter-spacing:0.000px;color:#3e3e42;">R</div>
<svg width="0" height="0" style="left:0;top:0"><defs><linearGradient id="sg" x1="109" x2="166" y1="0" y2="0" gradientUnits="userSpaceOnUse"><stop offset="0" stop-color="#00b6ea"/><stop offset="0.45" stop-color="#00bcd8"/><stop offset="1" stop-color="#00d8a2"/></linearGradient></defs></svg>
<div class="t" style="left:155.54px;top:512.41px;font-size:7.54px;font-weight:normal;letter-spacing:-0.198px;color:#5a5a5f;">Reset</div>
<svg style="left:467px;top:614.7px" width="14.4" height="9.6" viewBox="0 0 14.4 9.6"><g fill="none" stroke="#d8d8dc" stroke-width="0.95" stroke-linecap="round" stroke-linejoin="round"><path d="M0.6 3.2H2.6L5.8 0.7V8.9L2.6 6.4H0.6Z"/><path d="M8.4 2.6A3 3 0 0 1 8.4 7M10.6 0.9A5.4 5.4 0 0 1 10.6 8.7"/></g></svg>
<svg style="left:497.2px;top:614.8px" width="14.6" height="9.2" viewBox="0 0 14.6 9.2"><path d="M7.4 0.3V8.9L0.3 4.6ZM14.4 0.3V8.9L7.3 4.6Z" fill="#f4f4f6" stroke="#f4f4f6" stroke-width="0.5" stroke-linejoin="round"/></svg>
<svg style="left:529.2px;top:612.4px" width="12.4" height="13.6" viewBox="0 0 12.4 13.6"><path d="M0.6 0.8V12.8L11.6 6.8Z" fill="#f4f4f6" stroke="#f4f4f6" stroke-width="0.9" stroke-linejoin="round"/></svg>
<svg style="left:557.4px;top:614.8px" width="14.6" height="9.2" viewBox="0 0 14.6 9.2"><path d="M0.3 0.3V8.9L7.4 4.6ZM7.3 0.3V8.9L14.4 4.6Z" fill="#f4f4f6" stroke="#f4f4f6" stroke-width="0.5" stroke-linejoin="round"/></svg>
<svg width="1036" height="709" viewBox="0 0 1036 709" style="left:0;top:0"><g fill="none" stroke="#c4c4c8" stroke-width="1" stroke-linecap="round" stroke-linejoin="round"><path d="M594.2 623H593.1A3.55 3.55 0 0 1 593.1 615.9H596.2M594.7 614.3L596.4 615.9L594.7 617.6"/><path d="M597.4 615.9H598.5A3.55 3.55 0 0 1 598.5 623H595.4M596.9 621.3L595.2 623L596.9 624.7"/></g></svg>
<div class="t" style="left:419.05px;top:633.80px;font-size:7.80px;font-weight:normal;letter-spacing:0.143px;color:#707075;">0:00</div>
<div class="t" style="left:642.00px;top:633.54px;font-size:7.80px;font-weight:normal;letter-spacing:-0.657px;color:#707075;">1:59</div>
<svg width="1036" height="709" viewBox="0 0 1036 709" style="left:0;top:0"><path d="M448 637.55H631" stroke="#343438" stroke-width="2.3" stroke-linecap="round" fill="none"/><circle cx="447.6" cy="637.5" r="3.5" fill="#6c6c71"/></svg>
<div class="btn" style="left:755px;top:617px;width:62px;height:23.2px"></div>
<div class="btn" style="left:824.5px;top:617px;width:68px;height:23.2px"></div>
<div class="btn" style="left:899.8px;top:617px;width:68.4px;height:23.2px"></div>
<svg width="1036" height="709" viewBox="0 0 1036 709" style="left:0;top:0"><path d="M765.3 623.55H773.1A1.6 1.6 0 0 1 774.7 625.15V630.75A1.6 1.6 0 0 1 773.1 632.35H766.2L763.65 634V625.15A1.6 1.6 0 0 1 765.3 623.55Z" fill="none" stroke="#d4d4d8" stroke-width="1.1" stroke-linejoin="round"/><path d="M767 627h1.55v1.4l-0.9 1.55h-0.75l0.55-1.45h-0.45zM770.2 627h1.55v1.4l-0.9 1.55h-0.75l0.55-1.45h-0.45z" fill="#d4d4d8"/></svg>
<div class="t" style="left:783.15px;top:625.08px;font-size:8.23px;font-weight:bold;letter-spacing:-0.090px;color:#fff;">Lyrics</div>
<svg width="1036" height="709" viewBox="0 0 1036 709" style="left:0;top:0"><g fill="none" stroke="#d4d4d8" stroke-width="1.05"><path d="M838.9 634.8V624.6A1.1 1.1 0 0 1 840 623.5H847.3A1.1 1.1 0 0 1 848.4 624.6V634.8M842.05 623.5V634.8M845.2 623.5V634.8M838.9 630.4H848.4"/></g><circle cx="845.2" cy="626.9" r="1.05" fill="#fff"/><circle cx="842.05" cy="633.3" r="1.05" fill="#fff"/></svg>
<div class="t" style="left:855.87px;top:624.90px;font-size:8.23px;font-weight:bold;letter-spacing:0.059px;color:#fff;">Chords</div>
<svg width="1036" height="709" viewBox="0 0 1036 709" style="left:0;top:0"><g fill="none" stroke="#d4d4d8" stroke-width="1.05" stroke-linecap="round" stroke-linejoin="round"><path d="M914.5 625.5H909.7A2 2 0 0 0 907.7 627.5V628.4A2 2 0 0 0 909.7 630.4H918.2A2 2 0 0 0 920.2 628.4V627.5A2 2 0 0 0 918.2 625.5H917.1"/><path d="M912.6 623.3L914.8 625.5L912.6 627.7"/><path d="M907.7 632.2V632.5A2 2 0 0 0 909.7 634.5H918.2A2 2 0 0 0 920.2 632.5V632.2"/></g></svg>
<div class="t" style="left:925.85px;top:625.08px;font-size:8.23px;font-weight:bold;letter-spacing:0.011px;color:#fff;">Sections</div>
</body></html>
